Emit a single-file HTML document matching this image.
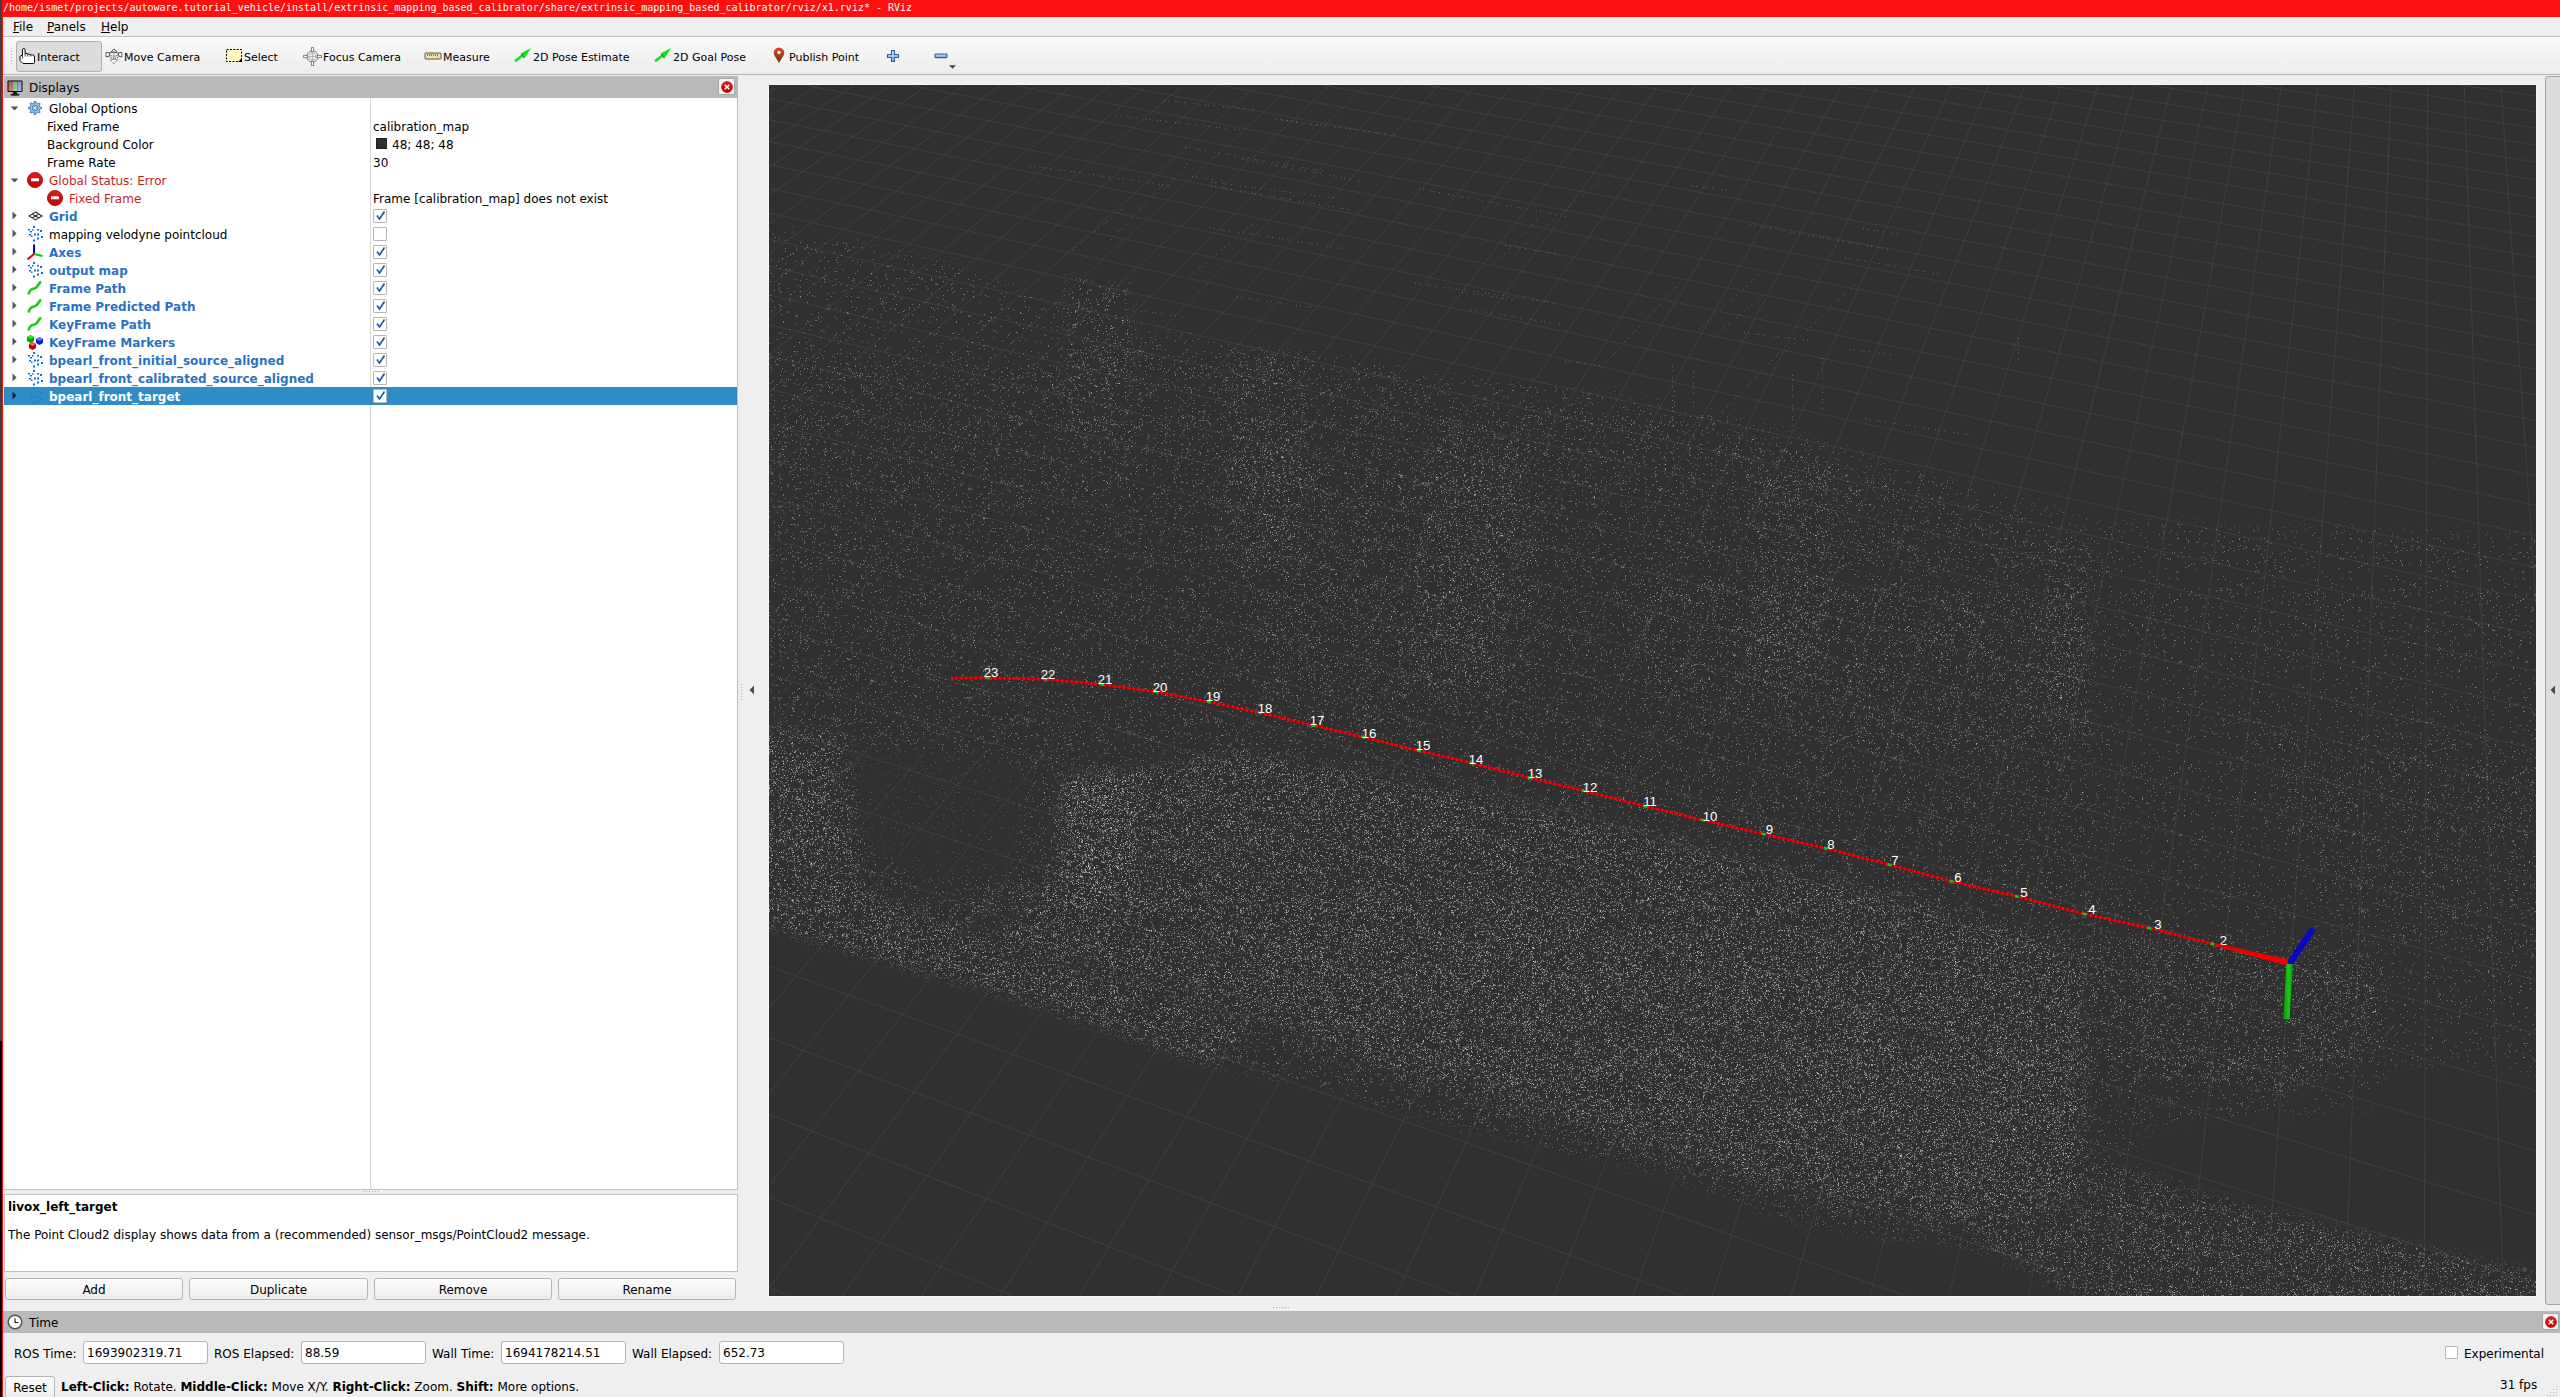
<!DOCTYPE html>
<html><head><meta charset="utf-8"><title>RViz</title>
<style>
*{box-sizing:border-box;margin:0;padding:0}
html,body{width:2560px;height:1397px;overflow:hidden;background:#efefef}
body{position:relative;font:12px "DejaVu Sans","Liberation Sans",sans-serif;color:#000}
body>div,body>svg,body>span{position:absolute}
#edgeL1{left:0;top:0;width:2px;height:1041px;background:#3c4043}
#edgeL2{left:0;top:1041px;width:2px;height:356px;background:#000}
#edgeR{left:2px;top:0;width:1px;height:1397px;background:#ff0d0d}
#title{left:2px;top:0;width:2558px;height:17px;background:#ff1010;color:#fff;font:10px "DejaVu Sans Mono","Liberation Mono",monospace;line-height:15px;padding-left:1px;white-space:pre}
#menubar{left:3px;top:17px;width:2557px;height:19px;background:#efefef}
#menuline{left:3px;top:36px;width:2557px;height:1px;background:#c4c4c4}
#menubar span{position:absolute;top:3px;line-height:15px}
#menubar u{text-decoration:underline;text-underline-offset:1px}
#toolbar{left:3px;top:37px;width:2557px;height:37px;background:linear-gradient(#f9f9f9,#ececec)}
#toolline{left:3px;top:74px;width:2557px;height:1px;background:#b4b4b4}
.tb{position:absolute;top:2px;height:38px;line-height:38px;white-space:nowrap;font-size:11px}
#toolbar svg{position:absolute}
#interact{position:absolute;left:13px;top:4px;width:86px;height:31px;border:1px solid #b0b0b0;border-radius:3px;background:#dcdcdc}
.hdr{background:#b9b9b9;height:22px;line-height:24px}
.hdr svg{position:absolute}
.xbtn{position:absolute;width:17px;height:17px;top:2px;border:1px solid #a8a8a8;border-radius:2px;background:#f4f4f4}
.xbtn svg{left:1.5px;top:1.5px}
#disphdr{left:4px;top:76px;width:734px;height:23px;background:linear-gradient(#b9b9b9 0,#b9b9b9 22px,#d6d6d6 22px,#d6d6d6 23px)}
#tree{left:4px;top:98px;width:734px;height:1092px;background:#fff;border:1px solid #c0c0c0;border-top:none;border-left:none}
#coldiv{left:370px;top:98px;width:1px;height:1091px;background:#d8d8d8}
.row{position:absolute;left:5px;width:732px;height:18px;line-height:18px;white-space:nowrap}
.row span{position:absolute;top:1px}
.row svg{position:absolute}
.selrow{background:#308cc6;box-shadow:-1px 0 0 #308cc6}
.selrow span{color:#fff!important}
.blue{color:#2a72c4;font-weight:bold}
.red{color:#c81e1e}
.cb{position:absolute;left:368px;top:2px;width:14px;height:14px;border:1px solid #b8b8b8;background:#fff;border-radius:1px}
.sw{position:absolute;left:371px;top:3px;width:11px;height:11px;background:#303030;border:1px solid #202020}
#desc{left:4px;top:1194px;width:734px;height:78px;background:#fff;border:1px solid #c0c0c0}
.btn{position:absolute;height:22px;border:1px solid #b4b4b4;border-radius:3px;background:linear-gradient(#fdfdfd,#ececec);text-align:center;line-height:22px}
.fld{position:absolute;top:1341px;height:23px;width:125px;border:1px solid #b4b4b4;border-radius:3px;background:#fff;line-height:23px;padding-left:3px}
.lbl{position:absolute;top:1346px;line-height:16px;white-space:nowrap}
#view{left:769px;top:85px;width:1767px;height:1211px;background:#303030;box-shadow:0 0 0 1px #f6f6f6}
</style></head><body>
<svg width="0" height="0" style="position:absolute"><defs>
<linearGradient id="gRed" x1="0" y1="0" x2="0" y2="1"><stop offset="0" stop-color="#e02020"/><stop offset="1" stop-color="#c00000"/></linearGradient>
<linearGradient id="gPin" x1="0" y1="0" x2="0" y2="1"><stop offset="0" stop-color="#f0402a"/><stop offset="1" stop-color="#5a3a10"/></linearGradient>
<linearGradient id="gBlu" x1="0" y1="0" x2="0" y2="1"><stop offset="0" stop-color="#c8dcf4"/><stop offset="1" stop-color="#7aa6dc"/></linearGradient>
<symbol id="iErr" viewBox="0 0 16 16"><circle cx="8" cy="8" r="7.6" fill="url(#gRed)" stroke="#b00000" stroke-width=".8"/><rect x="4" y="6.3" width="8" height="3" rx=".6" fill="#fff"/></symbol>
<symbol id="iClose" viewBox="0 0 12 12"><circle cx="6" cy="6" r="5.5" fill="url(#gRed)" stroke="#b00000" stroke-width=".6"/><path d="M4.2 4.2L7.8 7.8M7.8 4.2L4.2 7.8" stroke="#fff" stroke-width="1.6" stroke-linecap="round"/></symbol>
<symbol id="iPC" viewBox="0 0 16 16"><g fill="#0a6cf0"><rect x="6" y="0" width="2" height="2"/><rect x="1" y="3" width="2" height="1.5"/><rect x="5" y="3" width="1.5" height="1.5"/><rect x="10" y="3" width="2" height="1.5"/><rect x="13" y="4" width="2" height="2"/><rect x="3" y="5" width="2" height="1.5"/><rect x="2" y="8" width="2" height="1.5"/><rect x="4" y="9.5" width="1.5" height="1.5"/><rect x="7" y="7.5" width="2" height="2"/><rect x="10" y="7.5" width="2" height="2"/><rect x="10" y="11.5" width="2" height="2"/><rect x="14" y="10" width="2" height="2"/><rect x="6" y="13.5" width="2" height="2"/></g></symbol>
<symbol id="iPath" viewBox="0 0 16 16"><path d="M1.5 14.5C3 8 6 9.5 8.5 8S11.5 3.5 14 1.5" fill="none" stroke="#16d016" stroke-width="2.6" stroke-linecap="butt"/></symbol>
<symbol id="iAxes" viewBox="0 0 16 16"><path d="M7 0.5V10" stroke="#0000e6" stroke-width="2"/><path d="M7 10L15.5 12" stroke="#00d000" stroke-width="2"/><path d="M7 10L0.5 15.5" stroke="#e60000" stroke-width="2"/></symbol>
<symbol id="iGrid" viewBox="0 0 16 10"><path d="M8 .8L15 5L8 9.2L1 5ZM4.5 2.9L11.5 7.1M11.5 2.9L4.5 7.1" fill="none" stroke="#222" stroke-width="1.1"/></symbol>
<symbol id="iGear" viewBox="0 0 14 14"><path d="M11.83 6.16L13.55 6.17L13.55 7.83L11.83 7.84L11.01 9.82L12.22 11.05L11.05 12.22L9.82 11.01L7.84 11.83L7.83 13.55L6.17 13.55L6.16 11.83L4.18 11.01L2.95 12.22L1.78 11.05L2.99 9.82L2.17 7.84L0.45 7.83L0.45 6.17L2.17 6.16L2.99 4.18L1.78 2.95L2.95 1.78L4.18 2.99L6.16 2.17L6.17 0.45L7.83 0.45L7.84 2.17L9.82 2.99L11.05 1.78L12.22 2.95L11.01 4.18Z" fill="#a9c6ea" stroke="#3a78c8" stroke-width="1" stroke-linejoin="round"/><circle cx="7" cy="7" r="2.900" fill="none" stroke="#3a78c8" stroke-width=".9"/><circle cx="7" cy="7" r="1.500" fill="#fff" stroke="#6f9bd6" stroke-width=".8"/></symbol>
<symbol id="iMark" viewBox="0 0 16 16"><path d="M0 3L3.5 1L7 3V7L3.5 9L0 7Z" fill="#00a800"/><path d="M0 3L3.5 1L7 3L3.5 5Z" fill="#20f020"/><path d="M9 5L12.5 3L16 5V9L12.5 11L9 9Z" fill="#1020c0"/><path d="M9 5L12.5 3L16 5L12.5 7Z" fill="#6080ff"/><path d="M2 10L5.5 8L9 10V14L5.5 16L2 14Z" fill="#c00000"/><path d="M2 10L5.5 8L9 10L5.5 12Z" fill="#ff6060"/></symbol>
<symbol id="iArrR" viewBox="0 0 5 9"><path d="M.5 .5L4.6 4.5L.5 8.5Z" fill="#555"/></symbol>
<symbol id="iArrRS" viewBox="0 0 5 9"><path d="M.5 .5L4.6 4.5L.5 8.5Z" fill="#0e2a44"/></symbol>
<symbol id="iArrD" viewBox="0 0 9 5"><path d="M.5 .5L8.5 .5L4.5 4.6Z" fill="#555"/></symbol>
<symbol id="iChk" viewBox="0 0 13 13"><path d="M3 6.5L5.5 10L10.5 2.5" fill="none" stroke="#1c5cb0" stroke-width="1.7"/></symbol>
<symbol id="iGreenArr" viewBox="0 0 16 14"><path d="M1 12.5L8.5 6.5" stroke="#10e020" stroke-width="2.4"/><path d="M6.3 5.2L16 0L10 9.6Z" fill="#10e020"/><path d="M6.8 5.6L9.6 9.2" stroke="#0a9a14" stroke-width="1"/></symbol>
</defs></svg>

<div id="edgeL1"></div><div id="edgeL2"></div>
<div id="title">/home/ismet/projects/autoware.tutorial_vehicle/install/extrinsic_mapping_based_calibrator/share/extrinsic_mapping_based_calibrator/rviz/x1.rviz* - RViz</div>
<div id="edgeR"></div>
<div id="menubar"><span style="left:10px"><u>F</u>ile</span><span style="left:44px"><u>P</u>anels</span><span style="left:98px"><u>H</u>elp</span></div>
<div id="menuline"></div>
<div id="toolbar">
<svg style="left:7px;top:10px" width="3" height="18"><g fill="#b4b4b4"><rect x="1" y="1" width="1" height="1"/><rect x="1" y="4" width="1" height="1"/><rect x="1" y="7" width="1" height="1"/><rect x="1" y="10" width="1" height="1"/><rect x="1" y="13" width="1" height="1"/><rect x="1" y="16" width="1" height="1"/></g></svg>
<div id="interact"></div>
<svg style="left:16px;top:11px" width="16" height="16" viewBox="0 0 16 16"><path d="M4 15.5L1 12.5V8.2L3.5 7V1.8Q3.5.5 4.8.5T6.1 1.8V5.5H8.2L8.6 6.2H10.8L11.2 6.9H13.4Q15.5 6.9 15.5 9V14.5Q15.5 15.5 14.5 15.5Z" fill="#fff" stroke="#000" stroke-width=".95" stroke-linejoin="round"/><path d="M3.5 7V10.5M6.1 5.5V8.5M8.6 6.2V8.5M11.2 6.9V8.8" stroke="#000" stroke-width=".7"/></svg>
<span class="tb" style="left:34px">Interact</span>
<svg style="left:102px;top:11px" width="18" height="17" viewBox="0 0 18 17"><rect x="8.1" y="4.200" width="1.600" height="7.500" fill="#c6c6c6"/><g fill="#fff" stroke-width=".9" stroke-linejoin="round"><path d="M8.900 .9L12 4.300H5.800Z" stroke="#484848"/><path d="M8.900 15.900L12.800 11.600H5Z" stroke="#8c8c8c"/><path d="M1 4.300L4.600 4.900V7.900L1 9Z" stroke="#484848"/><path d="M16.800 4.300L13.200 4.900V7.900L16.800 9Z" stroke="#484848"/></g><g fill="none" stroke="#3c3c3c" stroke-width=".9" stroke-dasharray="1.400 .9"><ellipse cx="8.900" cy="6.100" rx="4.600" ry="2"/><path d="M3.400 8.300Q8.900 12.300 14.400 8.300"/></g></svg>
<span class="tb" style="left:121px">Move Camera</span>
<svg style="left:222px;top:11px" width="18" height="15" viewBox="0 0 18 15"><rect x="1.5" y="1.5" width="15" height="12" fill="#fdf8c0" stroke="#000" stroke-width="1" stroke-dasharray="2 1.4"/><path d="M17 10V14H13Z" fill="#000"/></svg>
<span class="tb" style="left:241px">Select</span>
<svg style="left:300px;top:10px" width="19" height="19" viewBox="0 0 19 19"><g fill="none" stroke="#777" stroke-width="1"><circle cx="9.5" cy="9.5" r="5.6"/><circle cx="9.5" cy="9.5" r="3.4" stroke-dasharray="1.4 1"/></g><g fill="#fff" stroke="#777" stroke-width=".9"><rect x="8.4" y=".6" width="2.2" height="4.2"/><rect x="8.4" y="14.2" width="2.2" height="4.2"/><rect x=".6" y="8.4" width="4.2" height="2.2"/><rect x="14.2" y="8.4" width="4.2" height="2.2"/></g><path d="M9.5 5V14M5 9.5H14" stroke="#aaa" stroke-width=".8"/></svg>
<span class="tb" style="left:320px">Focus Camera</span>
<svg style="left:421px;top:15px" width="18" height="8" viewBox="0 0 18 8"><rect x="1" y="1" width="16" height="6" rx=".6" fill="#f0e4a8" stroke="#555" stroke-width="1"/><path d="M3.5 2V4M5.5 2V4M7.5 2V4M9.5 2V4M11.5 2V4M13.5 2V4.5" stroke="#555" stroke-width=".8"/></svg>
<span class="tb" style="left:440px">Measure</span>
<svg style="left:511px;top:11px" width="17" height="15" viewBox="0 0 16 14"><use href="#iGreenArr"/></svg>
<span class="tb" style="left:530px">2D Pose Estimate</span>
<svg style="left:651px;top:11px" width="17" height="15" viewBox="0 0 16 14"><use href="#iGreenArr"/></svg>
<span class="tb" style="left:670px">2D Goal Pose</span>
<svg style="left:770px;top:10px" width="12" height="17" viewBox="0 0 12 17"><path d="M6 16.5C4.5 12 .7 9.5 .7 5.8A5.3 5.3 0 0 1 11.3 5.800C11.3 9.500 7.500 12 6 16.500Z" fill="url(#gPin)"/><circle cx="6" cy="5.400" r="1.700" fill="#fff"/></svg>
<span class="tb" style="left:786px">Publish Point</span>
<svg style="left:883px;top:12px" width="14" height="14" viewBox="0 0 14 14"><path d="M5.500 1.500H8.500V5.500H12.500V8.500H8.500V12.500H5.500V8.500H1.500V5.500H5.500Z" fill="url(#gBlu)" stroke="#2c5ca4" stroke-width="1.100" stroke-linejoin="round"/></svg>
<svg style="left:931px;top:16px" width="14" height="6" viewBox="0 0 14 6"><rect x="1" y="1" width="12" height="3.600" rx=".8" fill="url(#gBlu)" stroke="#2c5ca4" stroke-width="1.100"/></svg>
<svg style="left:946px;top:28px" width="7" height="4" viewBox="0 0 7 4"><path d="M0 .3H7L3.500 3.800Z" fill="#444"/></svg>
</div>
<div id="toolline"></div>
<div id="disphdr" class="hdr"><svg style="left:3px;top:4px" width="16" height="16" viewBox="0 0 16 16"><defs><linearGradient id="gm" x1="0" y1="0" x2="1" y2="1"><stop offset="0" stop-color="#000" stop-opacity=".25"/><stop offset="1" stop-color="#fff" stop-opacity=".25"/></linearGradient></defs><rect x=".5" y=".5" width="15" height="11.500" rx="1" fill="#000"/><rect x="1.500" y="1.500" width="4.400" height="9.500" fill="#e07878"/><rect x="5.900" y="1.500" width="4.400" height="9.500" fill="#78e078"/><rect x="10.300" y="1.500" width="4.200" height="9.500" fill="#9898f0"/><rect x="1.500" y="1.500" width="13" height="9.500" fill="url(#gm)"/><path d="M6.500 12H9.500L10.500 14H5.500Z" fill="#000"/><ellipse cx="8" cy="14.800" rx="4.800" ry="1" fill="#222"/></svg><span style="position:absolute;left:25px">Displays</span><div class="xbtn" style="left:714px"><svg width="12" height="12"><use href="#iClose"/></svg></div></div>
<div id="tree"></div>
<div id="coldiv"></div>
<div class="row" style="top:99px"><svg style="left:5px;top:7px" width="9" height="5"><use href="#iArrD"/></svg><svg style="left:23px;top:2px" width="14" height="14"><use href="#iGear"/></svg><span class="" style="left:44px">Global Options</span></div>
<div class="row" style="top:117px"><span class="" style="left:42px">Fixed Frame</span><span style="left:368px">calibration_map</span></div>
<div class="row" style="top:135px"><span class="" style="left:42px">Background Color</span><i class="sw"></i><span style="left:387px">48; 48; 48</span></div>
<div class="row" style="top:153px"><span class="" style="left:42px">Frame Rate</span><span style="left:368px">30</span></div>
<div class="row" style="top:171px"><svg style="left:5px;top:7px" width="9" height="5"><use href="#iArrD"/></svg><svg style="left:22px;top:1px" width="16" height="16"><use href="#iErr"/></svg><span class="red" style="left:44px">Global Status: Error</span></div>
<div class="row" style="top:189px"><svg style="left:42px;top:1px" width="16" height="16"><use href="#iErr"/></svg><span class="red" style="left:64px">Fixed Frame</span><span style="left:368px">Frame [calibration_map] does not exist</span></div>
<div class="row" style="top:207px"><svg style="left:7px;top:4px" width="5" height="9"><use href="#iArrR"/></svg><svg style="left:23px;top:4px" width="15" height="10"><use href="#iGrid"/></svg><span class="blue" style="left:44px">Grid</span><i class="cb"></i><svg style="left:369px;top:2px" width="13" height="13"><use href="#iChk"/></svg></div>
<div class="row" style="top:225px"><svg style="left:7px;top:4px" width="5" height="9"><use href="#iArrR"/></svg><svg style="left:22px;top:1px" width="16" height="16"><use href="#iPC"/></svg><span class="" style="left:44px">mapping velodyne pointcloud</span><i class="cb"></i></div>
<div class="row" style="top:243px"><svg style="left:7px;top:4px" width="5" height="9"><use href="#iArrR"/></svg><svg style="left:22px;top:1px" width="16" height="16"><use href="#iAxes"/></svg><span class="blue" style="left:44px">Axes</span><i class="cb"></i><svg style="left:369px;top:2px" width="13" height="13"><use href="#iChk"/></svg></div>
<div class="row" style="top:261px"><svg style="left:7px;top:4px" width="5" height="9"><use href="#iArrR"/></svg><svg style="left:22px;top:1px" width="16" height="16"><use href="#iPC"/></svg><span class="blue" style="left:44px">output map</span><i class="cb"></i><svg style="left:369px;top:2px" width="13" height="13"><use href="#iChk"/></svg></div>
<div class="row" style="top:279px"><svg style="left:7px;top:4px" width="5" height="9"><use href="#iArrR"/></svg><svg style="left:22px;top:1px" width="16" height="16"><use href="#iPath"/></svg><span class="blue" style="left:44px">Frame Path</span><i class="cb"></i><svg style="left:369px;top:2px" width="13" height="13"><use href="#iChk"/></svg></div>
<div class="row" style="top:297px"><svg style="left:7px;top:4px" width="5" height="9"><use href="#iArrR"/></svg><svg style="left:22px;top:1px" width="16" height="16"><use href="#iPath"/></svg><span class="blue" style="left:44px">Frame Predicted Path</span><i class="cb"></i><svg style="left:369px;top:2px" width="13" height="13"><use href="#iChk"/></svg></div>
<div class="row" style="top:315px"><svg style="left:7px;top:4px" width="5" height="9"><use href="#iArrR"/></svg><svg style="left:22px;top:1px" width="16" height="16"><use href="#iPath"/></svg><span class="blue" style="left:44px">KeyFrame Path</span><i class="cb"></i><svg style="left:369px;top:2px" width="13" height="13"><use href="#iChk"/></svg></div>
<div class="row" style="top:333px"><svg style="left:7px;top:4px" width="5" height="9"><use href="#iArrR"/></svg><svg style="left:22px;top:1px" width="16" height="16"><use href="#iMark"/></svg><span class="blue" style="left:44px">KeyFrame Markers</span><i class="cb"></i><svg style="left:369px;top:2px" width="13" height="13"><use href="#iChk"/></svg></div>
<div class="row" style="top:351px"><svg style="left:7px;top:4px" width="5" height="9"><use href="#iArrR"/></svg><svg style="left:22px;top:1px" width="16" height="16"><use href="#iPC"/></svg><span class="blue" style="left:44px">bpearl_front_initial_source_aligned</span><i class="cb"></i><svg style="left:369px;top:2px" width="13" height="13"><use href="#iChk"/></svg></div>
<div class="row" style="top:369px"><svg style="left:7px;top:4px" width="5" height="9"><use href="#iArrR"/></svg><svg style="left:22px;top:1px" width="16" height="16"><use href="#iPC"/></svg><span class="blue" style="left:44px">bpearl_front_calibrated_source_aligned</span><i class="cb"></i><svg style="left:369px;top:2px" width="13" height="13"><use href="#iChk"/></svg></div>
<div class="row selrow" style="top:387px"><svg style="left:7px;top:4px" width="5" height="9"><use href="#iArrRS"/></svg><svg style="left:22px;top:1px;opacity:.45" width="16" height="16"><use href="#iPC"/></svg><span class="blue" style="left:44px">bpearl_front_target</span><i class="cb"></i><svg style="left:369px;top:2px" width="13" height="13"><use href="#iChk"/></svg></div>
<div id="desc"><b style="position:absolute;left:3px;top:4px;line-height:16px">livox_left_target</b><span style="position:absolute;left:3px;top:32px;line-height:16px;white-space:nowrap">The Point Cloud2 display shows data from a (recommended) sensor_msgs/PointCloud2 message.</span></div>
<div class="btn" style="left:5px;top:1278px;width:178px">Add</div>
<div class="btn" style="left:189px;top:1278px;width:179px">Duplicate</div>
<div class="btn" style="left:374px;top:1278px;width:178px">Remove</div>
<div class="btn" style="left:558px;top:1278px;width:178px">Rename</div>
<div id="timehdr" class="hdr" style="left:3px;top:1311px;width:2557px"><svg style="left:4px;top:3px" width="16" height="16" viewBox="0 0 16 16"><circle cx="8" cy="8" r="6.800" fill="#fff" stroke="#555" stroke-width="1.500"/><path d="M8 4.500V8.500H11.500" fill="none" stroke="#222" stroke-width="1.200"/></svg><span style="position:absolute;left:26px">Time</span><div class="xbtn" style="left:2539px"><svg width="12" height="12"><use href="#iClose"/></svg></div></div>
<span class="lbl" style="left:14px">ROS Time:</span><div class="fld" style="left:83px">1693902319.71</div>
<span class="lbl" style="left:214px">ROS Elapsed:</span><div class="fld" style="left:301px">88.59</div>
<span class="lbl" style="left:432px">Wall Time:</span><div class="fld" style="left:501px">1694178214.51</div>
<span class="lbl" style="left:632px">Wall Elapsed:</span><div class="fld" style="left:719px">652.73</div>
<div class="cb" style="left:2445px;top:1346px;width:13px;height:13px"></div><span class="lbl" style="left:2464px">Experimental</span>
<div class="btn" style="left:5px;top:1376px;width:50px;height:25px;line-height:23px">Reset</div>
<span class="lbl" style="left:61px;top:1379px"><b>Left-Click:</b> Rotate. <b>Middle-Click:</b> Move X/Y. <b>Right-Click:</b> Zoom. <b>Shift:</b> More options.</span>
<span class="lbl" style="left:2500px;top:1377px">31 fps</span>
<div style="left:2545px;top:76px;width:22px;height:1229px;background:#dcdcdc;border:1px solid #a4a4a4;border-radius:3px"></div>
<svg style="left:2550px;top:685px" width="6" height="10"><path d="M5 .5V9.500L.5 5Z" fill="#4a4a4a"/></svg>
<svg style="left:749px;top:685px" width="6" height="10"><path d="M5 .5V9.500L.5 5Z" fill="#4a4a4a"/></svg>
<svg style="left:740px;top:683px" width="3" height="18"><g fill="#b0b0b0"><rect x="1" y="1" width="1" height="1"/><rect x="1" y="4" width="1" height="1"/><rect x="1" y="7" width="1" height="1"/><rect x="1" y="10" width="1" height="1"/><rect x="1" y="13" width="1" height="1"/><rect x="1" y="16" width="1" height="1"/></g></svg>
<svg style="left:362px;top:1190px" width="18" height="3"><g fill="#b0b0b0"><rect x="1" y="1" width="1" height="1"/><rect x="4" y="1" width="1" height="1"/><rect x="7" y="1" width="1" height="1"/><rect x="10" y="1" width="1" height="1"/><rect x="13" y="1" width="1" height="1"/><rect x="16" y="1" width="1" height="1"/></g></svg>
<svg style="left:1272px;top:1306px" width="18" height="3"><g fill="#b0b0b0"><rect x="1" y="1" width="1" height="1"/><rect x="4" y="1" width="1" height="1"/><rect x="7" y="1" width="1" height="1"/><rect x="10" y="1" width="1" height="1"/><rect x="13" y="1" width="1" height="1"/><rect x="16" y="1" width="1" height="1"/></g></svg>
<svg style="left:2547px;top:1385px" width="12" height="12"><g fill="#b8b8b8"><rect x="9" y="1" width="1" height="1"/><rect x="6" y="4" width="1" height="1"/><rect x="9" y="4" width="1" height="1"/><rect x="3" y="7" width="1" height="1"/><rect x="6" y="7" width="1" height="1"/><rect x="9" y="7" width="1" height="1"/><rect x="0" y="10" width="1" height="1"/><rect x="3" y="10" width="1" height="1"/><rect x="6" y="10" width="1" height="1"/><rect x="9" y="10" width="1" height="1"/></g></svg>
<div id="view"></div>
<svg id="v3d" style="left:769px;top:85px" width="1767" height="1211" viewBox="0 0 1767 1211"><defs><clipPath id="vc"><rect width="1767" height="1211"/></clipPath><filter id="bl" x="-5%" y="-5%" width="110%" height="110%"><feGaussianBlur stdDeviation="6"/></filter><filter id="bl2" x="-5%" y="-5%" width="110%" height="110%"><feGaussianBlur stdDeviation="5"/></filter><pattern id="dp0" width="173" height="173" patternUnits="userSpaceOnUse"><path d="M82 38.5h1M12 18h1M24.5 93.5h1M129 54.5h1M111 107.5h1M23 141.5h1M144 31h1M161.5 160.5h1M15.5 147.5h1M12 56.5h1M34 74.5h1M138.5 30.5h1M143 46.5h1M146 163.5h1M24.5 140.5h1M144.5 15.5h1M127 136.5h1M80.5 119.5h1M116 92.5h1M46 62.5h1M76 134.5h1M87 114.5h1M18.5 30.5h1M42 87.5h1M125 107.5h1M171 19h1M146 80.5h1M89 152.5h1M116 17h1M69.5 121.5h1M16.5 15.5h1M79.5 165.5h1M114.5 72.5h1M171 88.5h1M118 90.5h1M29 126.5h1M73.5 33.5h1M101 100h1M127 20.5h1M102 140.5h1M35 110h1M71 106h1M97 59.5h1M45 38.5h1M59 3.5h1M150 46.5h1M1 37.5h1M94.5 156.5h1M32 131h1M167 13.5h1M143 100.5h1M100 26.5h1M102 15.5h1M53 112.5h1M87 153.5h1M0 145.5h1M25.5 93.5h1M18.5 53.5h1M38 162.5h1M88 154.5h1M31 29h1M119 122.5h1M21 36.5h1M87 67.5h1M41 132.5h1M135 92.5h1M139 6h1M76 164h1M66 132.5h1M42 91h1M136 138h1M84 162.5h1M49 61h1M58.5 51.5h1M91 7h1M71 120.5h1M154 88.5h1M89 93.5h1M26 58.5h1M86 52.5h1M156 0.5h1M167 88h1M21 169.5h1M99 51.5h1M45 111h1M85 22h1M101 118.5h1M21 40.5h1M32 7.5h1M119 167.5h1M152.5 121.5h1M89.5 39.5h1M33 5.5h1M166.5 26.5h1M35 111h1M49 54.5h1M54.5 74.5h1M150 83.5h1M107 33.5h1M90.5 117.5h1M132 107h1M128.5 33.5h1M134 130.5h1M112.5 46.5h1M38 44.5h1M158.5 30.5h1M83.5 132.5h1M123 27h1M14 63.5h1M10.5 25.5h1M143 7h1M16 113.5h1M129.5 155.5h1M70.5 115.5h1M122 129h1M133 66h1M51 114.5h1M31 100.5h1M18 171.5h1M18.5 54.5h1M31 39h1M164 169.5h1M64 35h1M56 24.5h1M124 41h1M57.5 41.5h1M131 103.5h1M50 91.5h1M93 4.5h1M117.5 112.5h1M98.5 84.5h1M75 131h1M28 58h1M26 21.5h1M10 46.5h1M33 108h1M66 103.5h1M131 146.5h1M83 22.5h1M46 108h1M68.5 4.5h1M66.5 21.5h1M56 17.5h1M31 116.5h1M141 106h1M68 159.5h1M134 61h1M41 67.5h1M51.5 79.5h1M135 52.5h1M128 172.5h1M88 4h1M9 3.5h1M129 141h1M131 121.5h1M114.5 27.5h1M166.5 110.5h1M139 100h1M78 55h1M87 50h1M162 35.5h1M88 13h1M3.5 18.5h1M65 110.5h1M21 170h1M129 171h1M153.5 62.5h1M11 117.5h1M68 114.5h1M93 84h1M140 82.5h1M79 55.5h1M0 85.5h1M121.5 71.5h1M51.5 63.5h1M1 23.5h1M22 36.5h1M10 100.5h1M77 161.5h1M149 135h1M39 168h1M152 99h1M126 38.5h1M158 164.5h1M131 160.5h1M129 35h1M129 145h1M4 149h1M164 58.5h1M10.5 34.5h1M26 96h1M142.5 12.5h1M160.5 136.5h1M125 67.5h1M17 128h1M23.5 168.5h1M121 64h1M67.5 60.5h1M52.5 59.5h1M117 126h1M19 122h1M73.5 11.5h1M164 50.5h1M37 84.5h1M77.5 159.5h1M3 123.5h1M68 172.5h1M55 172.5h1M132 73.5h1M119 30h1M140 51.5h1M21 121.5h1M117 19h1M115 68.5h1M53.5 19.5h1M36 134.5h1M92.5 33.5h1M161 130.5h1M28 93.5h1M124 100.5h1M0.5 125.5h1M103.5 77.5h1M106 88.5h1M30 84.5h1M86 101.5h1M50 3h1M74 64.5h1M100 99h1M150 19.5h1M109 70h1M71 26.5h1M169.5 73.5h1M38 63h1M111 130.5h1M95 109h1M161 102h1M141 140.5h1M20 12h1M105.5 115.5h1M35 164h1M124 12h1M140 32.5h1M106 87.5h1M65 167.5h1M167 61.5h1M142 171.5h1M42 164.5h1M53 128h1M127 140.5h1M85 115.5h1M140 49.5h1M44.5 87.5h1M81 61.5h1M145 51h1M105 98.5h1M134 53.5h1M86 15.5h1M147 92.5h1M128.5 135.5h1M55 23.5h1M63 98.5h1M114 110h1M5 32.5h1M121 150.5h1M18 100h1M135 119h1M63 27.5h1M38 133h1M27 165h1M117.5 21.5h1M10 0h1M59 145h1M165 77h1M160.5 64.5h1M111 28.5h1M76 134h1M49 99.5h1M153 0.5h1M77 117.5h1M80 165h1M62.5 121.5h1M140 63.5h1M105 166.5h1M5 49.5h1M172 165.5h1M65.5 58.5h1M94 58.5h1M86 107.5h1M101 50.5h1M74 129.5h1M126 51.5h1M49 59.5h1M67 75.5h1M159.5 126.5h1M57 124.5h1M170 14h1M37 100.5h1M6 152.5h1M13 15.5h1M115.5 80.5h1M20 42.5h1M47 167h1M119 8.5h1M96 95h1M113 43.5h1M20 71.5h1M107.5 31.5h1M53 97.5h1M79 110.5h1M121 50.5h1M114 49.5h1M121.5 7.5h1M63 160h1M10 96.5h1M16 15.5h1M16 155.5h1M69 85h1M157 11.5h1M81 70.5h1M152 162h1M16 6h1M27.5 121.5h1M119 98h1M110 126.5h1M127 46.5h1M77.5 38.5h1M83 81.5h1M152.5 20.5h1M100 40.5h1M16 166.5h1M141 139.5h1M109 26h1M67 159.5h1M24 107.5h1M114 44.5h1M106.5 117.5h1M172.5 60.5h1M170 31h1M75 75.5h1M68 95.5h1M66 50.5h1M47 62.5h1M72 148.5h1M16 101.5h1M62.5 129.5h1M166.5 25.5h1M9 26.5h1M59 114h1M10 75.5h1M12.5 48.5h1M149 49h1M95 131h1M114 154.5h1M170 1.5h1M152 158.5h1M9 94.5h1M11 52h1M9.5 153.5h1M52 2h1M104 95.5h1M79 19.5h1M126 140.5h1M104 25h1M169 140.5h1M136.5 23.5h1M101 69.5h1M72 170.5h1M13.5 79.5h1M91 106.5h1M93 164.5h1M103 52h1M111 40.5h1M23.5 103.5h1M93 117h1M33 3.5h1M36 164h1M101.5 22.5h1M94 129.5h1M89 72.5h1M43 17.5h1M125 50.5h1M11 123.5h1M155 162.5h1M158.5 41.5h1M56 158.5h1M50 121.5h1M55 10.5h1M132 40.5h1M31 38.5h1M49 10h1M172.5 9.5h1M82 30.5h1M116 140h1M78 166.5h1M149 63.5h1M168 94.5h1M112 45.5h1M158 125.5h1M114 158h1M117 45h1M102 27.5h1M91 110.5h1M113.5 129.5h1M10.5 10.5h1M21 80h1M130 20.5h1M129.5 96.5h1M34 6h1M157 28.5h1M125 73h1M42 56.5h1M89 156h1M40 82h1M70 116.5h1M128 122.5h1M67.5 157.5h1M81 95.5h1M46 103.5h1M71 83h1M43 67.5h1M135.5 12.5h1M92.5 115.5h1M148 26.5h1M137 161h1M95 67.5h1M94 147.5h1M84 20.5h1M45.5 157.5h1M12 75h1M64.5 79.5h1M149 169h1M0 8.5h1M74.5 157.5h1M106 131.5h1M12 33.5h1M156 167.5h1M13.5 0.5h1M77.5 27.5h1M136 57.5h1M77 150.5h1M93 159h1M40 34.5h1M62 38.5h1M16 163.5h1M170 69.5h1M67 2.5h1M143.5 89.5h1M148.5 113.5h1M132 126.5h1M0 11.5h1M6 103.5h1M40 14h1M26.5 3.5h1M168 50.5h1M51.5 132.5h1M129.5 165.5h1M156.5 44.5h1M16.5 76.5h1M122 137.5h1M111 119.5h1M167 115.5h1M26 66.5h1M9 31.5h1M67 13.5h1M141.5 111.5h1M133 67.5h1M55 21h1M3 43.5h1M60 51h1M83 49h1M84 153.5h1M161 170h1M137 120.5h1M135 1h1M111.5 59.5h1M78 54.5h1M149.5 19.5h1M43 37.5h1M28.5 27.5h1M41 88h1M7 7.5h1M164 162.5h1M17 11.5h1M151 93.5h1M136 170.5h1M98 27.5h1M52 28.5h1M162 22h1M161 161.5h1M25 33.5h1M165 52.5h1M86 108.5h1M89 65h1M12 94h1M154 128.5h1M73.5 158.5h1M105 7.5h1M25 88.5h1M12.5 137.5h1M23 147h1M43 111.5h1M51 73h1M13 1.5h1M24.5 125.5h1M47.5 126.5h1M131.5 66.5h1M40 72h1M59 127.5h1M162 20.5h1M143.5 26.5h1M91 24.5h1M101 22.5h1M165 6.5h1M77 67.5h1M139 128.5h1M161 59h1M32.5 136.5h1M154 165.5h1M148.5 83.5h1M115.5 169.5h1M82 43.5h1M65 148.5h1M85.5 118.5h1M60 129.5h1M77 158.5h1M39.5 63.5h1M154 133.5h1M60 83h1M66 26.5h1M168 26.5h1M38 37h1M76 111.5h1M27 163h1M71 52h1M118 8.5h1M111.5 56.5h1M161 75.5h1M36.5 65.5h1M103.5 1.5h1M110.5 146.5h1M165 107h1M170 167h1M164 149h1M46 164.5h1M110 80.5h1M25 107.5h1M102 161.5h1M108 123.5h1M159.5 104.5h1M169 46h1M83 2.5h1M125 27.5h1M139 55.5h1M51 132.5h1M147.5 116.5h1M121 131.5h1M94 133.5h1M116 53h1M47.5 100.5h1M31 157.5h1M14 64.5h1M102 15.5h1M107.5 107.5h1M172.5 90.5h1M27 57.5h1M102 134h1M100 118.5h1M33 17h1M162 49.5h1M143 57h1M37.5 90.5h1M105 119h1M140 166.5h1M120 90h1M58.5 68.5h1M64.5 109.5h1M123 0h1M71 91.5h1M77 82.5h1M109.5 159.5h1M168 92.5h1M77 98.5h1M144 83h1M35 135h1M162 149.5h1M2 53h1M167 75.5h1M25 148.5h1M59 47h1M88 39.5h1M103 136.5h1M155.5 23.5h1M140 162h1M50.5 126.5h1M135.5 20.5h1M112 171h1M142 30.5h1M59 35.5h1M142 14.5h1M36 125.5h1M42.5 138.5h1M1 41h1M119 144.5h1M75 119.5h1M107 19.5h1M92.5 162.5h1M5 156.5h1M84.5 24.5h1M124 36.5h1M106 160.5h1M24 168.5h1M121.5 134.5h1M53 72.5h1M108.5 64.5h1M74 74.5h1M126 103.5h1M69 129.5h1M52 167.5h1M30 84.5h1M76.5 32.5h1M162 22h1M10.5 102.5h1M103.5 139.5h1M102 76.5h1M11 48h1M121 155h1M15 128h1M156.5 96.5h1M160.5 172.5h1M152 21.5h1M170 162.5h1M44.5 25.5h1M9 107h1M167 3.5h1M35.5 79.5h1M66 77.5h1M8 81.5h1M144.5 164.5h1M13.5 127.5h1M10 30h1M107.5 147.5h1M103 114.5h1M99.5 152.5h1M168 39.5h1M105 140.5h1M164 120.5h1M38 160.5h1M1.5 2.5h1M31 22.5h1M31 33.5h1M70 145.5h1M47 12.5h1M37 21.5h1M142 127.5h1M65.5 13.5h1M2 15.5h1M166 158.5h1M79.5 79.5h1" stroke="#fff" stroke-opacity="0.36" stroke-width="1" fill="none"/></pattern><mask id="dm0" maskUnits="userSpaceOnUse" x="0" y="0" width="1767" height="1211"><g fill="#fff" filter="url(#bl)"><polygon points="-9,139 174,174 286,217 468,260 573,269 694,291 868,308 980,334 1084,364 1327,434 1778,447 1778,989 1622,980 1605,1024 1388,1041 1353,1076 1475,1119 1778,1193 1778,1232 1353,1232 1195,1162 1126,1155 1022,1137 884,1087 781,1066 694,1044 564,1009 434,979 347,949 217,905 108,875 -9,840" /><polygon points="54,655 261,677 251,787 150,799 71,744" fill="#000" fill-opacity="0.55"/></g></mask><pattern id="dp1" width="191" height="191" patternUnits="userSpaceOnUse"><path d="M42.5 124.5h1M80 94h1M186 112.5h1M42 37h1M29 92h1M41 161h1M122 98h1M115 69h1M145 85.5h1M15 159h1M180 153.5h1M155 185h1M38 153h1M149 109h1M63 96.5h1M96 154h1M59 115.5h1M0 82.5h1M108.5 40.5h1M10 73h1M146 37.5h1M140 175h1M127.5 88.5h1M138 141.5h1M97 51h1M184 59.5h1M14 173.5h1M181 52h1M150 2h1M117 138.5h1M90 16.5h1M148 133h1M133 82.5h1M150 51.5h1M49 23.5h1M179 74.5h1M144 91.5h1M132 38.5h1M126 95h1M95 161.5h1M20 39.5h1M7 88.5h1M155 5.5h1M52 144.5h1M145 54.5h1M71 109.5h1M114 151h1M33 65h1M86 51h1M96 21.5h1M8 142.5h1M180 117.5h1M16.5 153.5h1M30 180h1M65.5 81.5h1M164 22h1M171 129.5h1M114 40.5h1M60 184.5h1M9 65h1M15 141h1M12 66h1M181.5 189.5h1M123 14.5h1M81 1h1M173.5 76.5h1M112 167.5h1M82 95.5h1M31 95.5h1M43 112.5h1M36 173h1M119 183h1M9 40h1M56 19h1M95 35h1M24 98h1M160 19.5h1M86 82h1M122.5 29.5h1M36 84.5h1M14.5 46.5h1M141 37.5h1M38 68.5h1M63 39.5h1M146 75.5h1M42 66.5h1M81 116h1M29 39h1M14 161h1M171.5 54.5h1M73 30.5h1M51 93.5h1M66 61h1M24 99.5h1M41 14h1M75 36h1M4 113h1M87 130.5h1M0 134.5h1M92 111.5h1M104 55.5h1M46 35h1M133.5 58.5h1M50 153.5h1M22.5 155.5h1M70 44.5h1M156.5 171.5h1M49 149.5h1M2.5 16.5h1M133 104h1M14 132h1M85 72h1M126 23.5h1M122 34h1M68 63.5h1M93 9.5h1M95.5 147.5h1M1.5 91.5h1M114 132.5h1M91 182.5h1M82 182h1M147 15.5h1M27 187.5h1M131.5 6.5h1M137 34.5h1M22.5 57.5h1M42 26.5h1M142 7.5h1M178 189.5h1M4.5 153.5h1M118 133.5h1M113 26.5h1M24 183.5h1M69 31.5h1M149 128h1M28 31.5h1M35.5 138.5h1M58.5 37.5h1M118 101.5h1M4 162.5h1M107 152h1M134 9.5h1M13 92.5h1M61.5 85.5h1M144 82h1M143 13.5h1M37 174h1M63.5 108.5h1M2 93.5h1M47 17.5h1M51.5 129.5h1M57 35.5h1M101.5 116.5h1M10 8h1M158 68h1M159.5 69.5h1M9 159.5h1M31 133.5h1M60 10.5h1M78.5 88.5h1M30.5 15.5h1M131 68.5h1M151 136h1M112.5 31.5h1M75.5 104.5h1M70.5 62.5h1M189 139.5h1M116.5 156.5h1M56 166.5h1M140 181.5h1M140.5 77.5h1M120 79.5h1M85 56.5h1M139 98h1M101 3h1M41 61.5h1M83 125.5h1M55 75.5h1M5.5 40.5h1M155 89.5h1M15 132.5h1M112.5 90.5h1M27 133.5h1M173 189h1M106.5 86.5h1M35 172.5h1M156 70h1M132.5 24.5h1M190 121.5h1M161.5 181.5h1M180 32.5h1M26 1.5h1M140 149.5h1M101 146.5h1M71.5 159.5h1M97.5 115.5h1M73 185.5h1M90.5 100.5h1M152.5 98.5h1M1 190h1M127 97.5h1M47 137.5h1M37.5 111.5h1M148 59.5h1M84 82h1M155 62h1M52 109h1M2 6.5h1M144 127.5h1M137.5 79.5h1M111 132h1M186 175.5h1M118 91.5h1M173 89.5h1M2 173.5h1M58 25.5h1M128.5 102.5h1M146 39h1M107 124.5h1M159 150.5h1M135 23.5h1M81 93h1M79 131.5h1M167.5 75.5h1M130.5 107.5h1M134 74h1M53 129h1M105 46.5h1M144 154.5h1M145.5 161.5h1M10 177.5h1M0.5 78.5h1M141 1h1M101.5 25.5h1M171 7.5h1M127.5 141.5h1M165.5 136.5h1M36 147.5h1M154 31.5h1M132 130.5h1M25 19.5h1M133 125h1M156 110h1M15 166.5h1M148 82.5h1M60 90.5h1M8.5 68.5h1M149 16.5h1M115 159.5h1M13 56h1M149 11.5h1M158 61.5h1M11 40h1M44 80.5h1M116 77.5h1M64 126h1M17.5 62.5h1M172.5 183.5h1M105 79.5h1M182 124.5h1M62 22.5h1M91 97.5h1M74.5 101.5h1M29.5 85.5h1M98 85.5h1M16 31.5h1M89 141.5h1M48 119.5h1M60 111.5h1M170 6.5h1M39.5 61.5h1M23 50.5h1M32 142.5h1M61 40.5h1M55 184.5h1M161 148.5h1M121 129.5h1M115 172.5h1M180.5 66.5h1M112 150h1M136 63.5h1M130 54.5h1M31.5 173.5h1M138.5 69.5h1M98.5 7.5h1M145 37.5h1M99 181.5h1M45 59.5h1M169 27.5h1M92 128h1M49.5 16.5h1M22 57.5h1M183 102.5h1M103 118h1M160 33h1M45 7.5h1M169 176.5h1M105.5 6.5h1M179 118.5h1M102 90h1M25 46.5h1M69.5 155.5h1M182 173.5h1M10 155.5h1M50 77.5h1M189.5 10.5h1M161 163h1M144.5 58.5h1M183 133.5h1M111.5 171.5h1M89 0.5h1M167 73h1M149.5 155.5h1M62 174.5h1M81 53h1M88 22.5h1M190 100h1M157 56.5h1M23 89h1M108 113h1M177.5 128.5h1M160 160.5h1M13.5 173.5h1M109.5 172.5h1M32 125h1M11 179h1M143 66.5h1M41 163.5h1M66 63h1M43 91.5h1M23.5 51.5h1M35.5 34.5h1M124 171.5h1M180 61.5h1M177 113.5h1M164.5 89.5h1M34 181.5h1M144 61.5h1M30 140.5h1M43.5 173.5h1M153 118h1M103 52.5h1M74 3.5h1M52 11.5h1M71 77.5h1M179 79.5h1M28 41.5h1M119 145.5h1M43 142.5h1M2 119h1M124.5 21.5h1M84.5 189.5h1M27 165.5h1M111 125.5h1M139 82.5h1M23 164.5h1M157.5 187.5h1M64 167.5h1M35 7.5h1M101 37.5h1M47.5 163.5h1M174 43.5h1M184.5 79.5h1M83 97.5h1M91 81.5h1M34 141h1M64 61.5h1M27 145h1M180 103h1M55 126.5h1M187 40h1M154.5 148.5h1M36 176.5h1M35.5 113.5h1M102 22h1M112 122.5h1M185 95.5h1M156 130.5h1M72.5 18.5h1M131 181.5h1M86 16.5h1M170 45h1M42 96.5h1M113.5 144.5h1M145 50.5h1M138.5 82.5h1M109 136h1M39 102h1M158 20h1M15.5 185.5h1M155 168.5h1M146 107h1M123.5 168.5h1M76.5 87.5h1M162 7h1M56.5 173.5h1M176 21.5h1M148.5 95.5h1M106.5 92.5h1M144 112.5h1M29 58.5h1M51.5 140.5h1M56.5 64.5h1M48.5 135.5h1M181 125.5h1M117.5 57.5h1M178.5 28.5h1M150 145.5h1M104 173.5h1M112 34h1M140.5 129.5h1M29 160h1M184 131.5h1M175.5 100.5h1M49 144.5h1M23 35.5h1M158 14.5h1M12 95.5h1M179 152h1M117 76.5h1M34 109h1M22 159h1M51 144.5h1M186 90.5h1M190 87h1M188 174.5h1M65 31.5h1M131.5 188.5h1M91 184.5h1M154 90.5h1M140 83h1M28 8h1M172 62.5h1M49 177.5h1M148 112.5h1M5 124.5h1M66 47.5h1M74.5 175.5h1M36 150h1M137 176h1M68 113.5h1M87 38.5h1M123 8h1M9 19.5h1M165.5 173.5h1M121.5 40.5h1M114 100.5h1M156 132.5h1M84 135.5h1M33.5 150.5h1M54 43h1M186 119.5h1M119 99h1M80 1.5h1M123 85.5h1M63 117h1M155.5 11.5h1M186 171.5h1M98 69.5h1M67.5 91.5h1M135 149h1M178 8h1M24 51h1M162.5 146.5h1M92 72h1M60.5 36.5h1M77.5 87.5h1M130 162.5h1M140 183.5h1M15 180.5h1M82.5 123.5h1M62 60h1M38 34.5h1M171 116.5h1M101 145h1M43 150.5h1M77 184.5h1M186.5 146.5h1M87 18h1M149.5 20.5h1M77 148.5h1M119 91h1M176.5 109.5h1M17 124.5h1M44 70h1M139 5h1M160 68.5h1M5 55.5h1M114 51h1M72.5 128.5h1M50.5 61.5h1M33 153.5h1M18 147.5h1M34 1.5h1M137 164h1M163 82h1M54 82.5h1M6 166.5h1M156 173h1M44 14h1M11.5 22.5h1M85 126h1M102 65h1M3 6h1M144 167h1M14.5 106.5h1M185 84.5h1M4 39.5h1M135 23.5h1M92 108.5h1M174 150h1M39 168h1M147 84.5h1M158 66h1M122 8h1M79 166h1M180.5 116.5h1M92.5 133.5h1M70 33.5h1M142 121.5h1M92 38h1M58 102h1M23.5 7.5h1M31.5 15.5h1M52 142h1M66 155.5h1M38 45h1M41 135.5h1M181 62.5h1M127.5 54.5h1M88 99.5h1M82 6.5h1M187 3.5h1M165.5 102.5h1M89 15.5h1M96 104h1M96.5 168.5h1M57 7.5h1M67 181.5h1M59 90.5h1M108 164.5h1M127 55h1M40 122h1M68 34h1M72 22.5h1M124 63.5h1M174.5 156.5h1M115.5 54.5h1M53 188.5h1M112 46.5h1M35.5 76.5h1M28 38h1M2 34h1M38.5 128.5h1M24 43.5h1M101 23.5h1M164.5 170.5h1M85.5 8.5h1M51.5 160.5h1M9.5 34.5h1M59 147.5h1M26 186.5h1M81 16h1M30 124h1M134 109.5h1M57.5 175.5h1M162.5 188.5h1M28 135.5h1M127 19.5h1M55.5 57.5h1M69 180.5h1M67 68.5h1M11.5 50.5h1M104 142h1M68 2.5h1M10 167.5h1M72 140.5h1M105.5 190.5h1M102 108.5h1M107 98h1M99 98h1M36 162.5h1M155 128h1M65.5 177.5h1M96 61h1M169 29.5h1M158 8h1M12.5 103.5h1M83.5 175.5h1M140 171.5h1M147 0.5h1M165.5 120.5h1M151 139h1M60 161h1M96.5 90.5h1M100 134.5h1M168 173h1M18 160h1M170 57h1M67 67h1M121 184.5h1M150.5 122.5h1M36 16h1M135.5 93.5h1M135 43h1M61 172.5h1M169 117.5h1M166 11.5h1M92 109.5h1M39 179.5h1M26 93.5h1M133 133.5h1M169 22.5h1M74.5 114.5h1M115 162.5h1M44 132.5h1M174 33.5h1M133 169.5h1M94 133.5h1M97 64.5h1M51.5 0.5h1M14 151.5h1M183 139.5h1M82 65.5h1M112.5 23.5h1M126 22.5h1M108.5 74.5h1M95.5 11.5h1M96 93.5h1M75 104.5h1M155 65.5h1M98 148.5h1M158 49h1M182 148.5h1M170 52.5h1M18 20h1M97.5 100.5h1M127 164h1M6.5 27.5h1M118.5 118.5h1M111 106h1M45 16.5h1M125.5 34.5h1M2 171.5h1M51.5 102.5h1M174.5 75.5h1M99 117.5h1M56.5 19.5h1M3 26.5h1M55 144.5h1M174.5 51.5h1M123.5 14.5h1M106 149.5h1M104 12h1M37 82.5h1M132 1.5h1M137.5 70.5h1M22 80.5h1M169.5 76.5h1M130.5 107.5h1M78 77.5h1M97 111h1M65 78.5h1M13.5 53.5h1M95.5 118.5h1M181 149.5h1M87 51.5h1M180.5 142.5h1M186 80.5h1M17 104h1M82 9.5h1M112 74.5h1M53.5 151.5h1M103 186.5h1M52 14.5h1M163 31.5h1M18 152.5h1M3.5 184.5h1M42 127.5h1M184.5 172.5h1M54 136h1M37 183.5h1M25 119.5h1M23 12.5h1M168.5 65.5h1M113 175.5h1M14 178.5h1M40 114.5h1M59 149h1M180.5 143.5h1M79 66.5h1M54 38h1M170 59.5h1M8 83.5h1M164 74.5h1M139 177.5h1M118.5 38.5h1M110.5 85.5h1M29 9h1M31 168h1M167.5 134.5h1M74 125.5h1M127 23.5h1M71.5 77.5h1M138 22.5h1M120 69h1M58 148h1M8.5 148.5h1M0 88.5h1M38 168.5h1M44 85.5h1M123 63.5h1M93 45.5h1M76.5 17.5h1M116.5 24.5h1M28.5 41.5h1M118 9.5h1M131 148.5h1M165 178.5h1M147 90.5h1M186.5 169.5h1M92.5 43.5h1M23 84.5h1M165 122.5h1M66 24.5h1M61 29.5h1M69.5 137.5h1M83 119.5h1M145 137.5h1M65 93h1M72.5 103.5h1M32.5 61.5h1M136 128.5h1M24 3.5h1M13 125h1M179 146.5h1M190 58.5h1M43 39h1M7 108.5h1M132 28.5h1M30.5 21.5h1M55 59.5h1M131 181h1M62.5 18.5h1M25 10.5h1M177 44h1M87 21h1M118 151h1M2 81h1M105 104.5h1M62.5 37.5h1M173 42.5h1M88 35.5h1M56 175.5h1M17 0h1M122 9.5h1M84 17h1M162 16.5h1M160 12h1M105.5 23.5h1M89 149.5h1M126 172h1M127 34.5h1M177 77h1M190 119h1M174 151.5h1M98 163h1M131.5 76.5h1M151.5 136.5h1M161 29.5h1M64 59.5h1M150.5 117.5h1M126 147h1M175 181.5h1M169 101h1M174 87h1M103 22.5h1M172.5 86.5h1M109 78.5h1M125 154.5h1M28 121.5h1M154 76.5h1M85 139.5h1M90 100h1M158 8.5h1M22 69.5h1M113.5 104.5h1M61 30.5h1M160 10.5h1M47 99.5h1M38 92.5h1M89 156h1M100 78.5h1M129 155.5h1M41.5 100.5h1M0 44.5h1M62.5 116.5h1M168.5 64.5h1M173 25h1M188.5 131.5h1M34.5 64.5h1M19.5 131.5h1" stroke="#fff" stroke-opacity="0.36" stroke-width="1" fill="none"/></pattern><mask id="dm1" maskUnits="userSpaceOnUse" x="0" y="0" width="1767" height="1211"><g fill="#fff" filter="url(#bl)"><polygon points="-9,260 260,286 364,252 468,282 573,286 694,304 868,325 980,347 1084,382 1323,460 1323,781 1475,868 1614,876 1622,963 1518,1015 1336,1024 1327,1076 1475,1123 1778,1195 1778,1232 1353,1232 1195,1162 1126,1155 1022,1137 884,1087 781,1066 694,1044 564,1009 434,979 347,949 217,905 108,875 -9,840" /><polygon points="1475,642 1778,659 1778,868 1562,850" /><polygon points="54,655 261,677 251,787 150,799 71,744" fill="#000" fill-opacity="1"/></g></mask><pattern id="dp2" width="167" height="167" patternUnits="userSpaceOnUse"><path d="M113 68h1M92.5 78.5h1M161 96h1M15 127.5h1M4 14h1M30 142.5h1M79 131h1M155 117.5h1M83 123.5h1M69 36.5h1M147 130.5h1M100.5 44.5h1M164.5 71.5h1M61 74h1M6.5 107.5h1M104 166.5h1M163 97.5h1M92 71.5h1M147 126h1M136 88h1M51 132h1M15 41.5h1M133.5 43.5h1M13 150.5h1M98 92h1M47 69.5h1M121.5 50.5h1M112 103.5h1M66 92.5h1M98 120.5h1M52 159.5h1M104 163.5h1M80 11.5h1M137.5 120.5h1M105 19.5h1M92.5 101.5h1M73 161.5h1M115 3.5h1M145 78.5h1M92 67h1M17 140.5h1M154 105h1M28 78.5h1M45.5 162.5h1M30 103.5h1M87 102.5h1M86 89h1M36.5 136.5h1M105 73.5h1M86 16h1M17 128.5h1M146.5 60.5h1M103.5 54.5h1M70 33.5h1M61 128.5h1M72.5 8.5h1M166 97h1M33.5 165.5h1M98 156h1M17.5 154.5h1M130.5 69.5h1M57 79.5h1M145 20.5h1M132 18.5h1M83 55.5h1M161 35.5h1M128 15h1M151.5 142.5h1M8.5 10.5h1M119 28.5h1M75 161h1M84.5 135.5h1M55 142h1M53 72h1M147.5 137.5h1M57 44.5h1M129 68.5h1M16 161.5h1M22 149.5h1M99 131h1M104.5 57.5h1M14 95h1M84 64.5h1M122 147.5h1M116 158.5h1M87 157.5h1M103 42.5h1M49.5 19.5h1M132 4.5h1M50 50h1M51 143h1M75 5h1M156 4.5h1M52 106.5h1M164.5 161.5h1M142.5 90.5h1M144 161.5h1M90 78.5h1M44 90.5h1M7 116h1M87 27h1M93 120.5h1M21 86h1M121 32h1M135 144.5h1M99 53.5h1M5.5 49.5h1M132 111h1M98 41h1M111 34.5h1M28.5 54.5h1M136 97.5h1M22 118h1M52.5 146.5h1M18 82.5h1M143 118.5h1M163 52.5h1M52 90.5h1M26.5 25.5h1M32 51.5h1M146 149h1M112.5 17.5h1M13 120.5h1M166.5 61.5h1M120.5 120.5h1M30.5 127.5h1M16 61h1M58 1.5h1M57.5 162.5h1M165 9.5h1M51 0.5h1M12 102.5h1M56 11h1M163 147h1M67 10.5h1M4 122h1M26 24.5h1M135.5 41.5h1M82.5 27.5h1M97 0.5h1M7.5 142.5h1M21.5 128.5h1M156 152h1M137.5 19.5h1M139 157.5h1M101.5 1.5h1M53 6.5h1M129 117.5h1M166.5 53.5h1M28 156h1M139 133.5h1M24.5 22.5h1M25 22.5h1M77 79h1M37.5 126.5h1M85 49.5h1M19 11.5h1M153.5 54.5h1M116 104h1M147 166.5h1M20 5h1M7 34h1M110 14.5h1M75 113.5h1M34 64h1M89 7.5h1M24 41.5h1M121 159h1M83 70h1M3.5 105.5h1M87.5 59.5h1M91 84.5h1M61 87h1M136 41.5h1M80.5 108.5h1M93.5 16.5h1M117 41.5h1M13.5 166.5h1M62 104h1M132 161.5h1M54 55.5h1M3 66.5h1M30.5 45.5h1M157.5 42.5h1M72 100.5h1M65 7.5h1M53 164.5h1M164 151.5h1M17 153.5h1M100 77.5h1M17 137.5h1M92 19.5h1M28.5 126.5h1M130 70h1M115 45h1M65 77.5h1M44 113h1M24 117.5h1M52 7.5h1M57 27h1M89 85.5h1M2 48.5h1M22 40h1M150.5 79.5h1M46 11.5h1M24 14.5h1M166.5 22.5h1M57 15.5h1M3 68h1M33 90.5h1M45 35.5h1M64 94.5h1M133 28h1M42 73h1M7.5 57.5h1M56 98h1M61 164h1M67 1.5h1M96 94.5h1M7 120.5h1M29 28.5h1M125 23.5h1M124 122h1M59 109.5h1M30 48.5h1M92 113.5h1M86 142.5h1M130 56.5h1M55.5 144.5h1M96 28.5h1M110 134.5h1M133.5 43.5h1M80 54.5h1M122 67.5h1M117 33.5h1M115 161.5h1M52.5 71.5h1M92 17.5h1M121 123.5h1M130.5 2.5h1M131.5 6.5h1M8.5 137.5h1M127 154.5h1M93 37.5h1M82 10h1M94 166.5h1M58.5 4.5h1M20 115.5h1M9 73.5h1M35 49.5h1M80 149.5h1M16 102.5h1M42 3.5h1M123 59.5h1M95 130h1M125.5 54.5h1M55 49h1M51 79h1M116 69.5h1M82 8.5h1M87.5 105.5h1M5 145.5h1M41 61h1M0.5 39.5h1M66 155.5h1M143.5 140.5h1M35 66.5h1M30 70h1M38 35h1M34 148.5h1M14 42.5h1M42.5 20.5h1M115 104.5h1M145 57h1M68 104.5h1M111 26h1M74 18.5h1M44 35.5h1M135 96h1M131 149.5h1M62.5 127.5h1M150 94h1M142 49.5h1M151.5 64.5h1M46.5 65.5h1M105 93h1M65.5 18.5h1M14.5 159.5h1M54 83h1M2 113.5h1M165 46.5h1M83 59h1M22.5 53.5h1M102 34h1M59.5 94.5h1M92.5 97.5h1M93 32h1M163 55h1M28.5 9.5h1M103 157.5h1M19.5 120.5h1M85.5 147.5h1M88 111.5h1M123.5 4.5h1M41 100.5h1M161 74h1M164.5 52.5h1M151 50.5h1M77 166.5h1M16 153.5h1M150 11.5h1M3.5 152.5h1M143 69.5h1M1 44.5h1M63 1.5h1M44 67h1M60 4.5h1M21 22h1M38 120.5h1M133 89.5h1M106 122h1M85 14h1M67 41.5h1M16 159.5h1M67 33h1M84.5 87.5h1M36.5 48.5h1M143 13h1M108 98.5h1M4 58.5h1M18 120.5h1M150 38.5h1M115 119h1M59 159.5h1M120 144.5h1M3 49h1M55 27h1M117 61h1M128.5 108.5h1M84 14.5h1M6.5 56.5h1M54.5 163.5h1M116 157.5h1M47 52h1M66 33.5h1M57 118h1M79 101.5h1M78 14h1M80 22.5h1M83 131.5h1M44 161h1M118 7.5h1M30.5 129.5h1M92.5 121.5h1M19.5 27.5h1M159 99.5h1M17 64h1M131 56.5h1M122 107h1M95 136.5h1M80 158.5h1M116.5 22.5h1M71 34.5h1M142 33.5h1M158 8.5h1M17 87.5h1M21 37.5h1M24 13.5h1M34 135.5h1M18 80.5h1M136 154h1M43 61.5h1M109 86.5h1M62 117h1M29 23.5h1M98 121.5h1M47 154h1M119.5 100.5h1M33 49h1M125 27h1M131 86h1M7.5 65.5h1M38 157.5h1M44.5 87.5h1M107 14h1M59 147.5h1M65 155.5h1M9 83.5h1M81 68h1M77.5 95.5h1M100 96.5h1M58 3h1M105 162h1M145 62h1M164 13h1M43 38h1M64.5 129.5h1M97 111h1M34.5 61.5h1M86 14.5h1M44 81h1M35.5 138.5h1M12 140h1M86 120h1M54 87.5h1M16 25.5h1M6 6.5h1M18 157.5h1M13 50h1M163 102.5h1M122 96.5h1M161 147.5h1M88.5 79.5h1M90 146h1M153 150h1M132 17.5h1M106 3h1M58 53.5h1M138 92h1M31 145.5h1M151 145.5h1M33 109h1M47 134.5h1M131 91.5h1M154 14.5h1M110 40.5h1M19 106.5h1M77.5 84.5h1M47.5 125.5h1M128.5 2.5h1M36 154h1M143 42.5h1M166 141h1M28 145.5h1M14.5 53.5h1M128.5 55.5h1M39 143.5h1M39 161.5h1M7 108.5h1M66 154.5h1M107.5 55.5h1M119 13.5h1M1 87h1M42.5 60.5h1M59 132h1M59 154.5h1M51.5 149.5h1M28.5 118.5h1M55 69h1M108 130.5h1M0 113h1M17.5 143.5h1M36 81.5h1M163 55h1M86 104h1M62 50.5h1M104.5 91.5h1M77 79.5h1M55 114.5h1M49 150.5h1M129 75.5h1M122 112h1M151 124.5h1M70.5 120.5h1M120.5 151.5h1M128 43.5h1M90 98h1M103 25.5h1M108 85.5h1M100 165.5h1M146 140.5h1M122.5 90.5h1M102.5 110.5h1M40.5 141.5h1M1.5 37.5h1M102.5 83.5h1M56 87h1M40.5 140.5h1M166 46.5h1M34.5 6.5h1M122 112.5h1M93 133h1M89.5 140.5h1M83 163h1M29 85.5h1M156.5 155.5h1M66 4.5h1M99 17.5h1M160 137.5h1M85 73h1M41 96.5h1M49 53.5h1M35 37.5h1M56 14.5h1M31 27h1M141 141h1M22 38.5h1M49.5 10.5h1M98 108.5h1M45 152.5h1M77 9.5h1M41 31.5h1M83 161.5h1M118 41.5h1M50 155.5h1M50 92.5h1M111 83.5h1M64 114.5h1M6 44.5h1M38.5 89.5h1M15.5 114.5h1M8.5 112.5h1M147 3.5h1M5.5 153.5h1M101 130h1M12.5 143.5h1M127.5 44.5h1M40 165.5h1M131 1h1M92.5 106.5h1M48 145.5h1M104 85h1M148 157.5h1M96 48.5h1M54 157h1M148 83.5h1M143 67h1M86.5 40.5h1M139 125h1M21 125h1M11 38.5h1M21 146.5h1M75.5 150.5h1M1.5 22.5h1M34 26.5h1M29 155h1M113 65.5h1M114 166.5h1M9 126h1M76 54.5h1M66 71h1M52 130h1M134 109h1M165 71.5h1M81.5 102.5h1M121 30.5h1M37 75.5h1M138 33.5h1M96 63.5h1M129 8.5h1M6 22.5h1M8 55.5h1M120.5 20.5h1M87 155.5h1M34 165h1M30 165.5h1M128 66.5h1M41 57.5h1M57 64.5h1M15 56.5h1M156 77h1M16 161.5h1M159 113.5h1M106 120h1M15 98.5h1M118 123h1M50 66.5h1M30 141.5h1M42 35h1M120 126h1M144 94.5h1M127 150.5h1M87 24.5h1M28 35.5h1M72 84.5h1M140 45.5h1M7 81.5h1M31 72.5h1M94 144h1M92 123h1M162.5 50.5h1M44 92.5h1M48 76.5h1M62 150.5h1M2.5 53.5h1M52.5 131.5h1M30.5 60.5h1M73 25h1M148 0.5h1M109 22h1M80.5 145.5h1M131 106.5h1M150 136h1M3 146.5h1M45 57.5h1M31.5 68.5h1M131.5 82.5h1M98 103h1M6.5 17.5h1M108 28h1M69 131.5h1M93 5h1M13.5 109.5h1M98 41.5h1M93 141.5h1M94.5 65.5h1M41 40.5h1M28 150h1M31 40.5h1M145 147.5h1M127 105.5h1M3 14.5h1M35 60h1" stroke="#fff" stroke-opacity="0.42" stroke-width="1" fill="none"/></pattern><mask id="dm2" maskUnits="userSpaceOnUse" x="0" y="0" width="1767" height="1211"><g fill="#fff" filter="url(#bl)"><polygon points="468,364 694,390 781,408 763,629 607,646 486,612" /><polygon points="868,486 1323,521 1323,659 1128,677 868,607" /><polygon points="1119,1071 1258,1058 1475,1119 1778,1190 1778,1232 1353,1232 1215,1158" /><polygon points="486,815 781,815 954,868 1301,937 1308,1106 1197,1123 1041,1089 868,1037 694,985 538,933 468,868" /></g></mask><pattern id="dp3" width="157" height="157" patternUnits="userSpaceOnUse"><path d="M1 61h1M91 61h1M122 150.5h1M85 121h1M56 12.5h1M128 61h1M154 46.5h1M66 21h1M22.5 86.5h1M108 78.5h1M114.5 62.5h1M44 78.5h1M27 131.5h1M42 150.5h1M31 40h1M14.5 72.5h1M85 12.5h1M48 130.5h1M58 53.5h1M116 23.5h1M119.5 0.5h1M101 25.5h1M22.5 137.5h1M93 85.5h1M84 56.5h1M106 110.5h1M21 18.5h1M49 67h1M25.5 97.5h1M125 64.5h1M126 144h1M74 16h1M121 32.5h1M123 111.5h1M6.5 47.5h1M11 19.5h1M82 61.5h1M149 68.5h1M93.5 104.5h1M70 41h1M112 45.5h1M23.5 139.5h1M60.5 39.5h1M66 29.5h1M97.5 23.5h1M0 39.5h1M90 21h1M151 81h1M143 150.5h1M144 136.5h1M132 52.5h1M86 32.5h1M130.5 143.5h1M56.5 71.5h1M32 128.5h1M110 153.5h1M136 75.5h1M114.5 95.5h1M63.5 130.5h1M139 74.5h1M8 65.5h1M54 115h1M78 116.5h1M92 53h1M110.5 65.5h1M4.5 69.5h1M87 92.5h1M111.5 155.5h1M78 58.5h1M120.5 27.5h1M47 124.5h1M50 69h1M11 33h1M107 112.5h1M39 80.5h1M46 40.5h1M15 62.5h1M44 13.5h1M49 38h1M95 130.5h1M69.5 112.5h1M152 65h1M100 99.5h1M2 95.5h1M82 85.5h1M8 48.5h1M148.5 146.5h1M75 25.5h1M61 59.5h1M147 82.5h1M146.5 83.5h1M154.5 23.5h1M31 60.5h1M79 106h1M3 58.5h1M102.5 61.5h1M108 62.5h1M61.5 96.5h1M133 140h1M68 120h1M122 119h1M13 97.5h1M153 44h1M120 140h1M40 26h1M112 23.5h1M54 0.5h1M23 47.5h1M110.5 105.5h1M74.5 89.5h1M43.5 25.5h1M126 29.5h1M138 53.5h1M99 91h1M154.5 143.5h1M72.5 21.5h1M94 29.5h1M136 83.5h1M29 86.5h1M5 92.5h1M0 41h1M50 136.5h1M103 66.5h1M117 42h1M95 14.5h1M56.5 82.5h1M10.5 127.5h1M50 138.5h1M44 47.5h1M128.5 34.5h1M43 130h1M74.5 140.5h1M123 28.5h1M79.5 77.5h1M139 146h1M113.5 81.5h1M93 126.5h1M42.5 15.5h1M27.5 20.5h1M8 151h1M131 37.5h1M17 45h1M133 5.5h1M58 112.5h1M116 136.5h1M46 51.5h1M86 154.5h1M86 95.5h1M18.5 5.5h1M30 12.5h1M74 71.5h1M22 52h1M112 154h1M71 141h1M15 73.5h1M23 141.5h1M153 36.5h1M138 118.5h1M116 50h1M56 71.5h1M130 63.5h1M78 101.5h1M24 55.5h1M94.5 118.5h1M128 124.5h1M91 102.5h1M88.5 127.5h1M103.5 40.5h1M39 108h1M120 129.5h1M50 63.5h1M24 67.5h1M31 123.5h1M151 148h1M80 111h1M77 65h1M35.5 141.5h1M144.5 32.5h1M43.5 74.5h1M24 111h1M111 111.5h1M25 39.5h1M130 38.5h1M111 99.5h1M25.5 46.5h1M48 41.5h1M137 49.5h1M128 124h1M4 51.5h1M145.5 26.5h1M55.5 78.5h1M152 58h1M44 88.5h1M122 16h1M40 78.5h1M140 25.5h1M146 12.5h1M52 21.5h1M22 67.5h1M64 0.5h1M118 57.5h1M105 29h1M2 29.5h1M27.5 115.5h1M5 57.5h1M9 80h1M105 136.5h1M79 106.5h1M131.5 112.5h1M149 135h1M121 70.5h1M104 104.5h1M12 143.5h1M147 62h1M130 30.5h1M94 110h1M3.5 66.5h1M40 49.5h1M33 76.5h1M52.5 36.5h1M0 75.5h1M113.5 83.5h1M59 86.5h1M12 20.5h1M75 78h1M41 29.5h1M17 76.5h1M94.5 45.5h1M128 106h1M30 133.5h1M124 113.5h1M111 58.5h1M51 82.5h1M96.5 100.5h1M142 71h1M150.5 10.5h1M67 51.5h1M99 156.5h1M39.5 154.5h1M108 38h1M60.5 31.5h1M106 20.5h1M113 77h1M112 16.5h1M27 103.5h1M4 96.5h1M121 22.5h1M38 128.5h1M20.5 23.5h1M154 132.5h1M74 106.5h1M150 61.5h1M12.5 144.5h1M24 139h1M104.5 78.5h1M28 25.5h1M146.5 55.5h1M71 127.5h1M147 111.5h1M116 149.5h1M140.5 70.5h1M130 21.5h1M132 126.5h1M94 29.5h1M128.5 74.5h1M95 63.5h1M131.5 70.5h1M153 61h1M119 65h1M156 52.5h1M140 32h1M142 3.5h1M44 92.5h1M49 102.5h1M24.5 76.5h1M26 47.5h1M135 107.5h1M48 100.5h1M108 50.5h1M143 73.5h1M145.5 102.5h1M48 99h1M131 86h1M119 9h1M61.5 19.5h1M44 92h1M68 117.5h1M79 153.5h1M47.5 139.5h1M43 22.5h1M145 135.5h1M86.5 26.5h1M36 141.5h1M84 73.5h1M68 52.5h1M3 111.5h1M119 3.5h1M96 0.5h1M58 103.5h1M6 151.5h1M107.5 148.5h1M23 63.5h1M54 14.5h1M8 31h1M151.5 5.5h1M150.5 124.5h1M102 39h1M118 68.5h1M41 48.5h1M146.5 85.5h1M49.5 74.5h1M83 12h1M95 129.5h1M85.5 65.5h1M66 70h1M134 114.5h1M119 145.5h1M28 44h1M63 32.5h1M53.5 126.5h1M48 85h1M114 123h1M44 14.5h1M19 17.5h1M4.5 123.5h1M129 22.5h1M35.5 12.5h1M60 86.5h1M125 106.5h1M129 2.5h1M155 110.5h1M85 3.5h1M14 108h1M125 126h1M25 149.5h1M80 3h1M66.5 104.5h1M16.5 127.5h1M96 26.5h1M103 26.5h1M110.5 129.5h1M29 153.5h1M77.5 11.5h1M107 152.5h1M0 121h1M63.5 89.5h1M96 26.5h1M154 13.5h1M139 60h1M145 102h1M144 7.5h1M141 148h1M122.5 77.5h1M136.5 11.5h1M3 37.5h1M15 62.5h1M42 67.5h1M97.5 57.5h1M135 155h1M150 36h1M25 63.5h1M98 88.5h1M114 44h1M73 94.5h1M69 126.5h1M31 41h1M0 101h1M16 83.5h1M39 97.5h1M77.5 138.5h1M148 31h1M117 129h1M124 30.5h1M39 78.5h1M0 13h1M66 24h1M46.5 112.5h1M83 33h1M80.5 100.5h1M145 114.5h1M64.5 154.5h1M34 95h1M62.5 5.5h1M31 51h1M1 78.5h1M72 119h1M138 40.5h1M23 89.5h1M46 41.5h1M1 23h1M102 21.5h1M116 13h1M104 115.5h1M101 87.5h1M150.5 111.5h1M116 136.5h1M32 98.5h1M107 72.5h1M30 54.5h1M113 72.5h1M123 77.5h1M22 30.5h1M145 113h1M65 126.5h1M26.5 59.5h1M40 130.5h1M1 123h1M87.5 96.5h1M142 21h1M39 78.5h1M32 73.5h1M119 73h1M150.5 122.5h1M35 44h1M128 4.5h1M6 70h1M127 95h1M54 109h1M119.5 105.5h1M23.5 22.5h1M56 79.5h1M106.5 95.5h1M116 110.5h1M27 57.5h1M132.5 29.5h1M114.5 105.5h1M146.5 107.5h1M61.5 151.5h1M109 84.5h1M80.5 126.5h1M9.5 127.5h1M52 13h1M14 88.5h1M20 55.5h1M76 113h1M104 136.5h1M16.5 44.5h1M23 97.5h1M135 77.5h1M36 141.5h1M109 57.5h1M20 124.5h1M103 71.5h1M59 68.5h1M46 40h1M116 88h1M34.5 152.5h1M100 143.5h1M77.5 92.5h1M136.5 60.5h1M25 142.5h1M59 81.5h1M113 110h1M95 77.5h1M146 56.5h1M89 143h1M146 91h1M96 21h1M2 147h1M7.5 150.5h1M99 80.5h1M111.5 140.5h1M53 125h1M120 55.5h1M0 66.5h1M35 113h1M52.5 72.5h1M153.5 47.5h1M50 79.5h1M5 24.5h1M49 147.5h1M105 73.5h1M150 37h1M77 64h1M105.5 69.5h1M116 72h1M143 87.5h1M3 56.5h1M82 50h1M67 87.5h1M79 72.5h1M69 35.5h1M29 94.5h1M130 46.5h1M22 148h1M127 78.5h1M132 10.5h1M67 143.5h1M127 84h1M62.5 66.5h1M25 60h1M63 8.5h1M134 60.5h1M126 89h1M95 14.5h1M59.5 108.5h1M121 48.5h1M87 10.5h1M89 30.5h1M131 135h1M24.5 132.5h1M96 32.5h1M149 85.5h1M122 86h1M53 88.5h1M125 125.5h1M139 128h1M30 117h1M57 153h1M86 38.5h1M143 81.5h1M20 105.5h1M138 11.5h1M98 118.5h1M87 77h1M6 48.5h1M20 52h1M148 108.5h1M16.5 21.5h1M11 155.5h1M134 124.5h1M152 64.5h1M7 105h1M69 135.5h1M34 118h1M53 62.5h1M149 69.5h1M105 92h1M0 111.5h1M14 129h1M26 127h1M10.5 103.5h1M126 125.5h1M131 103h1M33 128h1M107 71.5h1M61 29.5h1M93 145.5h1M130.5 136.5h1M132 55.5h1M23 84.5h1M58 31.5h1M46 8.5h1M122 123h1M54 104.5h1M52.5 36.5h1M152 118h1M42 10.5h1M53 85h1M30 53.5h1M30.5 85.5h1M132.5 148.5h1M12.5 68.5h1M126 147h1M146 13.5h1M109 107.5h1M61.5 143.5h1M132 100.5h1M66 95.5h1M155 23.5h1M82 29.5h1M114.5 44.5h1M93 9.5h1M3 38h1M73.5 119.5h1M14 60h1M61 114.5h1M120 113.5h1M59 47h1M93 29.5h1M117 37h1M108 55.5h1M113 148.5h1M33.5 25.5h1M2 107.5h1M128.5 31.5h1M112 87.5h1M83 23.5h1M46 132.5h1M16 83h1M4 28.5h1M44 128.5h1M8 114.5h1M143 52.5h1M78.5 137.5h1M131 68.5h1M149 70.5h1M39 75.5h1M112 54h1M42 150.5h1M33.5 54.5h1M44 101h1M78 103h1M101 39h1M12 108h1M64 45h1M134.5 85.5h1M97 69h1M32 92h1M117.5 131.5h1M52 35.5h1M86 139.5h1M110 47.5h1M66 23.5h1M75 140.5h1M153 63h1M71.5 88.5h1M13.5 144.5h1M29 146.5h1M42 144.5h1M135 20h1M149 110.5h1M125 139h1M87 116.5h1M78 65h1M30.5 101.5h1M91 141.5h1M25 50h1M154 82.5h1M69 156.5h1M11.5 21.5h1M89 147.5h1M111 86h1M63 42h1M132 130.5h1M147.5 28.5h1M7 61.5h1M131 121.5h1M107 148.5h1M10 95h1M4 81h1M6 154.5h1M47 32.5h1M27.5 129.5h1M104.5 39.5h1M75 81.5h1M114 42.5h1M46 32.5h1M34 141.5h1M61 103.5h1M22 135.5h1M116 24h1M137 141h1M146.5 30.5h1M156 24.5h1M84 82h1M4 137.5h1M46 107h1M66 81.5h1M70 31.5h1M87 39h1M116.5 117.5h1M11 86.5h1M131.5 25.5h1M14.5 90.5h1M135.5 103.5h1M91.5 141.5h1M92 115.5h1M18.5 78.5h1M49 110.5h1M135.5 72.5h1M138 46.5h1M142 137.5h1M63.5 26.5h1M113 0h1M13 57.5h1M60 39.5h1M38 40h1M147 101h1M71 1h1M59 80.5h1M124 8.5h1M32 115.5h1M153 135.5h1M1.5 125.5h1M140 38.5h1M122 101.5h1M7 126.5h1M31 120.5h1M145 102.5h1M66.5 114.5h1M113 137h1M143.5 113.5h1M135.5 154.5h1M124 55h1M19 105.5h1M88.5 32.5h1M53 61.5h1M56 87.5h1M70 73.5h1M135 107.5h1M143.5 99.5h1M76.5 146.5h1M43 120.5h1M73 102.5h1M119 82.5h1M129 7h1M125 44.5h1M94 156h1M28 84.5h1M90 89.5h1M28 86.5h1M84 78.5h1M5 150h1M16.5 118.5h1M80 56h1M26 0.5h1M104 136.5h1M84.5 64.5h1M19 136.5h1M143 92.5h1M142 97h1M65 4.5h1M6 75.5h1M94.5 12.5h1M60.5 141.5h1M117.5 24.5h1M86.5 18.5h1M65 89.5h1M19 117.5h1M60 45h1M136 70h1M87.5 121.5h1M64.5 104.5h1M146 50.5h1M6.5 138.5h1M147 14.5h1M112 87.5h1M105 151.5h1M49.5 0.5h1M139 33.5h1M113 151h1M44 1h1M6 153h1M81 4.5h1M67 60.5h1M27 115.5h1M19 58.5h1M57 25.5h1M28 83.5h1M121 41h1M120 40.5h1M114.5 47.5h1M24.5 115.5h1M126 26.5h1M61 94h1M21.5 156.5h1M105 120h1M96.5 35.5h1M108 127.5h1M118.5 73.5h1M153 142.5h1M95.5 57.5h1M60 63.5h1M100 128h1M111.5 137.5h1M36 52.5h1M84 16.5h1M30 121.5h1M118 119.5h1M18 148.5h1M110 48.5h1M134 32.5h1M88 105.5h1M53.5 91.5h1M49 138h1M51 1h1M82 128.5h1M76.5 3.5h1M27 6h1M99 134h1M112 91h1M4 115.5h1M9 40h1M118.5 80.5h1M136 119.5h1M87 89.5h1M18 113h1M1 134.5h1M28 122h1M23 30.5h1M99 23h1M136 132h1M101 56.5h1M83 155.5h1M132.5 106.5h1M145 148.5h1M135 2.5h1M59 57.5h1M87 100h1M15 88.5h1M32 128h1M127.5 50.5h1M133 1h1M86 105.5h1M115 59.5h1M86.5 99.5h1M104 145.5h1M23 24.5h1M138 31.5h1M22 8.5h1M32 135.5h1M144 107.5h1M68 88.5h1M86 117h1M44 114.5h1M130 119.5h1M77.5 55.5h1M123 77h1M147.5 148.5h1M141.5 93.5h1M138 32.5h1M56 33h1M41 126.5h1M138 66.5h1M52 123.5h1M66 62h1M34 106.5h1M83 82.5h1M129.5 79.5h1M126.5 0.5h1M20 120.5h1M52 123h1M31 128.5h1M30 1.5h1M138.5 48.5h1M96 135.5h1M4 50h1M76 19h1M29 43.5h1M29.5 51.5h1M97 71h1M66.5 103.5h1M106 59.5h1M105 25.5h1M135 47.5h1M71.5 38.5h1M36 134h1M53.5 126.5h1M43 52.5h1M37 100.5h1M89.5 81.5h1M22 56.5h1M135 4.5h1M24.5 147.5h1M153 20.5h1M94 61h1M107 135h1M95.5 101.5h1M143 138h1M41 137h1M11 76h1M55.5 42.5h1M112 59.5h1M120.5 56.5h1M18 125h1M105.5 68.5h1M111.5 67.5h1M126 11.5h1M91 128.5h1M120.5 41.5h1M78 76.5h1M123 19.5h1M43 112.5h1M89.5 122.5h1M135 86.5h1M34 117.5h1M143 22h1M72 38.5h1M81.5 82.5h1M126 154h1M1 38.5h1M52 94.5h1M84 98.5h1M144.5 112.5h1M132.5 10.5h1M152 60.5h1M9.5 36.5h1M149 144.5h1M78 95.5h1M125 72.5h1M129 94.5h1M132 59.5h1M69 45.5h1M140 29h1M120 19h1M129 65h1M30 25.5h1M57 120.5h1M122 94.5h1M38 127.5h1M41.5 51.5h1M154 38.5h1M68 119.5h1M101.5 67.5h1M60 130h1M72 27h1M152 12.5h1M42.5 61.5h1M131 149h1M34 120.5h1M53 137.5h1M73 13h1M118 17.5h1M65 115.5h1M29 35.5h1M55 115.5h1M80 116.5h1M96 46.5h1M71 103.5h1M156 123.5h1M21 108h1M41.5 57.5h1M26 58.5h1M82.5 22.5h1M99 133.5h1M8 132.5h1M130 25.5h1M114 83.5h1M83 22.5h1M27 86.5h1M67.5 152.5h1M12 85h1M31 121h1M62 153.5h1M54.5 55.5h1M1 156.5h1M2 2.5h1M44.5 67.5h1M53 28.5h1M86.5 61.5h1M155 1.5h1M50 107h1M132 9.5h1M56.5 45.5h1M20 27.5h1M96 139.5h1M121.5 8.5h1M61.5 17.5h1M14.5 94.5h1M118 147.5h1M154 108.5h1M149.5 82.5h1M3 38.5h1M129 66.5h1M153 127h1M119 23.5h1M65.5 33.5h1M136 57.5h1M127 61.5h1M64 34h1M95 63.5h1M150 6.5h1M76.5 86.5h1M67 76.5h1M93 58h1M117 149h1M29.5 55.5h1M8.5 77.5h1M146 125h1M141 107.5h1M132 90.5h1M118 13h1M124 100.5h1M90 50.5h1M4.5 130.5h1M91 63h1M22 100.5h1M97 152.5h1M128 11.5h1M115 133h1M154 37.5h1M31.5 22.5h1M42.5 49.5h1M22 68.5h1M105.5 87.5h1M46.5 148.5h1M1 30.5h1M142 112h1M26.5 155.5h1M46 84h1M118 11h1M55 36h1M19.5 148.5h1M92 125h1" stroke="#fff" stroke-opacity="0.40" stroke-width="1" fill="none"/></pattern><mask id="dm3" maskUnits="userSpaceOnUse" x="0" y="0" width="1767" height="1211"><g fill="#fff" filter="url(#bl)"><polygon points="659,347 763,347 729,607 633,607" /><polygon points="989,382 1071,382 1045,607 976,607" /><polygon points="1282,468 1320,468 1312,633 1274,633" /><polygon points="295,191 364,200 364,364 295,347" /><polygon points="460,260 542,269 529,486 451,473" /><polygon points="-9,633 87,659 104,824 -9,846" /><polygon points="1301,855 1605,868 1622,954 1518,1006 1319,985" /><polygon points="1119,1071 1258,1058 1475,1119 1778,1190 1778,1232 1353,1232 1215,1158" /><polygon points="130,833 286,781 286,694 486,659 607,685 781,720 954,763 1128,807 1319,859 1319,1119 1197,1149 1041,1123 868,1071 694,1022 521,961 347,902 217,868" /><polygon points="-9,761 193,847 400,911 491,945 434,979 347,949 217,905 108,875 -9,840" /></g></mask><pattern id="dp4" width="211" height="211" patternUnits="userSpaceOnUse"><path d="M82 180h1M201.5 138.5h1M36.5 126.5h1M65 169.5h1M56.5 117.5h1M107.5 78.5h1M58 41.5h1M123.5 93.5h1M17 195.5h1M15 68h1M162 78.5h1M24 124.5h1M198 82.5h1M180 158.5h1M205 170.5h1M149 46.5h1M120.5 32.5h1M74.5 29.5h1M130 181.5h1M32 98h1M167.5 5.5h1M97 10.5h1M130.5 18.5h1M40 125h1M72 112h1M166.5 40.5h1M189 167.5h1M208 138h1M57 65.5h1M94.5 92.5h1M195.5 146.5h1M125.5 111.5h1M115 17.5h1M18 175.5h1M15.5 127.5h1M57.5 205.5h1M87 5h1M178 86.5h1M131 51.5h1M91 74.5h1M128 31h1M195 62.5h1M70.5 13.5h1M153 62.5h1M177 165.5h1M108.5 79.5h1M134 201h1M139 83.5h1M201.5 199.5h1M186.5 167.5h1M126 19.5h1M184.5 93.5h1M3.5 49.5h1M53 15.5h1M131.5 189.5h1M33 194h1M94 202.5h1M90 183.5h1M119 206h1M202.5 171.5h1M86 17.5h1M190 200.5h1M123 137.5h1M15 118.5h1M19 148h1M91 99.5h1M17 136.5h1M112 140.5h1M141.5 70.5h1M176 122h1M52.5 37.5h1M21 204.5h1M11 15.5h1M35 180.5h1M166 140.5h1M66 128.5h1M193 118.5h1M107 83.5h1M133 71.5h1M131.5 48.5h1M199 140h1M49 184.5h1M88 173h1M46 76h1M54.5 81.5h1M30 71h1M125.5 105.5h1M84 74.5h1M149 142.5h1M157 167h1M107 21.5h1M123 37.5h1M156 46h1M192 87.5h1M59 204.5h1M46 118.5h1M174.5 191.5h1M64 21h1M172 126.5h1M155.5 195.5h1M112 189.5h1M93 121h1M95.5 29.5h1M22 102h1M95 79.5h1M131 64.5h1M32.5 16.5h1M130 60h1M116 42h1M6 33.5h1M95.5 73.5h1M158 80.5h1M108 148.5h1M140 126.5h1M31 71h1M147 149h1M75.5 147.5h1M10 19.5h1M165.5 39.5h1M83 14.5h1M124 133h1M166 52.5h1M131 78.5h1M12 59.5h1M35.5 8.5h1M181 138.5h1M28 131.5h1M100.5 180.5h1M107.5 177.5h1M11 98h1M148 88.5h1M47 197h1M195 96h1M13.5 141.5h1M138 8.5h1M41.5 144.5h1M99 5h1M56 167h1M28.5 143.5h1M133 45.5h1M202 125h1M10 54h1M121 21.5h1M103 203.5h1M148 118.5h1M179 116.5h1M176.5 123.5h1M182 109h1M75.5 119.5h1M101 94h1M150.5 195.5h1M61 66.5h1M15 30h1M86 135h1M173 124h1M205 149.5h1M101 74h1M167.5 138.5h1M55 8h1M61.5 118.5h1M135 32.5h1M151 57.5h1M95 192h1M105.5 202.5h1M141 92h1M129.5 28.5h1M118 47.5h1M176 182.5h1M177 113h1M194.5 23.5h1M90 95.5h1M23.5 134.5h1M177 153.5h1M191 119h1M122 37h1M47 52.5h1M131 186.5h1M106 77h1M127 100.5h1M102 57h1M111 180.5h1M169 191.5h1M3 54h1M73.5 201.5h1M42 52h1M23 52.5h1M23 132.5h1M170 69h1M82.5 44.5h1M48.5 113.5h1M152 28.5h1M133.5 2.5h1M22.5 205.5h1M79.5 140.5h1M157 46h1M155 135.5h1M47.5 21.5h1M207 38.5h1M106 9.5h1M119 195h1M143 190.5h1M135 71.5h1M206 96.5h1M19.5 135.5h1M38 43.5h1M204 41.5h1M186 184h1M93 143.5h1M33 51.5h1M178 195.5h1M49 192.5h1M178 31.5h1M80.5 21.5h1M33 88.5h1M28 126h1M130 18.5h1M16.5 60.5h1M134 40.5h1M82 31.5h1M50.5 85.5h1M83 17h1M146 92.5h1M73 129.5h1M61 178h1M151 184h1M67 35.5h1M208 192h1M38 161h1M68 182.5h1M1.5 122.5h1M142 191h1M130 39.5h1M150 179.5h1M52 41.5h1M158.5 93.5h1M0 188h1M68 141h1M186 161h1M180 132h1M120 171h1M130.5 142.5h1M18 43h1M33 77.5h1M28 102h1M18 205h1M63 8h1M175 49.5h1M205.5 82.5h1M188.5 134.5h1M102 158.5h1M130 137.5h1M66 126h1M86 178.5h1M19.5 130.5h1M46.5 170.5h1M113 75h1M52 89.5h1M19 73.5h1M210 38.5h1M204 152h1M32.5 65.5h1M111.5 95.5h1M170 139.5h1M2 28.5h1M185 67.5h1M19 210h1M143.5 164.5h1M49.5 192.5h1M81 134h1M185 10h1M148.5 62.5h1M87 58.5h1M83.5 206.5h1M144 45.5h1M61 121.5h1M142 11.5h1M170 34.5h1M191 32.5h1M189 203h1M192.5 138.5h1M13.5 157.5h1M130 154.5h1M79 168.5h1M80 166h1M194 176.5h1M175.5 185.5h1M27.5 73.5h1M201 185h1M172 197.5h1M122.5 68.5h1M101 83.5h1M137.5 207.5h1M113 72.5h1M47 162.5h1M7 61.5h1M92 4h1M137 81h1M77 127.5h1M63.5 55.5h1M3 153.5h1M121.5 144.5h1M39 210.5h1M84 23.5h1M178 26h1M152.5 10.5h1M126.5 60.5h1M76 28h1M20 120.5h1M93 56.5h1M207.5 193.5h1M149 24.5h1M203 37h1M75 172.5h1M102 122h1M98.5 161.5h1M209 159.5h1M86 158h1M131.5 53.5h1M126 190h1M136 67.5h1M132 206.5h1M1.5 100.5h1M209 184.5h1M135.5 130.5h1M181 148.5h1M130 176.5h1M1 132.5h1M11 174.5h1M190 66.5h1M73 90.5h1M75 118h1M187 79.5h1M179 128h1M40.5 197.5h1M96 133h1M205.5 81.5h1M121.5 206.5h1M112 89.5h1M194 186.5h1M100 128h1M45 94.5h1M14 51.5h1M45 170.5h1M33.5 182.5h1M105 57.5h1M175 1.5h1M6 53h1M193 75h1M63 178.5h1M0 167.5h1M58 13.5h1M108 162h1M37.5 158.5h1M19 197h1M191 201h1M191 40.5h1M61 18.5h1M141 185.5h1M48 44.5h1M202 22.5h1M17.5 40.5h1M22.5 97.5h1M77 25h1M0 139.5h1M86 191.5h1M25.5 140.5h1M129 188h1M50 96.5h1M54 205h1M180 29.5h1M185 198.5h1M119 186.5h1M195.5 137.5h1M175 6.5h1M10.5 121.5h1M177 115.5h1M204 144.5h1M132.5 33.5h1M166.5 190.5h1M196 125h1M48 140.5h1M53 85h1M7 56h1M204 191.5h1M173 116.5h1M131 32.5h1M55 190.5h1M99 115.5h1M180 155.5h1M23 88h1M7 146.5h1M77 169.5h1M141.5 145.5h1M152 34h1M37.5 148.5h1M33 48h1M67 180h1M197.5 170.5h1M124 196.5h1M102 22.5h1M14 3h1M81 136h1M72.5 107.5h1M21 209.5h1M130 151h1M29 162h1M139.5 87.5h1M206 37.5h1M107.5 36.5h1M142 46h1M109.5 188.5h1M0 20.5h1M5 29.5h1M207 47.5h1M76.5 147.5h1M134 61.5h1M28.5 49.5h1M103 10.5h1M122 182.5h1M203.5 12.5h1M20.5 19.5h1M141 6h1M28.5 61.5h1M91.5 64.5h1M154 119.5h1M111.5 76.5h1M96.5 14.5h1M23 107.5h1M27 102h1M147 192.5h1M101 188.5h1M14.5 182.5h1M62 157.5h1M145 49h1M79 90h1M30 5h1M23 25h1M157 17h1M114 7.5h1M199.5 166.5h1M198 81.5h1M21.5 3.5h1M155.5 134.5h1M45 145.5h1M55 64.5h1M85.5 192.5h1M112 107h1M159 31.5h1M145 71h1M122.5 92.5h1M123.5 144.5h1M182 114.5h1M1 144h1M52 10.5h1M86 67.5h1M138 37h1M134 91.5h1M135.5 37.5h1M144 91.5h1M202 200.5h1M195 193h1M159.5 86.5h1M140 54.5h1M117 170.5h1M46.5 97.5h1M111 92.5h1M155 65.5h1M55.5 60.5h1M203.5 3.5h1M204 149.5h1M194 107.5h1M178 90.5h1M125 85.5h1M87 177h1M207 58h1M125 92.5h1M30 107.5h1M3 174.5h1M116 162h1M191.5 103.5h1M18.5 26.5h1M91.5 132.5h1M157 10.5h1M69 122.5h1M45 35h1M199 202.5h1M153 84.5h1M60 22.5h1M83 26.5h1M146 196h1M206 205.5h1M123 107.5h1M31 113.5h1M188.5 147.5h1M24 73.5h1M184 193h1M6 38h1M52 178.5h1M48.5 77.5h1M152 132h1M50 135.5h1M171 1.5h1M124 27.5h1M191 45.5h1M15 171.5h1M49 148h1M126 205h1M88 26.5h1M87.5 16.5h1M181.5 15.5h1M131 155.5h1M15 152.5h1M38.5 20.5h1M74 115.5h1M2 143.5h1M115 67.5h1M91.5 158.5h1M193.5 209.5h1M65.5 115.5h1M58 91.5h1M15 99.5h1M182 171.5h1M2.5 44.5h1M198 39.5h1M16.5 184.5h1M166.5 194.5h1M35 125h1M111.5 70.5h1M168 135.5h1M133 75.5h1M194.5 161.5h1M177 23.5h1M114 4.5h1M4.5 63.5h1M133 43.5h1M134 121.5h1M9 124h1M201 17.5h1M141 130.5h1M59.5 204.5h1M36 174h1M110 29.5h1M30 81.5h1M106 202h1M178.5 193.5h1M14 134.5h1M162 14.5h1M186 145.5h1M87.5 146.5h1M188 81.5h1M174 176h1M94.5 41.5h1M123 97h1M69 192.5h1M100.5 157.5h1M39 87h1M128.5 24.5h1M105 6.5h1M162 146h1M74.5 52.5h1M117 81.5h1M63 176.5h1M166 37.5h1M124 34.5h1M144.5 82.5h1M132 36h1M159 171.5h1M168 180.5h1M194 79h1M90 164h1M58.5 125.5h1M1 126h1M114 150.5h1M127 95.5h1M118 177.5h1M84 13.5h1M100 158.5h1M75.5 18.5h1M95 150h1M101 33.5h1M96.5 43.5h1M72.5 149.5h1M18 173.5h1M28 111.5h1M34 36.5h1M93.5 118.5h1M174 18.5h1M164 33.5h1M38 5h1M35 42.5h1M178 10h1M17.5 189.5h1M5.5 27.5h1M203 82.5h1M74 187.5h1M179 158.5h1M150 84.5h1M207 100.5h1M56 50h1M109 151.5h1M79.5 206.5h1M120 56h1M102 67.5h1M205 92h1M180 36h1M186 136h1M46 1.5h1M79 90h1M39 9.5h1M74.5 4.5h1M202 200.5h1M203 172.5h1M205 23.5h1M145.5 194.5h1M193 143.5h1M108 126.5h1M145.5 124.5h1M188 122.5h1M198 53.5h1M172 96.5h1M177 190h1M97 89h1M154 146.5h1M139 72h1M16.5 203.5h1M92 185.5h1M11 192.5h1M158 30.5h1M139.5 39.5h1M55 155.5h1M131 93h1M206 117.5h1M124 160.5h1M184 45.5h1M10.5 97.5h1M195.5 144.5h1M83.5 76.5h1M49 94h1M126.5 149.5h1M26 71.5h1M79.5 5.5h1M165 57h1M169 98.5h1M99 99.5h1M62 92h1M73 93h1M39 105.5h1M170 15.5h1M20 202h1M130.5 164.5h1M195 34h1M97 127h1M195 64.5h1M135.5 164.5h1M187.5 163.5h1M0 193.5h1M147 71.5h1M138 13.5h1M67.5 154.5h1M92 190.5h1M164 96.5h1M149.5 19.5h1M148.5 106.5h1M140 172h1M2 134h1M157 146.5h1M60.5 104.5h1M2 159.5h1M146 201h1M33 122h1M79 49.5h1M9 203.5h1M68.5 81.5h1M175 44.5h1M16 95.5h1M81 90h1M136 38.5h1M108 148.5h1M26 34h1M81 171.5h1M70.5 39.5h1M41 103.5h1M14 22h1M8 192h1M116 149.5h1M129 167h1M101 202.5h1M103.5 144.5h1M88 88.5h1M102 53.5h1M202 185.5h1M122 56.5h1M148 152h1M29 159.5h1M48.5 61.5h1M173 56.5h1M143 77h1M202 71.5h1M117 184.5h1M117 160h1M23 199.5h1M50 195h1M77 134.5h1M13.5 48.5h1M131 101h1M184.5 127.5h1M67 126.5h1M153 188.5h1M184 63.5h1M92 19h1M197 18.5h1M25 175h1M192 202.5h1M26 156.5h1M137 150.5h1M209 180.5h1M168 64.5h1M13.5 139.5h1M4 58h1M114 208.5h1M31.5 142.5h1M29 189.5h1M183 151.5h1M85.5 41.5h1M97 56h1M25 34h1M138 80.5h1M118 129.5h1M135 193.5h1M23 210.5h1M38 102h1M118 206.5h1M188 131h1M82 159.5h1M21.5 35.5h1M193 173.5h1M37.5 153.5h1M29 84h1M111.5 8.5h1M33 97.5h1M25 8.5h1M131 35h1M43 79.5h1M168.5 58.5h1M111 132.5h1M93 72.5h1M36 107h1M128.5 69.5h1M161 75.5h1M201.5 34.5h1M72 93h1M109 30h1M142 72h1M96.5 142.5h1M186.5 114.5h1M5 176.5h1M44 49h1M101 17.5h1M27 80h1M106 54h1M187 109.5h1M109.5 155.5h1M88 154.5h1M5 170.5h1M9.5 165.5h1M207.5 39.5h1M210 71.5h1M179 170h1M80 43h1M23 78h1M158 71.5h1M152 128.5h1M13 77h1M185.5 122.5h1M76.5 51.5h1M139 11h1M8 166.5h1M38 164h1M40 99.5h1M102 191.5h1M129 137.5h1M174 155h1M144 194.5h1M29.5 183.5h1M50 193h1M175 28.5h1M170.5 168.5h1M205 73.5h1M137.5 108.5h1M21 129.5h1M180 33.5h1M42 168.5h1M36 140.5h1M25.5 85.5h1M54 111h1M27.5 37.5h1M164 50.5h1M160.5 132.5h1M157 194.5h1M122 101h1M158 174.5h1M85 99h1M13 150.5h1M131 110h1M27 158h1M116 182.5h1M115 126.5h1M20 101h1M50 202.5h1M19 66.5h1M133.5 192.5h1M49 82h1M145 203.5h1M34.5 179.5h1M33 100h1M13 156.5h1M70 104.5h1M129 152.5h1M3 85.5h1M106 188.5h1M85 177.5h1M118 203h1M44 37.5h1M157 180.5h1M176 150.5h1M135 24h1M109 81.5h1M148 182.5h1M38 195h1M179.5 174.5h1M190 154h1M62.5 187.5h1M206.5 68.5h1M196.5 80.5h1M149 22h1M164.5 200.5h1M66 117.5h1M67 206h1M33 46.5h1M133 37h1M45 74.5h1M205 145h1M124.5 101.5h1M171.5 139.5h1M21 121.5h1M5 198.5h1M91 34.5h1M37 96.5h1M124 20h1M51 102.5h1M124 195.5h1M197 84h1M137 79.5h1M152 171.5h1M2.5 104.5h1M157 103h1M113 113.5h1M147 22h1M86 77.5h1M208 16.5h1M57 209.5h1M109.5 55.5h1M13 38.5h1M73 54h1M192 198.5h1M103 44.5h1M181 46.5h1M90.5 112.5h1M60 194.5h1M191.5 181.5h1M14 45.5h1M145 12.5h1M99.5 120.5h1M93 30.5h1M39 16.5h1M59 24h1M139 49.5h1M160 51h1M81 205.5h1M51 18h1M153 168h1M99 118.5h1M176.5 186.5h1M77 41.5h1M171.5 176.5h1M167.5 119.5h1M116 28h1M188 84.5h1M18 76.5h1M107.5 68.5h1M102 182.5h1M109.5 105.5h1M87 207.5h1M171 183.5h1M113 113h1M58.5 6.5h1M117 79h1M206.5 136.5h1M143 0.5h1M145 136.5h1M10 39.5h1M148.5 69.5h1M191 119h1M112 43.5h1M160 195.5h1M108 27h1M2 72.5h1M190 125h1M88 25.5h1M23 159h1M138 90.5h1M96 188h1M122 68.5h1M91 56h1M111 192.5h1M163 26.5h1M165.5 32.5h1M28 53.5h1M83 67.5h1M88.5 88.5h1M104 100.5h1M60.5 158.5h1M113 85.5h1M128.5 93.5h1M186.5 94.5h1M168 45.5h1M114 69h1M197.5 93.5h1M42 145.5h1M51 141.5h1M210 177.5h1M57 145.5h1M34 35.5h1M165.5 163.5h1M11 77.5h1M59.5 134.5h1M94 129h1M173 31h1M178 12.5h1M3.5 104.5h1M111.5 153.5h1M11 94h1M88.5 152.5h1M108 205.5h1M121 102h1M110.5 155.5h1M75.5 155.5h1M103 105.5h1M32 3.5h1M122.5 119.5h1M74 7h1M183 0.5h1M193 12.5h1M179 121.5h1M132.5 56.5h1M76 163.5h1M110 23h1M190 26.5h1M59 54h1M172 206.5h1M190 120h1M203 193.5h1M150 13h1M161.5 154.5h1M27 210.5h1M19 90.5h1M197.5 120.5h1M172 21h1M167 7.5h1M103 105h1M33 129.5h1M209 136.5h1M38 4h1M46 42h1M10 134.5h1M161.5 28.5h1M9 191.5h1M47.5 184.5h1M42 179.5h1M58 104h1M203 112.5h1M27 183h1M187 92.5h1M56 37.5h1M200 151.5h1M48 112.5h1M179.5 185.5h1M194 175.5h1M56 12.5h1M161 20.5h1M68 140.5h1M15 209.5h1M129 62.5h1M15.5 116.5h1M170.5 192.5h1M131 28.5h1M96 11.5h1M194 183h1M139.5 111.5h1M165 126.5h1M203 99h1M73 64.5h1M54 53.5h1M160 59.5h1M70 130.5h1M120 63.5h1M176 95h1M40 112.5h1M112.5 134.5h1M140 207h1M62 174h1M138 102.5h1M100 105h1M80 47h1M119 165h1M154 110.5h1M39.5 207.5h1M132 113h1M33 76h1M27.5 78.5h1M8.5 165.5h1M34 161.5h1M85.5 184.5h1M186.5 189.5h1M178 99.5h1M80 93.5h1M181 3.5h1M118 134h1M50 180.5h1M141.5 32.5h1M136.5 10.5h1M114 130.5h1M81 48.5h1M87 135.5h1M196 55.5h1M184 132h1M191.5 92.5h1M189 137.5h1M148 59.5h1M145.5 168.5h1M26.5 185.5h1M62 195h1M65.5 168.5h1M72.5 71.5h1M198 193.5h1M62.5 134.5h1M79 78h1M46.5 189.5h1M105 17.5h1M162 89.5h1M195.5 75.5h1M94.5 176.5h1M37.5 109.5h1M165 76.5h1M170 61.5h1M141 140.5h1M128 171.5h1M59 187.5h1M96.5 26.5h1M194.5 142.5h1M55 183h1M82 111.5h1M58 133.5h1M48 136.5h1M125 113.5h1M60.5 7.5h1M4.5 110.5h1M104 181.5h1M102 122.5h1M36 4.5h1M82 93h1M109 94.5h1M56 35.5h1M205 177h1M209 106h1M59 49.5h1M33.5 102.5h1M139 135.5h1M182 6.5h1M155 115.5h1M35 163h1M47 168h1M194 139.5h1M116 14.5h1M35.5 81.5h1M94.5 7.5h1M94 68.5h1M30 195.5h1M165 39.5h1M39 88.5h1M40 143.5h1M32 7.5h1M183.5 179.5h1M111.5 107.5h1M85 24.5h1M163 55.5h1M15 162h1M35 108.5h1M194 79.5h1M128.5 5.5h1M186 140.5h1M106 66h1M64 44.5h1M120 85.5h1M33.5 125.5h1M75 177.5h1M181.5 170.5h1M69 118.5h1M185 106h1M90.5 156.5h1M56 119h1M10.5 78.5h1M24.5 138.5h1M30 97.5h1M37.5 183.5h1M151 160.5h1M82 155h1M104 29.5h1M148.5 154.5h1M67 140.5h1M199.5 41.5h1M28 182h1M107.5 149.5h1M89.5 95.5h1M144.5 109.5h1M106 197h1M129 6.5h1M157.5 48.5h1M46 144.5h1M81.5 133.5h1M57 105.5h1M38.5 63.5h1M173.5 97.5h1M201.5 51.5h1M88 137h1M165.5 101.5h1M91.5 73.5h1M150 145.5h1M125 65.5h1M7 49.5h1M177 3.5h1M30.5 23.5h1M86.5 187.5h1M167 189.5h1M11 86h1M129.5 22.5h1M162 109.5h1M17 79h1M119 23h1M1 14h1M173.5 114.5h1M95 89.5h1M151 29.5h1M197 157h1M54 100.5h1M202 146.5h1M110 87.5h1M42 95.5h1M70 66.5h1M205.5 18.5h1M77 81.5h1M30 153h1M73 5.5h1M112 133.5h1M74 209h1M76.5 73.5h1M86 46.5h1M180 49h1M102 80h1M94 138.5h1M2.5 157.5h1M7.5 46.5h1M6 49.5h1M158.5 3.5h1M55 125h1M41 208.5h1M120 94.5h1M56 105h1M21.5 43.5h1M81 115h1M48 85.5h1M99 203h1M24.5 197.5h1M153 68.5h1M155 96h1M144 106.5h1M166.5 81.5h1M174.5 109.5h1M98.5 18.5h1M90 94.5h1M25.5 18.5h1M43 84.5h1M76 16.5h1M106 198h1M134.5 140.5h1M2 140.5h1M168.5 133.5h1M155 89.5h1M178 54.5h1M17 72.5h1M139 106.5h1M29 61h1M115.5 74.5h1M110 203.5h1M159 30h1M198 67.5h1M99 94h1M93.5 8.5h1M114 30h1M170 98.5h1M105 77.5h1M174 178h1M123 81h1M57 55.5h1M135.5 68.5h1M37 40.5h1M68 88h1M150 105.5h1M18 42.5h1M55.5 208.5h1M14.5 206.5h1M209 155.5h1M73 6.5h1M156.5 87.5h1M173 124.5h1M86.5 23.5h1M117 162h1M135.5 18.5h1M170 93.5h1M126 169h1M60 78.5h1M166 210h1M141 77.5h1M165 106h1M44 110.5h1M202.5 123.5h1M22 26h1M201 181h1M195 63.5h1M43 120.5h1M128 105.5h1M18 154h1M35 13h1M144.5 90.5h1M114 178.5h1M33.5 134.5h1M195 152.5h1M21 84.5h1M181 107h1M102 61h1M99 42.5h1M52 99h1M180 58.5h1M73 208.5h1M123 87.5h1M42 135.5h1M47 8.5h1M166 183h1M137.5 130.5h1M14 45.5h1M148 180.5h1M55 90.5h1M85.5 170.5h1M64.5 120.5h1M36.5 2.5h1M59 184h1M204 28h1M98 129.5h1M99 89h1M111 130h1M125.5 129.5h1M202 110.5h1M71 204h1M130 92h1M42 55.5h1M49 17.5h1M75 131h1M129.5 43.5h1M175 112.5h1M131 32.5h1M88 33.5h1M168 79.5h1M60 109h1M200 18h1M199 132.5h1M124 28h1M58.5 123.5h1M2 130.5h1M189.5 161.5h1M114.5 70.5h1M135 88.5h1M9 189.5h1M77.5 111.5h1M32.5 121.5h1M206 58h1M10 51h1M115.5 199.5h1M179 25h1M22.5 191.5h1M86 61.5h1M69 189h1M164 91.5h1M189 207.5h1M205.5 136.5h1M196.5 76.5h1M116.5 177.5h1M113 151h1M73 35.5h1M204 132h1M73.5 175.5h1M102 101h1M198 166.5h1M0 191.5h1M161 71h1M199 84.5h1M100 39.5h1M126 4.5h1M190 80h1M169.5 96.5h1M63.5 33.5h1M149 139h1M131 119.5h1M28 159.5h1M31 166.5h1M26 48h1M118 167h1M54 162.5h1M60 195h1M152.5 100.5h1M149 54.5h1M73 176.5h1M59.5 26.5h1M175 115.5h1M102.5 98.5h1M168.5 111.5h1M117 101.5h1M172 39.5h1M56.5 163.5h1M121 28.5h1M154 128.5h1M170 22h1M103 84.5h1M20 114.5h1M159 87h1M35 151h1M112 93.5h1M169.5 172.5h1M171 93h1M118.5 124.5h1M103 144.5h1M3 120.5h1M145 42.5h1M171.5 179.5h1M127.5 122.5h1M107 199h1M54 57.5h1M145.5 178.5h1M92 102.5h1M62 62.5h1M87 10.5h1M144 111.5h1M33.5 137.5h1M136 72h1M96 67.5h1M83 207.5h1M205.5 175.5h1M100 180.5h1M129 22.5h1M77 131.5h1M190 201h1M57.5 35.5h1M98 22.5h1M80 195.5h1M77 89.5h1M48 77h1M97.5 161.5h1M207.5 173.5h1M133 158h1M84 156h1M164 186.5h1M96.5 163.5h1M139 172h1M202 15h1M89 87.5h1M151 0h1M37 22.5h1M112 169.5h1M162 112h1M57 12.5h1M197 135.5h1M184 78.5h1M70 35.5h1M115 155h1M207 115.5h1M170 137.5h1M16.5 95.5h1M106 35h1M128 169.5h1M14 43.5h1M20.5 73.5h1M69 168.5h1M209 131.5h1M53 148.5h1M159 0h1M53.5 98.5h1M48 132.5h1M67 164.5h1M31 146h1M116.5 210.5h1M89 131.5h1M130 105h1M14.5 132.5h1M82.5 32.5h1M67.5 182.5h1M127 79.5h1M167 1h1M22 60.5h1M101 171.5h1M152 184.5h1M206.5 111.5h1M109 154.5h1M129 191.5h1M180.5 188.5h1M182 32.5h1M59 130h1M14 196.5h1M144 24.5h1M41 172h1M158.5 187.5h1M183 144.5h1M119 16h1M26 56.5h1M142.5 100.5h1M163.5 59.5h1M41.5 146.5h1M109 193.5h1M187 184.5h1M184 57.5h1M206 87.5h1M35 92.5h1M40 87h1M209 78.5h1M205.5 111.5h1M63.5 58.5h1M106 60.5h1M159.5 183.5h1M55 109.5h1M95 95.5h1M135.5 134.5h1M59.5 24.5h1M75 123.5h1M185 196.5h1M164 10.5h1M52 149.5h1M127 147h1M2 94.5h1M176 164.5h1M20 70h1M33.5 131.5h1M46 74.5h1M194 142h1M124 136.5h1M121 34.5h1M119 153h1M30.5 86.5h1M117.5 208.5h1M95 138h1M166 60.5h1M3 16h1M106 125.5h1M98 56.5h1M63 204.5h1M172.5 41.5h1M64 193.5h1M87 158.5h1M43 112.5h1M158 122.5h1M55 110.5h1M129.5 25.5h1M42 89.5h1M78 27.5h1M147 129.5h1M0 128.5h1M96.5 151.5h1M154 161.5h1M21 36h1M79 135.5h1M90.5 71.5h1M49 37.5h1M41 206h1M62 149.5h1M27 209.5h1M191 19.5h1M169 36h1M82.5 46.5h1M133.5 167.5h1M207 83.5h1M15 115h1M71 141h1M100 196.5h1M48.5 28.5h1M206 187.5h1M67.5 171.5h1M148 129h1M198 180.5h1M43.5 0.5h1M28 138.5h1M70 194.5h1M167 162.5h1M42.5 15.5h1M7 180.5h1M79 156h1M8 191h1M28 10h1M23.5 183.5h1M98 10.5h1M112 59h1M193 67.5h1M51 164.5h1M190 115.5h1M30 105.5h1M150 106.5h1M105 151.5h1M106 29.5h1M9.5 56.5h1M186 70.5h1M206 56h1M185.5 38.5h1M130 183.5h1M153.5 46.5h1M52 193h1M49 194.5h1M100.5 128.5h1M62 41h1M168 139h1M76.5 46.5h1M83.5 26.5h1M162 141h1M194 132.5h1M66 90.5h1M77 15.5h1M46 122h1M50 178.5h1M86.5 32.5h1M70 59h1M17.5 59.5h1M65.5 84.5h1M197 7.5h1M144 162.5h1M190 168.5h1M190 113.5h1M51 7h1M169 1.5h1M18 166.5h1M61 72.5h1M44.5 34.5h1M68 41h1M71 90h1M188.5 41.5h1M154 93.5h1M136.5 145.5h1M47 64.5h1M65 189h1M81 143.5h1M134.5 8.5h1M183 199.5h1M118 7.5h1M100.5 207.5h1M110 53.5h1M25 164h1M12.5 178.5h1M85 152h1M10.5 7.5h1M104 202.5h1M49 167.5h1M149.5 35.5h1M202 115.5h1M141 40.5h1M93 123h1M85 18.5h1M160 45.5h1M185 35.5h1M108.5 154.5h1M35 180.5h1M54 147h1M172.5 149.5h1M206 23.5h1M127 190.5h1M90.5 144.5h1M66 172h1M54 112.5h1M175 1.5h1M169 148.5h1M12 200.5h1M166 30h1M174 193h1M170 199.5h1M151 152h1M41 83.5h1M21 142.5h1M100 145.5h1M144 110h1M68 209h1M71 49h1M2 50.5h1M70 56h1M166 1.5h1M148 206.5h1M193 161.5h1M6 9h1M95 194.5h1M179.5 54.5h1M84 9.5h1M29 182.5h1M9 45.5h1M134 84.5h1M125.5 83.5h1M67 168.5h1M107 46h1M35.5 140.5h1M207.5 146.5h1M11 72h1M65 76h1M131.5 115.5h1M80.5 158.5h1M131 57h1M90 117.5h1M45.5 62.5h1M179.5 100.5h1M204 97.5h1M133 44.5h1M31.5 107.5h1M37 190h1M199 7.5h1M108 147h1M108 210.5h1M122 15.5h1M65 51h1M89.5 57.5h1M77 31.5h1M199 43h1M180.5 0.5h1M44.5 62.5h1M84 200h1M181 161h1M115 14.5h1M4 67.5h1M102.5 179.5h1M64 63h1M69 83.5h1M31 103.5h1M26 3h1M147 34.5h1M14 92h1M62 53h1M52 183.5h1M35.5 83.5h1M72.5 155.5h1M183 57.5h1M46 131h1M114 94h1M140 31h1M7 162h1M167.5 163.5h1M27 50.5h1M136 117.5h1M42 96h1M142 103.5h1M0.5 31.5h1M0 69.5h1M119 77.5h1M194 164.5h1M23 39.5h1M161 111h1M135.5 101.5h1M34.5 187.5h1M184 133.5h1M102.5 62.5h1M9 89h1M121 82h1M21 111.5h1M194 51.5h1M63 44.5h1M105.5 106.5h1M208 117h1M210 87.5h1M30 13.5h1M173.5 112.5h1M122.5 126.5h1M15.5 174.5h1M201 84.5h1M115.5 194.5h1M64 119h1M155 141.5h1M166 181.5h1M131 19.5h1M199 82h1M203 88h1M69 112.5h1M197 121.5h1M36.5 4.5h1M144 97.5h1M0 210.5h1M139 82h1M138 6h1M176 175.5h1M12 29.5h1M202.5 135.5h1M76 52.5h1M163 92h1M63 63h1M136 54.5h1M46.5 177.5h1M52.5 60.5h1M162 53.5h1M106 9.5h1M169 39.5h1M68 110.5h1M43 89.5h1M23 121.5h1M172 65.5h1M122 51h1M157 189.5h1M102 139.5h1M82 134.5h1M40 46.5h1M53 105.5h1M26 157.5h1M23 130.5h1M192.5 127.5h1M149 199.5h1M82 54.5h1M40 177.5h1M181 74.5h1M50.5 46.5h1M64 120.5h1M10 112.5h1M57 43h1M60.5 8.5h1M119 69.5h1M107.5 167.5h1M57 176.5h1M5 53h1M138 156h1M203.5 60.5h1M103 70h1M153 69.5h1M189 90h1M112 210.5h1M123 139.5h1M59.5 190.5h1M45 156.5h1M187.5 50.5h1M55.5 57.5h1M203 95h1M113.5 183.5h1M177 124.5h1M133 159h1M96 64.5h1M173.5 210.5h1M176 61.5h1M96 65.5h1M70.5 181.5h1M66 27h1M209 151.5h1M88 56.5h1M149.5 103.5h1M110 113.5h1M88 77.5h1M208 174.5h1M182.5 143.5h1M58 75.5h1M171 2h1M144 39h1M74 25.5h1M3 98h1M125.5 151.5h1M96 36h1M9 147h1M44 170.5h1M161 153.5h1M76 26h1M3.5 65.5h1M162 56.5h1M8 187h1M47.5 108.5h1M203 172.5h1M174 102h1M119 190.5h1M175 138h1M175 193h1M200 159h1M64.5 62.5h1M53.5 30.5h1M55 78.5h1M79 190h1M25.5 193.5h1M50 210h1M133 2.5h1M195 85.5h1M114 149.5h1M95 42.5h1M12 23.5h1M153 142.5h1M113 49h1M39 44.5h1M52.5 21.5h1M63.5 182.5h1M12.5 77.5h1M203 51.5h1M20 37h1M17 141.5h1M168 121.5h1M111 131.5h1M23 42.5h1M138 75h1M0 76.5h1M18.5 117.5h1M42 174.5h1M166 171h1M141 51h1M84.5 22.5h1M24.5 88.5h1M9 167.5h1M152.5 42.5h1M27 128h1M81 129.5h1M165.5 6.5h1M51 51.5h1M25 150h1M120.5 87.5h1M179 85.5h1M128.5 154.5h1M37 129h1M30 206.5h1M31 61.5h1M106.5 122.5h1M206 109.5h1M64 105h1M207 67.5h1M99.5 65.5h1M74.5 204.5h1M21 112.5h1M190.5 48.5h1M142.5 150.5h1M97 136.5h1M104 75h1M10.5 110.5h1M103 73h1M95.5 56.5h1M34 127.5h1M3 137.5h1M117 3.5h1M41 127h1M167 77.5h1M82 23.5h1M26.5 32.5h1M56.5 49.5h1M181 20.5h1M127.5 94.5h1M102 176h1M61 169h1M158 208.5h1M65 124h1M206 12h1M54.5 91.5h1M204 143.5h1M126 12.5h1M9 23h1M56 115.5h1M30 129h1M72 69.5h1M31 63h1M181 181.5h1M149 172.5h1M191.5 4.5h1M55 170.5h1M11 63.5h1M149 116h1M62 165.5h1M149 127h1M80 202h1M80.5 89.5h1M40.5 201.5h1M76.5 204.5h1M99 130h1M29.5 63.5h1M166 186.5h1M117 91.5h1M25.5 108.5h1M139 32h1M66 146.5h1M0.5 67.5h1M103 83.5h1M22 51.5h1M176 99h1M85 36.5h1M133.5 172.5h1M80 64.5h1M32 85.5h1M97 101h1M61.5 87.5h1M72 53.5h1M193 101h1M80 72.5h1M152.5 53.5h1M119.5 199.5h1M102 58h1M47.5 153.5h1M44 84h1M203 104h1M180 75h1M66 131h1M1 116h1M43 147h1M41.5 54.5h1M107 130.5h1M193 43.5h1M18.5 114.5h1M149 47.5h1M29 138h1M34.5 82.5h1M51 49.5h1M88 8h1M177 88.5h1M60 121h1M89.5 146.5h1M161 202.5h1M12 134.5h1M84 142.5h1M134 88.5h1M165 101.5h1M105.5 58.5h1M126 122.5h1M193 14h1M53.5 147.5h1M119 133.5h1M180 18.5h1M82 98.5h1M155.5 38.5h1M196 100.5h1M52.5 129.5h1M33 110h1M161 66.5h1M103 196.5h1M115 166.5h1M56 191h1M171.5 163.5h1M58.5 154.5h1M79 186.5h1M142 108.5h1M56 112h1M85 76.5h1M147 94.5h1M153 158h1M14 79.5h1M134 126.5h1M72 80.5h1M113 17h1M173 188.5h1M7 136.5h1M7 123h1M137 63h1M153 23.5h1M110 5.5h1M158.5 203.5h1M201 196.5h1M186 71.5h1M154 19.5h1M134 63.5h1M135 41.5h1M77.5 80.5h1M38.5 161.5h1M34 20h1M54 32h1M51 72h1M90 17h1M163 177.5h1M3 35.5h1M162 89h1M120 201.5h1M2 207.5h1M177 139h1M132 19.5h1M209 168h1M164 163h1M107 32.5h1M190.5 58.5h1M163 159.5h1M91 163.5h1M55 68.5h1M23 182.5h1M193.5 18.5h1M130 53.5h1M182.5 97.5h1M137 60h1M134.5 57.5h1M3 186h1M106.5 167.5h1M23 120h1M151 108h1M145 197h1M122 114h1M49 82.5h1M149.5 2.5h1M70 29.5h1M152 64h1M29.5 56.5h1M124 188.5h1M76.5 193.5h1M108 145.5h1M156.5 109.5h1M48.5 115.5h1M108.5 19.5h1M133.5 107.5h1M116.5 30.5h1M95.5 45.5h1M187.5 180.5h1M154 98h1M33 167.5h1M152 112h1M71 74h1M55 49.5h1M94 136.5h1M182.5 169.5h1M174.5 2.5h1M161 133.5h1M51 168.5h1M207 89.5h1M132.5 33.5h1M65 125.5h1M126 177.5h1M130 30h1M105 152.5h1M59 58h1M124 135.5h1M125 93h1M93.5 64.5h1M111.5 43.5h1M92 50.5h1M3 72.5h1M182 141.5h1M68 112h1M118 2h1M187.5 61.5h1M57 60h1M85 34h1M182 189h1M147 39.5h1M67 171.5h1M26 6.5h1M81.5 210.5h1M61 128h1M204 40.5h1M170 53.5h1M14 43h1M51.5 79.5h1M41 38h1M144.5 33.5h1M140.5 95.5h1M135 192.5h1M120 22.5h1M187 83.5h1M131 47h1M114 161.5h1M182 108.5h1M52 150.5h1M86.5 64.5h1M3 23.5h1M68 188.5h1M149 157h1M172 49h1M82 46h1M3 116h1M51 19.5h1M169 24.5h1M173 208.5h1M37.5 84.5h1M191.5 9.5h1M83 31h1M23.5 42.5h1M59 136h1M39 92h1M185.5 86.5h1M165.5 85.5h1M18 140h1M113 65h1M188 188h1M78 106.5h1M57 196.5h1M195.5 22.5h1M201 199.5h1M130 14.5h1M29 84h1M109.5 137.5h1M198.5 186.5h1M81 113.5h1M134 204h1M8 12.5h1M196 140h1M54.5 32.5h1M186 210.5h1M39 57.5h1M141 81.5h1M85 41.5h1M68 14h1M67.5 127.5h1M15 195.5h1M148 86h1M16.5 4.5h1M11 168h1M51.5 177.5h1M39 52.5h1M13.5 108.5h1M147 101.5h1M140 181.5h1M82 138h1M131 44.5h1M189.5 176.5h1M96 50.5h1M179 89.5h1M105 16h1M110.5 49.5h1M129 182h1M207 111.5h1M183 13.5h1M42 103.5h1M4.5 45.5h1M138 20h1M121 107.5h1M170.5 27.5h1M141 75.5h1M122 42.5h1M198 40.5h1M118 37.5h1M126 13.5h1M208 136h1M189 58.5h1M208 145.5h1M118 64.5h1M103.5 184.5h1M182 55.5h1M125 143.5h1M80.5 44.5h1M184 42.5h1M54 182h1M138 17.5h1M91 56.5h1M182 196.5h1M96 94.5h1M38 123.5h1M112 198.5h1M188 37h1M190 141.5h1M148 90.5h1M140.5 208.5h1M39 83h1M199 23h1M191 100h1M158 131h1M109 184.5h1M121 38.5h1M97 210h1M82.5 37.5h1M151 94.5h1M130 64h1M165 137h1M163 29h1M9 142.5h1M50 119h1M75.5 125.5h1M167 101.5h1M157 58.5h1M64.5 111.5h1M161 54h1M28 19.5h1M53 141h1M165.5 189.5h1M45 135.5h1M80 120h1M111 68.5h1M137 149.5h1M207 63h1M158 20.5h1M74 32h1M65.5 209.5h1M69 119.5h1M102 154h1M125 68.5h1M173 124.5h1M101 148.5h1M70 182.5h1M166.5 78.5h1M110 5h1M128 77.5h1M68.5 31.5h1M170 162.5h1M78 91.5h1M96 149h1M151.5 32.5h1M53 123h1M209 19h1M151 114.5h1M75 200.5h1M123.5 150.5h1M4 191.5h1M51 59h1M201 192.5h1M41 113h1M42 63h1M150 125h1M188 186.5h1M196.5 133.5h1M10 181h1M74 118h1M82 142.5h1M14 16.5h1M133 140.5h1M128 101.5h1M110.5 88.5h1M192 93.5h1M73 8h1M160 56.5h1M156 48.5h1M18.5 62.5h1M28 13.5h1M173 174h1M17.5 186.5h1M36 165.5h1M4 152.5h1M187 169h1M3 127.5h1M12 104.5h1M49 44h1M26.5 10.5h1M36.5 181.5h1M33 195.5h1M138 68h1M36 169.5h1M195.5 140.5h1M200.5 171.5h1M110 149h1M102 209h1M76 139h1M85 188h1M61 5.5h1M152 126.5h1M16 178h1M116 121.5h1M39 180.5h1M15 35.5h1M17 72h1M151 186.5h1M172 15h1M52 131.5h1M105.5 128.5h1M146 151h1M185 61.5h1M27 108.5h1M147.5 103.5h1M118 141h1M53.5 6.5h1M103.5 127.5h1M129 119.5h1M210 15.5h1M13 51.5h1M48 163.5h1M40 47.5h1M77 18h1M162 200.5h1M27.5 120.5h1M164 109h1M11.5 115.5h1M149 57.5h1M164 14.5h1M55.5 160.5h1M177 119.5h1M107.5 15.5h1M9 187.5h1M97 147.5h1M119 159h1M63 119.5h1M183 210.5h1M44 57h1M42.5 76.5h1M205.5 92.5h1M102 124.5h1M198 33.5h1M60 8.5h1M114 124.5h1M173 98.5h1M17 35h1M147 205.5h1M93 186.5h1M5 171h1M109 166h1M12 121.5h1M68.5 164.5h1M152 57h1M131 109.5h1M170.5 60.5h1M9 68.5h1M78.5 202.5h1M33 54.5h1M158 49h1M69 126.5h1M143.5 74.5h1M141.5 40.5h1M98 78.5h1M170.5 10.5h1M168 64.5h1M184.5 184.5h1M0.5 156.5h1M209 51h1M6 65.5h1M139 152h1M1 116.5h1M48 180h1M51 157.5h1M13 39.5h1M11 122.5h1M130 36.5h1M42 148.5h1M115 153.5h1M206 107.5h1M138 0.5h1M165 58.5h1M126 131h1M4 199.5h1M18 82h1M171 61.5h1M44 125h1M48 153.5h1M203.5 12.5h1M80 102h1M76 179.5h1M162 183.5h1M21 188h1M198 199.5h1M182.5 97.5h1M142 3.5h1M35 113h1M153 201h1M193 180.5h1M193 157h1M204.5 57.5h1M123 180.5h1M160 194.5h1M37 3.5h1M148 48h1M107.5 74.5h1M85 165.5h1M43 103.5h1M148 138.5h1M201 2.5h1M88 145h1M73 14.5h1M176 85.5h1M209.5 108.5h1M112 169.5h1M123 84h1M136 167h1M117.5 12.5h1M56.5 110.5h1M134 184.5h1M75 19h1M188 141.5h1M152 55h1M155 42h1M59 171.5h1M83 146.5h1M40 99.5h1M128 207.5h1M209 10.5h1M82 163h1M168.5 1.5h1M34 65.5h1M95 203.5h1M108 19h1M120 14.5h1M35 13.5h1M34 43.5h1M12 197.5h1M97.5 61.5h1M4 168.5h1M186.5 181.5h1M7 124h1M203 29.5h1M165 147.5h1M54 74.5h1M180.5 182.5h1M204 8.5h1M182 78.5h1M59.5 102.5h1M30.5 158.5h1M184.5 136.5h1M42.5 121.5h1M41 14.5h1M15 76h1M189.5 130.5h1M176 7.5h1M64.5 60.5h1M6 107.5h1M207.5 131.5h1M96 179.5h1M192 23h1M20 8.5h1M140.5 136.5h1M51 4h1M155 203h1M120 174h1M44 76.5h1M82.5 95.5h1M23.5 152.5h1M194 132h1M167.5 154.5h1M88 48h1M122.5 201.5h1M103.5 173.5h1M45 164.5h1M105.5 135.5h1M40 181.5h1M164 121.5h1M32 4.5h1M152 136h1M90.5 184.5h1M101 1h1M116 58.5h1M189.5 49.5h1M142.5 125.5h1M165 20.5h1M87 117.5h1M203 68.5h1M74 170.5h1M126 153.5h1M83 81.5h1M48 135.5h1M3.5 27.5h1M188 15.5h1M175 75.5h1M180 75h1M124 176.5h1M60 97.5h1M15 162.5h1M82 54.5h1M153 61.5h1M123.5 95.5h1M185 6.5h1" stroke="#fff" stroke-opacity="0.50" stroke-width="1" fill="none"/></pattern><mask id="dm4" maskUnits="userSpaceOnUse" x="0" y="0" width="1767" height="1211"><g fill="#fff" filter="url(#bl)"><polygon points="286,785 291,698 486,668 607,694 781,729 954,772 1128,815 1314,868 1314,1110 1197,1136 1041,1110 868,1058 694,1006 521,946 347,885 226,855" /><polygon points="-9,640 76,650 91,815 -9,845" /><polygon points="-9,761 193,847 400,911 491,945 434,979 347,949 217,905 108,875 -9,840" /></g></mask><pattern id="dp5" width="199" height="199" patternUnits="userSpaceOnUse"><path d="M137.5 61.5h1M157 81.5h1M77.5 57.5h1M49.5 115.5h1M151.5 79.5h1M125.5 104.5h1M121.5 35.5h1M76 39.5h1M40.5 151.5h1M175 47.5h1M169.5 130.5h1M87 107.5h1M46 190.5h1M95 97.5h1M148.5 175.5h1M183 68h1M86 192h1M152 82h1M178 108h1M178 113.5h1M39 81h1M8.5 160.5h1M30 46.5h1M71 140.5h1M194 58.5h1M25.5 47.5h1M152 183.5h1M91 92h1M115 6.5h1M124 69.5h1M109 68.5h1M32.5 10.5h1M92.5 162.5h1M196 8.5h1M121 22.5h1M119 23.5h1M179 142.5h1M181 68.5h1M22 170h1M52 157.5h1M127 98h1M178 149.5h1M112.5 100.5h1M33 76.5h1M38.5 123.5h1M53 8h1M124 57.5h1M8 94h1M55 74h1M183 192h1M144 13.5h1M9.5 1.5h1M3 132.5h1M178 35.5h1M119 138h1M174 51.5h1M101 44h1M128.5 56.5h1M197 2.5h1M146 46.5h1M7 64.5h1M172 4.5h1M117 73.5h1M168 161.5h1M33 120.5h1M81.5 35.5h1M95 106h1M34 95.5h1M137 110.5h1M149 63.5h1M32.5 89.5h1M40 171.5h1M11 11.5h1M70 170h1M45.5 172.5h1M19.5 165.5h1M56 82.5h1M185 59h1M176 165h1M50 91.5h1M88.5 36.5h1M137 21.5h1M170 170.5h1M53 86h1M74.5 126.5h1M125 135.5h1M140.5 194.5h1M95 76.5h1M47 72h1M45 75.5h1M21 81.5h1M179 162.5h1M118 90.5h1M17 11.5h1M119 92.5h1M103.5 49.5h1M78 60h1M164 56h1M110 37.5h1M100 157h1M186 173h1M115 179.5h1M170 28h1M15 2.5h1M126 127.5h1M158.5 62.5h1M66 7h1M115 198.5h1M160.5 102.5h1M150 47h1M58 11.5h1M13 177.5h1M94 51.5h1M83 163.5h1M99.5 142.5h1M169 14.5h1M110.5 141.5h1M58 98.5h1M24.5 18.5h1M79 59h1M111 151.5h1M190 84.5h1M5 136.5h1M145.5 139.5h1M85.5 30.5h1M64 66.5h1M15.5 103.5h1M100 183h1M106.5 94.5h1M109 84.5h1M76 25.5h1M0.5 187.5h1M159 62.5h1M105 20.5h1M93 8.5h1M139.5 165.5h1M6 156h1M66 153.5h1M55.5 102.5h1M103.5 107.5h1M104.5 53.5h1M22 51h1M108 192.5h1M16 75h1M83 108.5h1M95.5 147.5h1M66 51.5h1M8 120.5h1M110 171.5h1M33.5 119.5h1M48 19h1M152.5 56.5h1M134 122.5h1M12 115.5h1M2 118.5h1M102.5 133.5h1M103 41h1M154 3.5h1M20 182.5h1M88 56.5h1M188 40.5h1M1.5 35.5h1M178 27.5h1M98 139.5h1M31.5 89.5h1M90.5 85.5h1M79.5 20.5h1M131 195.5h1M197 131.5h1M35 139.5h1M9 57.5h1M134 126.5h1M2.5 77.5h1M191 65.5h1M13.5 83.5h1M48 116h1M38.5 36.5h1M147 31.5h1M46.5 75.5h1M113 123.5h1M180 36.5h1M146 16h1M179 43.5h1M84 97.5h1M35 105.5h1M185 21h1M57.5 136.5h1M114 182h1M31 170h1M39 168h1M22 21.5h1M37 156h1M72 23.5h1M34.5 119.5h1M94 103h1M101.5 162.5h1M197 181.5h1M143 43h1M122 10.5h1M109 48.5h1M185 159.5h1M131 147.5h1M88 18.5h1M69 78.5h1M31 51h1M158.5 131.5h1M51 102h1M25 149h1M0 15.5h1M10 195h1M107 8.5h1M115 96.5h1M79 166h1M98.5 188.5h1M90 0.5h1M70.5 177.5h1M134 113h1M149 97.5h1M5 18h1M56 7h1M58 80h1M18 196.5h1M139 139.5h1M58 192.5h1M98 120.5h1M50 114h1M192 102.5h1M57 88.5h1M101.5 30.5h1M198 32h1M20 91.5h1M97 152h1M117.5 99.5h1M73.5 117.5h1M20 198.5h1M146 69h1M32.5 124.5h1M173 164.5h1M93 45.5h1M71 105.5h1M47 151h1M22 89.5h1M166.5 183.5h1M84 177.5h1M133 172.5h1M77 46.5h1M53 64.5h1M175 175.5h1M107 133h1M57 32h1M14 16h1M82 91h1M8.5 176.5h1M172.5 133.5h1M39 149.5h1M143 170.5h1M88.5 156.5h1M98.5 54.5h1M49 28.5h1M83.5 103.5h1M2.5 59.5h1M198 15.5h1M70 191.5h1M57.5 0.5h1M176 138h1M151.5 22.5h1M43 176h1M57 145h1M129 189h1M143.5 81.5h1M9 178h1M153.5 182.5h1M25 128h1M26 88.5h1M51 22h1M118 90.5h1M198 129.5h1M88 54.5h1M34 115.5h1M194.5 189.5h1M159 102.5h1M147 23h1M53 196.5h1M165 112.5h1M40 54.5h1M137 166h1M39 82.5h1M105.5 15.5h1M84 8.5h1M11 29.5h1M82 116h1M127 124.5h1M74 37h1M186.5 79.5h1M60 124.5h1M111 182.5h1M72 116.5h1M6 108h1M162 47.5h1M175 157.5h1M28 135.5h1M85 46h1M135 46.5h1M123 138h1M30.5 114.5h1M136.5 114.5h1M77 185.5h1M185.5 177.5h1M143 48h1M48 70.5h1M38 107.5h1M159 153.5h1M25 158h1M88 154.5h1M102 54h1M61 86h1M125 4.5h1M150 70.5h1M127 74h1M65 23h1M97 122.5h1M79 27.5h1M124 7.5h1M181 43.5h1M45 63.5h1M194.5 127.5h1M137.5 50.5h1M195 118.5h1M93 153h1M19 91h1M118.5 51.5h1M64 77.5h1M33.5 15.5h1M12 123.5h1M37 91.5h1M7 115.5h1M184.5 128.5h1M77 92.5h1M68.5 181.5h1M119 156.5h1M126 185h1M172.5 159.5h1M176 124.5h1M178 23.5h1M151 128.5h1M1 127.5h1M164 63.5h1M114 138.5h1M138 94.5h1M88 4h1M76 191h1M84 93.5h1M171 85.5h1M78 122.5h1M23.5 151.5h1M67 21h1M197 56.5h1M198 106.5h1M139 152.5h1M62 174.5h1M194 120h1M65.5 36.5h1M3 97h1M107 104.5h1M93 143h1M32 161.5h1M71 198.5h1M119 23.5h1M6 66.5h1M120.5 107.5h1M88 187h1M76 186h1M189 190h1M165.5 13.5h1M34 171.5h1M116 130.5h1M27 105.5h1M117 25.5h1M114 106.5h1M76 64h1M153.5 28.5h1M110.5 34.5h1M146 97h1M186 98h1M6 103.5h1M29 137h1M41 156h1M87 4.5h1M178 47.5h1M194 112h1M166.5 132.5h1M10 158.5h1M31.5 127.5h1M8 139.5h1M54.5 178.5h1M125 116h1M109 120.5h1M135 71.5h1M141.5 171.5h1M66 109.5h1M136 64h1M184 135.5h1M130 146h1M35.5 136.5h1M83 102h1M126 175h1M23 89.5h1M193.5 41.5h1M179.5 134.5h1M7 132h1M10 164.5h1M77 46.5h1M24 139.5h1M35 182.5h1M88 29.5h1M7.5 51.5h1M120 103.5h1M85.5 78.5h1M70 134h1M141 90.5h1M124 129.5h1M141 13.5h1M153 191h1M129 103.5h1M150 40.5h1M161 51.5h1M63 65.5h1M164 138.5h1M69 61.5h1M34 166.5h1M133.5 67.5h1M61 197.5h1M195 50.5h1M186 70.5h1M69 111.5h1M59 163.5h1M52.5 174.5h1M103 50.5h1M1 133.5h1M49.5 54.5h1M9 181h1M62 100.5h1M138 114.5h1M126 167.5h1M184.5 72.5h1M178 118.5h1M74 117.5h1M50 113.5h1M68 26.5h1M113.5 17.5h1M172 33.5h1M166 95.5h1M162.5 110.5h1M9.5 92.5h1M155 79.5h1M15 107.5h1M98 47.5h1M99 30.5h1M33 107.5h1M1 98.5h1M172 165h1M37 149h1M37.5 120.5h1M46 177.5h1M31 8.5h1M98 18.5h1M76 110.5h1M159 119.5h1M98.5 171.5h1M113 194.5h1M146 131h1M86 86.5h1M66 198.5h1M176 153.5h1M39 41h1M164 93.5h1M154 194.5h1M55.5 82.5h1M35 2h1M187 118.5h1M57 54.5h1M18 140.5h1M93 188h1M130 11h1M71 46h1M41 82h1M75 78.5h1M88.5 113.5h1M144.5 142.5h1M71 91.5h1M146 165.5h1M53 86.5h1M185.5 153.5h1M157.5 11.5h1M86 179.5h1M111.5 194.5h1M184 4.5h1M29 120.5h1M153.5 97.5h1M21.5 15.5h1M30 1.5h1M33 126.5h1M13 138.5h1M82.5 62.5h1M15 75.5h1M78 162h1M89 190.5h1M47 122h1M66 82.5h1M75 22h1M163 115.5h1M57 98h1M32.5 187.5h1M147.5 42.5h1M8.5 37.5h1M129.5 133.5h1M130 140.5h1M66 48h1M195 54h1M126 185.5h1M6.5 193.5h1M9 159h1M198 112.5h1M176 116.5h1M36.5 121.5h1M87 5.5h1M93.5 75.5h1M168 71.5h1M186 152.5h1M63 192h1M190 52h1M13.5 114.5h1M70 45.5h1M51 40h1M120 183.5h1M154.5 99.5h1M87.5 68.5h1M147.5 160.5h1M83 51h1M147.5 81.5h1M31 151h1M123.5 55.5h1M60.5 181.5h1M101 94.5h1M50.5 161.5h1M90.5 162.5h1M165 19h1M116 119.5h1M1.5 27.5h1M120 173h1M197.5 65.5h1M36 146h1M25 46.5h1M76 195.5h1M50.5 81.5h1M194.5 95.5h1M193 121h1M186 146.5h1M147 35.5h1M91 157.5h1M153 29h1M47 35.5h1M99.5 84.5h1M188.5 100.5h1M123.5 117.5h1M10 48.5h1M80 69.5h1M55 7h1M5 110.5h1M66 45.5h1M155.5 95.5h1M183 134.5h1M103.5 160.5h1M175 94.5h1M163 16.5h1M182 146h1M110.5 68.5h1M87 146.5h1M110 1.5h1M94 187h1M18 81.5h1M197.5 6.5h1M8 183.5h1M95 19.5h1M146 139.5h1M56 129.5h1M102 30.5h1M37 4h1M184 58.5h1M57 148.5h1M39.5 139.5h1M186 61.5h1M55.5 185.5h1M89 91.5h1M0.5 170.5h1M84 188.5h1M112 192h1M59 37.5h1M195 75.5h1M15 192.5h1M37 137h1M107.5 16.5h1M143 191.5h1M19 100.5h1M163.5 150.5h1M84 72.5h1M176 15h1M4 58.5h1M10 157.5h1M181 14.5h1M24 99h1M168.5 158.5h1M66.5 87.5h1M165.5 62.5h1M188 130.5h1M168 32.5h1M98 58.5h1M166.5 177.5h1M45.5 28.5h1M99 121.5h1M55.5 33.5h1M11 10.5h1M34 7.5h1M179 165.5h1M131 11.5h1M14.5 13.5h1M182 122.5h1M116 17.5h1M165.5 150.5h1M162 142.5h1M69 145.5h1M76 133.5h1M67 149h1M106 127.5h1M139.5 45.5h1M46 128h1M104 104.5h1M132 120h1M43 30.5h1M124 41.5h1M111.5 32.5h1M98 93.5h1M66.5 156.5h1M163 130.5h1M91 112.5h1M73 79h1M4.5 153.5h1M97 10.5h1M111.5 183.5h1M194 56h1M149.5 139.5h1M25 116.5h1M48 6h1M171 152.5h1M148 154h1M97.5 96.5h1M135 5.5h1M185 1h1M7 27.5h1M92 159.5h1M153 67.5h1M53 66h1M46 172.5h1M100 39h1M116 113.5h1M35 73h1M193 26.5h1M171 18h1M91 42.5h1M190 159.5h1M127 1h1M185 180h1M49.5 123.5h1M41 89h1M173 175h1M171 10.5h1M130 115.5h1M84.5 61.5h1M190 47.5h1M113 46.5h1M85 177.5h1M59 155.5h1M84 151h1M190.5 187.5h1M92 130h1M64.5 82.5h1M23 175.5h1M161.5 140.5h1M122.5 84.5h1M38 121h1M109.5 77.5h1M9 56h1M72 78.5h1M124 177.5h1M124 183.5h1M36 34.5h1M102.5 100.5h1M186 69h1M108 100.5h1M133 162h1M44.5 168.5h1M121 195h1M181 143h1M105 136.5h1M63 93.5h1M80 131.5h1M160.5 59.5h1M188 20h1M195 135h1M176.5 135.5h1M143 87h1M168 85h1M113.5 188.5h1M171 166h1M149 140h1M81.5 130.5h1M148 17.5h1M117.5 60.5h1M128 19h1M122 123.5h1M78 11h1M85.5 122.5h1M106.5 82.5h1M142.5 149.5h1M27 6h1M0.5 28.5h1M71.5 49.5h1M83 133.5h1M40 66.5h1M165.5 92.5h1M117.5 23.5h1M11.5 178.5h1M90.5 39.5h1M44 142.5h1M62.5 108.5h1M94.5 38.5h1M162 163h1M91 92.5h1M167 167.5h1M127 161h1M136 82.5h1M54 164.5h1M185 15h1M47.5 60.5h1M94 177.5h1M34 44h1M89 139h1M66 127.5h1M100 113.5h1M110 195h1M97 137.5h1M69 150.5h1M75 184h1M54 116.5h1M153 149.5h1M71 54.5h1M176.5 30.5h1M78 155.5h1M176 157.5h1M187 4.5h1M49.5 76.5h1M47.5 113.5h1M66 22.5h1M89 24h1M114.5 179.5h1M97 106.5h1M179 19h1M2 156h1M105 100h1M53.5 134.5h1M192.5 184.5h1M32 22h1M24.5 14.5h1M178.5 144.5h1M6 56h1M168 194.5h1M106.5 106.5h1M56 59.5h1M126 54.5h1M78.5 36.5h1M187 132.5h1M27 51h1M162 132h1M106 153h1M108.5 114.5h1M102 156h1M17 181.5h1M164 69.5h1M128 123h1M22.5 127.5h1M86 133h1M63 184h1M12.5 150.5h1M195.5 182.5h1M128.5 1.5h1M4 66.5h1M173 151h1M83 11.5h1M70 194.5h1M142 97.5h1M87 3.5h1M141 159.5h1M119 21.5h1M48 71h1M15.5 61.5h1M107 172h1M143 11.5h1M39.5 27.5h1M39 109.5h1M14 40.5h1M75 7h1M118 43.5h1M88 87h1M35.5 77.5h1M166 139.5h1M34.5 93.5h1M166 0.5h1M26.5 159.5h1M172 79h1M51 57.5h1M37 86h1M150 130h1M168.5 86.5h1M154 69.5h1M23.5 160.5h1M100 62.5h1M61 139h1M24.5 141.5h1M23 161.5h1M195 98.5h1M62.5 159.5h1M34 124h1M175 175.5h1M14.5 46.5h1M57.5 151.5h1M167 59h1M15 123.5h1M87 46.5h1M116.5 21.5h1M30.5 142.5h1M57.5 31.5h1M91 68.5h1M50 20.5h1M134 99h1M8 41h1M114.5 112.5h1M113 159.5h1M63 66h1M164 169.5h1M117 106h1M189 25.5h1M79 104.5h1M21 107.5h1M175 170.5h1M46 83.5h1M162 64h1M106 116.5h1M108 81h1M120.5 153.5h1M140 174.5h1M193.5 7.5h1M54 109.5h1M45 198.5h1M136 148.5h1M166.5 46.5h1M38 19.5h1M134 0h1M83.5 163.5h1M171 38h1M76.5 145.5h1M189 61.5h1M90 11h1M142 29.5h1M8 189.5h1M168.5 90.5h1M145 56.5h1M144.5 136.5h1M81 87.5h1M41.5 161.5h1M136.5 58.5h1M117.5 99.5h1M6.5 16.5h1M61 190h1M72.5 11.5h1M50.5 98.5h1M121 57h1M152 163.5h1M85 15h1M159.5 129.5h1M9 33.5h1M109 11.5h1M170 112.5h1M143 148.5h1M134 78.5h1M68 179.5h1M71 111.5h1M32.5 10.5h1M42.5 133.5h1M198 46h1M132.5 89.5h1M99.5 131.5h1M188 190h1M132 94.5h1M3 41.5h1M12.5 20.5h1M86 52.5h1M74 175.5h1M70 57.5h1M188 127.5h1M43.5 182.5h1M13 5.5h1M52.5 91.5h1M126 119h1M11 29h1M2.5 160.5h1M149 185h1M37 160h1M110.5 164.5h1M66 5.5h1M27 120h1M62 180.5h1M78.5 80.5h1M110 10.5h1M125.5 165.5h1M103.5 67.5h1M105 104.5h1M124 168h1M129 149.5h1M58.5 77.5h1M30 80h1M136 195h1M154 164.5h1M189.5 33.5h1M17 146h1M44 0h1M144 57h1M159.5 40.5h1M106 137.5h1M196 38.5h1M46.5 197.5h1M195 121.5h1M175 101h1M48 28.5h1M169 192h1M30.5 185.5h1M6 78.5h1M13 130.5h1M14 168.5h1M82 30.5h1M28.5 128.5h1M112 6h1M62 35.5h1M150 169.5h1M99 197h1M142 136.5h1M92 98.5h1M116 190.5h1M77 127.5h1M99.5 21.5h1M127 33h1M76.5 111.5h1M186 162.5h1M33.5 2.5h1M45 57.5h1M97 93.5h1M5 37.5h1M76.5 151.5h1M150 132.5h1M80.5 123.5h1M39.5 126.5h1M194 72.5h1M1 145.5h1M22 175.5h1M185 191.5h1M42 124.5h1M58.5 124.5h1M101 130.5h1M134 123.5h1M20 20.5h1M17 26.5h1M162 30.5h1M140 114h1M41.5 13.5h1M68 99.5h1M42 60.5h1M153 84h1M120 64.5h1M14 17.5h1M120.5 162.5h1M34 189.5h1M81 60.5h1M87 42.5h1M83.5 179.5h1M19.5 78.5h1M176 195h1M182 95h1M98 25h1M153 177.5h1M157 176.5h1M109 121.5h1M155 95.5h1M142 24.5h1M43.5 150.5h1M1 71h1M12 176.5h1M190 175.5h1M76 158.5h1M82.5 165.5h1M1 90.5h1M24.5 179.5h1M192 101h1M6.5 53.5h1M160 9h1M135 141.5h1M142 92.5h1M114 190.5h1M155.5 38.5h1M94 129h1M67.5 195.5h1M26 64.5h1M3 136.5h1M49 104.5h1M151.5 173.5h1M196 169.5h1M85 130.5h1M64 28h1M17.5 169.5h1M187.5 75.5h1M126.5 194.5h1M1 151.5h1M53 194.5h1M61 39.5h1M167.5 130.5h1M81 139.5h1M67 165h1M185 169h1M172.5 61.5h1M38 32.5h1M124 50h1M31 157h1M118 108h1M178 53.5h1M150 151.5h1M99 180.5h1M53 144.5h1M197 70.5h1M180 58h1M42 38.5h1M187.5 140.5h1M190 120h1M146.5 31.5h1M89.5 124.5h1M60 105.5h1M74.5 127.5h1M39.5 149.5h1M137 115.5h1M190 187.5h1M77 143h1M42 114h1M137 30.5h1M48.5 46.5h1M109 119.5h1M162.5 64.5h1M182.5 15.5h1M121 74.5h1M3 171h1M0 101.5h1M73 22.5h1M72 99.5h1M57 9.5h1M55 13h1M169 8h1M192 22.5h1M161 170.5h1M42 35.5h1M165 114.5h1M26 162h1M196 7h1M198.5 0.5h1M171 86.5h1M147.5 112.5h1M150.5 56.5h1M27 118h1M146 27.5h1M124 75h1M97 49h1M161.5 14.5h1M10 83.5h1M97 111.5h1M94 24.5h1M3.5 132.5h1M1 55.5h1M35 82.5h1M14 182.5h1M166 161h1M10 44.5h1M161 165.5h1M30 135h1M18 104.5h1M124.5 101.5h1M140.5 106.5h1M39 121.5h1M82 2h1M71.5 124.5h1M60 188.5h1M134 24h1M132 11.5h1M60.5 104.5h1M23 140h1M102 158h1M94 166h1M46.5 58.5h1M103 75h1M10 187.5h1M154 154h1M155 110h1M142 6.5h1M188 170h1M55 27.5h1M49 76.5h1M194 85.5h1M52 6.5h1M143 31.5h1M131.5 11.5h1M182 166.5h1M38.5 147.5h1M8 49.5h1M21 183.5h1M189.5 192.5h1M165 161.5h1M48 62h1M87 153h1M64 197.5h1M166 12h1M17 65h1M13 9.5h1M50 148.5h1M90 31.5h1M85 112.5h1M18.5 44.5h1M125.5 27.5h1M83 111h1M198 142h1M15 63.5h1M106.5 71.5h1M14 172.5h1M21 162h1M143 31.5h1M194 170.5h1M40 103.5h1M195 57h1M124.5 13.5h1M60 187.5h1M61 191.5h1M90 151.5h1M99 180.5h1M143 31h1M161 172.5h1M93 43.5h1M175 57.5h1M111 163.5h1M59 71.5h1M55 95h1M12 48h1M110 95.5h1M155 31.5h1M139.5 90.5h1M196 44.5h1M51 118h1M177 87.5h1M68 60.5h1M171.5 164.5h1M144.5 122.5h1M66 137.5h1M183 149h1M42 35.5h1M151 175.5h1M193 84h1M156 92h1M19.5 129.5h1M13 121.5h1M127 138.5h1M15 117h1M50 42.5h1M34.5 104.5h1M84 125.5h1M126 47.5h1M73 151h1M81.5 156.5h1M158 192.5h1M158.5 43.5h1M147 75h1M76 58.5h1M176 105.5h1M1 116.5h1M42.5 72.5h1M72.5 141.5h1M195 163.5h1M44 51.5h1M16 6.5h1M120 55.5h1M184 143.5h1M57.5 20.5h1M191 71.5h1M4 158h1M129 144h1M156 87h1M197 137h1M147.5 4.5h1M55 108h1M162 120.5h1M110 52.5h1M105 121h1M77 59.5h1M174 54.5h1M159 1.5h1M130 66h1M146.5 2.5h1M124 192.5h1M21 170.5h1M123 197.5h1M33 79.5h1M58 37.5h1M5 8.5h1M38 6.5h1M74 177.5h1M98 73h1M149.5 180.5h1M122.5 176.5h1M178 29h1M168 56.5h1M170.5 126.5h1M170 197.5h1M6 44.5h1M117.5 133.5h1M133 169h1M7 95.5h1M18.5 126.5h1M67 78h1M123 196h1M55.5 176.5h1M70 59.5h1M177 68.5h1M189 29.5h1M34 191.5h1M186.5 67.5h1M169 157.5h1M100 11h1M99 105.5h1M195.5 136.5h1M85.5 98.5h1M17.5 35.5h1M107 16h1M150 81.5h1M81.5 46.5h1M34 136.5h1M163 49h1M135 82h1M7 70.5h1M106 34.5h1M174 83h1M179.5 163.5h1M142 43.5h1M101 101.5h1M175 18h1M184 112h1M66 142.5h1M61 90.5h1M173.5 111.5h1M163 94h1M162.5 120.5h1M24.5 48.5h1M171 6.5h1M30 35h1M70 121.5h1M136 80.5h1M126 58.5h1M188 129.5h1M173 38h1M153 186.5h1M58 76.5h1M108 36.5h1M175 116.5h1M21.5 72.5h1M59.5 160.5h1M82 136.5h1M86.5 132.5h1M63.5 115.5h1M134 99.5h1M24 11h1M96 77.5h1M53 96.5h1M89.5 173.5h1M174 136h1M65 27h1M54 116.5h1M78 97h1M136 142.5h1M134 89.5h1M82.5 92.5h1M49 169h1M16 132.5h1M135 198.5h1M59 74h1M8 99h1M78 198h1M37 169.5h1M90.5 76.5h1M80 158.5h1M165.5 92.5h1M102 151.5h1M189.5 126.5h1M55 39.5h1M101 46.5h1M85 166.5h1M124 117.5h1M140 37.5h1M196.5 9.5h1M8 163.5h1M91 148.5h1M132 6.5h1M119.5 154.5h1M29 16.5h1M192 174.5h1M47 165h1M66 85.5h1M148 147.5h1M60 196.5h1M151.5 98.5h1M167.5 133.5h1M66.5 40.5h1M16 148.5h1M130 125.5h1M67 149.5h1M79 14.5h1M32 16.5h1M86 165h1M191.5 82.5h1M87 24h1M33 59.5h1M175.5 93.5h1M69 60.5h1M186.5 57.5h1M172 158.5h1M64 125.5h1M109.5 150.5h1M166.5 62.5h1M172 41.5h1M169 86.5h1M117 169.5h1M139 31.5h1M26 164h1M103 65h1M157 72.5h1M133 96.5h1M79.5 18.5h1M5 130.5h1M198 117.5h1M11.5 125.5h1M94 40.5h1M50 131.5h1M130 38.5h1M30 156h1M139 86.5h1M102 63.5h1M141 77h1M50.5 198.5h1M30 54.5h1M45 124h1M42.5 127.5h1M129.5 25.5h1M134 115.5h1M46 123.5h1M85 139h1M20.5 24.5h1M73.5 127.5h1M93 92.5h1M74 66h1M45 136h1M104 169.5h1M2 19.5h1M195 197.5h1M113.5 135.5h1M13.5 12.5h1M102.5 32.5h1M139.5 127.5h1M96 183.5h1M10 167.5h1M81 67h1M175.5 157.5h1M164.5 22.5h1M96 58.5h1M129 2.5h1M60 1.5h1M69.5 172.5h1M4 62h1M0 87h1M48 163.5h1M106 24.5h1M58 44.5h1M115 120h1M186 13.5h1M77 22h1M193 79.5h1M158 67.5h1M109 122.5h1M113.5 173.5h1M138 82.5h1M169 121.5h1M107 149.5h1M118 175.5h1M132 65.5h1M66 90.5h1M61 142.5h1M23 12.5h1M32 84.5h1M53 42.5h1M116.5 20.5h1M178 120.5h1M86 7.5h1M5 184.5h1M193 163h1M174 123h1M171 122.5h1M195.5 100.5h1M195 27h1M113.5 6.5h1M31.5 139.5h1M82 46.5h1M51.5 140.5h1M106.5 52.5h1M110 117.5h1M18 75h1M149 185.5h1M25 33.5h1M57 43.5h1M55 100.5h1M188 151.5h1M60 127.5h1M190 170.5h1M172 60h1M46 141h1M43 22.5h1M56 23.5h1M163.5 129.5h1M158 181.5h1M99 187.5h1M50.5 56.5h1M74.5 51.5h1M189 8.5h1M172.5 117.5h1M196.5 152.5h1M61.5 134.5h1M117 107.5h1M132 46h1M174 2.5h1M103 19.5h1M150.5 30.5h1M65 101h1M90.5 95.5h1M21 67.5h1M22.5 94.5h1M88 53.5h1M80.5 56.5h1M35 61h1M79 61.5h1M142.5 146.5h1M29 185h1M133 127.5h1M19 43h1M107 159h1M162 80h1M106 171.5h1M147.5 13.5h1M137 68h1M177 90.5h1M117 80h1M71.5 158.5h1M71 192h1M117 172.5h1M167 76h1M54 197.5h1M12 55h1M71 1.5h1M196 31.5h1M184 123.5h1M104 104.5h1M193 73.5h1M198 193h1M173.5 76.5h1M154 175.5h1M196 33.5h1M89 36.5h1M167 177.5h1M135 156.5h1M55 11.5h1M98.5 110.5h1M82 59h1M64.5 31.5h1M5 25h1M181.5 174.5h1M48 196h1M99 184h1M124 29.5h1M109 155.5h1M138.5 88.5h1M168 44.5h1M94.5 136.5h1M136 7.5h1M103.5 21.5h1M165.5 165.5h1M7 185.5h1M185 63.5h1M49.5 49.5h1M165 134.5h1M174 87.5h1M80 118.5h1M109 155.5h1M182 43.5h1M104 187h1M42 47.5h1M149.5 3.5h1M70.5 30.5h1M54 125.5h1M73.5 185.5h1M185 151.5h1M45 113h1M186 71h1M163.5 116.5h1M90 34.5h1M62.5 168.5h1M112 24h1M5 162.5h1M141 99.5h1M11 125.5h1M1.5 177.5h1M54 108.5h1M16 68.5h1M170 169h1M175.5 19.5h1M154.5 99.5h1M2 126.5h1M181 139h1M191 80.5h1M31 118h1M67 138h1M63 147h1M3 100h1M172.5 117.5h1M88 102.5h1M45 187.5h1M189 119.5h1M59 105h1M19.5 67.5h1M178 154h1M42 54.5h1M163.5 68.5h1M109 60.5h1M186.5 169.5h1M171 93.5h1M94 124.5h1M115 24.5h1M195 89.5h1M117.5 115.5h1M42 123h1M38.5 10.5h1M64 78.5h1M91 55.5h1M93.5 71.5h1M59 96h1M19 148.5h1M185.5 102.5h1M78 128.5h1M182 26.5h1M58.5 38.5h1M47.5 59.5h1M196 162.5h1M19 86.5h1M4 138.5h1M134 11.5h1M53.5 195.5h1M28 132.5h1M23.5 169.5h1M40 88.5h1M46.5 133.5h1M55.5 83.5h1M163 198.5h1M32.5 35.5h1M57 179h1M82 177.5h1M182 56.5h1M72 183.5h1M175.5 56.5h1M184.5 108.5h1M143 102.5h1M13 32.5h1M169 46.5h1M97 140.5h1M154 86.5h1M157.5 191.5h1M37 50h1M39 191h1M62 30.5h1M160 43.5h1M68 73.5h1M121 128.5h1M66 49.5h1M96 150.5h1M50 123.5h1M197 157h1M113 41h1M76 194.5h1M85 30.5h1M198.5 29.5h1M146 104.5h1M2.5 46.5h1M157.5 99.5h1M42 18.5h1M139 48.5h1M52 60.5h1M96.5 42.5h1M34.5 18.5h1M108 194.5h1M59 43.5h1M6.5 117.5h1M89 72.5h1M141.5 7.5h1M181.5 133.5h1M142.5 5.5h1M2 51.5h1M179 124.5h1M37.5 135.5h1M19 53.5h1M42 21h1M49.5 73.5h1M19.5 154.5h1M79.5 65.5h1M64 115.5h1M78.5 93.5h1M8 71.5h1M14.5 73.5h1M120 79.5h1M92 102.5h1M92.5 76.5h1M55 56.5h1M54 138.5h1M71 186.5h1M157 174.5h1M135.5 47.5h1M72 132.5h1M164.5 188.5h1M32 34h1M56 164.5h1M149.5 11.5h1M9.5 182.5h1M26 92.5h1M176.5 68.5h1M64.5 28.5h1M107 175h1M175 95h1M62 162.5h1M85.5 194.5h1M9.5 153.5h1M194 174.5h1M61 150h1M19 98.5h1M117 161.5h1M173.5 156.5h1M22 64.5h1M90 72.5h1M53.5 187.5h1M87 171.5h1M135.5 122.5h1M71 76.5h1M40 113.5h1M160 28h1M95 24.5h1M26 67h1M125 3.5h1M132.5 53.5h1M83 111h1M9.5 157.5h1M135 150h1M63 158.5h1M135 177h1M91 70.5h1M59 147.5h1M11 92h1M5 135h1M196 80h1M114 107.5h1M179 187h1M77 137.5h1M78 36h1M43.5 178.5h1M5.5 116.5h1M40 135.5h1M157 99.5h1M115 30.5h1M162.5 112.5h1M12 86h1M76 127h1M78 77h1M70 180.5h1M103 88.5h1M58 132h1M181 81h1M85 21.5h1M92.5 175.5h1M4 166h1M172.5 124.5h1M99 180h1M66 156.5h1M127.5 82.5h1M128 19h1M14.5 44.5h1M142 5.5h1M5.5 189.5h1M45 125h1M35 48h1M54 182h1M77 43.5h1M176 174.5h1M127 93.5h1M37 50.5h1M9 58h1M87 84h1M189 149h1M140 124.5h1M139 123.5h1M127 110.5h1M115 190h1M98 152.5h1M184 46h1M195 116h1M178.5 186.5h1M155.5 94.5h1M138 97.5h1M61 168.5h1M115 27h1M29 154.5h1M162.5 181.5h1M171 7h1M137 97.5h1M109 26.5h1M176 126.5h1M147 149.5h1M160 120h1M95 105.5h1M137 119.5h1M62.5 158.5h1M115 104.5h1M0 126h1M162.5 183.5h1M122 2h1M131.5 109.5h1M168 102.5h1M126.5 44.5h1M83 151.5h1M13 118.5h1M148 140h1M132 7.5h1M137 86h1M193 15.5h1M157 38h1M166 134.5h1M31 167h1M150 23.5h1M163 149.5h1M83 152h1M179 198.5h1M155 166.5h1M30.5 26.5h1M71 102h1M181 64.5h1M136 1h1M10.5 186.5h1M99 148.5h1M183.5 19.5h1M55.5 179.5h1M20 111h1M187 30.5h1M123 96h1M5 163.5h1M160 126.5h1M138 137h1M47 56.5h1M164 63.5h1M102.5 43.5h1M65 11.5h1M8 132.5h1M142.5 56.5h1M137 3.5h1M30 56.5h1M116 119.5h1M138 106h1M104 163.5h1M19.5 93.5h1M34 177h1M21 130.5h1M141 138.5h1M137 47.5h1M167 175.5h1M73.5 120.5h1M197 169.5h1M101.5 28.5h1M8.5 92.5h1M130.5 155.5h1M34.5 72.5h1M85 45.5h1M154 137h1M38 107.5h1M151 18h1M87 69h1M96 170.5h1M140 197.5h1M97 112.5h1M154 182h1M41 90.5h1M23 138.5h1M128.5 175.5h1M14.5 171.5h1M81 142.5h1M11 131h1M128 21.5h1M16 142.5h1M40 11h1M64.5 130.5h1M179.5 27.5h1M113.5 159.5h1M130 25.5h1M135 37.5h1M62 80.5h1M152 110.5h1M78 37.5h1M158 11.5h1M85 1.5h1M180 194h1M97.5 145.5h1M172 85h1M61.5 0.5h1M160.5 181.5h1M78 168.5h1M164 178h1M164.5 98.5h1M107 36h1M34 127h1M136 41.5h1M180 126.5h1M53.5 26.5h1M112.5 37.5h1M127 18.5h1M0 111h1M28 182h1M114 84.5h1M103 142h1M183 157h1M124.5 108.5h1M150 174h1M90.5 95.5h1M187.5 88.5h1M44 51.5h1M154 195h1M5 176.5h1M49 42h1M40 137.5h1M177 109.5h1M162 136.5h1M153.5 92.5h1M183.5 181.5h1M53 197.5h1M146 6.5h1M127 189.5h1M73.5 176.5h1M185 135h1M159 162h1M99 131.5h1M78.5 66.5h1M144.5 28.5h1M96 175h1M167 113h1M54.5 165.5h1M172.5 79.5h1M163 83.5h1M166 173.5h1M100 117.5h1M117 189.5h1M37 163h1M180.5 0.5h1M135 17.5h1M107.5 22.5h1M65 197h1M142 62.5h1M104 141.5h1M5.5 13.5h1M42 172.5h1M196 23.5h1M40 191.5h1M24.5 117.5h1M110 130h1M120 157h1M29 37.5h1M128 56h1M142 63.5h1M132 173.5h1M13 182h1M102 30h1M30.5 142.5h1M117 79.5h1M147 66h1M11 42.5h1M149.5 1.5h1M176 125h1M10 78h1M117 178.5h1M84 39.5h1M7 5.5h1M49 52h1M31 170h1M148 18.5h1M156 138h1M94.5 92.5h1M33 64.5h1M113 136.5h1M21.5 13.5h1M167 72h1M79 96h1M144 91.5h1M119 146h1M16 189.5h1M181 30.5h1M20 163.5h1M186 187h1M156 68.5h1M93 109.5h1M56 117.5h1M131 10.5h1M68 89h1M59.5 10.5h1M176.5 171.5h1M187 78.5h1M100 179.5h1M116 154h1M7.5 77.5h1M27 28h1M90 7h1M60 14h1M120.5 83.5h1M198.5 152.5h1M118 121.5h1M116.5 110.5h1M156 55.5h1M147 12h1M138 47.5h1M78 152h1M107 126.5h1M72.5 131.5h1M42 116.5h1M123.5 162.5h1M71 187.5h1M119 41.5h1M143 119.5h1M54 47h1M97 71.5h1M34.5 193.5h1M132.5 192.5h1M174.5 19.5h1M192 114.5h1M43 42h1M21.5 122.5h1M79 77h1M34 54.5h1M32 30.5h1M183 179h1M39 158.5h1M75 75.5h1M65 152h1M41 188h1M4 165h1M179.5 73.5h1M3 154h1M196 93h1M109 46.5h1M152 121h1M128 1.5h1M80 172.5h1M114 96.5h1M108 61h1M47.5 172.5h1M53 21.5h1M156 198.5h1M110.5 83.5h1M171 109.5h1M186 158.5h1M101 77.5h1M167 73h1M191 104.5h1M150 46h1M114 129h1M58 195.5h1M56 132.5h1M95 40.5h1M71 197.5h1M188 70h1M153 88.5h1M147.5 16.5h1M12.5 98.5h1M153 64.5h1M105 96h1M81 65.5h1M122 97.5h1M35 65.5h1M111 72.5h1M173 37h1M75 171h1M48 69.5h1M117 174h1M185 96h1M45 17.5h1M163 16h1M176 78.5h1M109 16.5h1M44 29.5h1M62 52h1M146 94h1M179.5 31.5h1M110 74.5h1M49 96.5h1M23 91.5h1M141 184.5h1M144 109.5h1M78 75.5h1M103 40h1M189.5 54.5h1M77 125.5h1M197 21.5h1M92 110.5h1M12 77h1M84.5 128.5h1M163 148h1M57 198.5h1M90 71.5h1M71.5 150.5h1M99 74h1M122 186h1M122 139.5h1M152 30h1M84.5 144.5h1M196 37h1M74.5 188.5h1M115 35.5h1M98 191h1M86 34.5h1M175 167.5h1M156 49.5h1M134 144.5h1M146 100.5h1M141 95.5h1M13 103.5h1M30 79.5h1M191 53h1M1 187.5h1M54 171.5h1M10 20.5h1M135.5 51.5h1M66 180h1M11.5 46.5h1M85 7.5h1M4.5 41.5h1M159 179.5h1M104 12.5h1M27 28.5h1M194.5 195.5h1M131 15h1M184 47h1M39.5 52.5h1M161.5 96.5h1M31 194.5h1M142 182.5h1M117 69.5h1M102 56h1M184 142.5h1M116 63.5h1M94 10.5h1M120.5 118.5h1M39 115.5h1M161 146.5h1M176 133h1M150 123.5h1M136 123.5h1M154 45.5h1M108.5 12.5h1M74 116h1M87.5 197.5h1M73 82.5h1M195 118h1M185 91h1M128.5 175.5h1M34.5 86.5h1M67 141.5h1M161.5 131.5h1M54.5 105.5h1M196 160.5h1M129.5 110.5h1M79 164.5h1M5 38.5h1M73 174h1M37 182h1M54 55.5h1M169 34.5h1M107 142.5h1M99.5 57.5h1M115 84.5h1M198.5 28.5h1M91 195.5h1M193 24.5h1M185.5 173.5h1M44 82h1M36 185.5h1M179.5 49.5h1M15 135.5h1M39 9h1M169.5 194.5h1M3 195.5h1M180.5 116.5h1M176.5 162.5h1M35.5 154.5h1M192 161h1M190 62.5h1M157 162.5h1M168 192.5h1M164 74.5h1M39.5 168.5h1M136.5 54.5h1M7 166.5h1M12.5 27.5h1M40.5 127.5h1M162 86.5h1M121 165h1M23.5 195.5h1M55 62.5h1M172 6h1M102 184h1M67 158.5h1M42.5 19.5h1M30 88.5h1M106 89h1M84.5 162.5h1M159 156.5h1M21 159.5h1M110.5 163.5h1M177 57.5h1M181 72.5h1M16 47.5h1M181.5 168.5h1M147.5 183.5h1M26 109.5h1M8.5 101.5h1M18.5 121.5h1M45 95.5h1M16 109h1M68 37h1M29.5 78.5h1M133 56h1M191 35.5h1M179.5 117.5h1M136 141h1M172 13h1M115.5 169.5h1M91 13.5h1M191 175.5h1M137 83h1M171 38.5h1M141 13.5h1M63 18h1M109 94h1M152 47.5h1M22 3.5h1M190.5 110.5h1M177.5 57.5h1M13.5 190.5h1M188.5 27.5h1M118 28h1M174.5 32.5h1M69 142.5h1M39 82.5h1M159 28.5h1M165.5 113.5h1M132.5 189.5h1M172 179.5h1M115 60.5h1M188 37h1M8 163.5h1M18 186h1M155 163.5h1M179 160h1M99 5h1M67.5 186.5h1M84 116h1M71 196h1M165 138.5h1M55 134h1M34 186.5h1M81 103.5h1M40.5 156.5h1M128 14.5h1M32.5 72.5h1M75 83h1M95 155.5h1M127 7.5h1M51 158.5h1M175.5 177.5h1M44.5 126.5h1M60 24.5h1M98 129.5h1M168.5 162.5h1M4 17.5h1M18 154.5h1M112 21.5h1M161 133h1M20 43.5h1M80 44h1M24.5 7.5h1M109 85.5h1M161 146h1M138 64.5h1M164 7.5h1M66.5 37.5h1M122 32.5h1M9 150.5h1M82 156.5h1M80 121h1M193 128.5h1M166 152.5h1M126 145h1M6.5 80.5h1M158.5 25.5h1M115 73h1M137 148.5h1M8 172.5h1M128 168.5h1M105.5 59.5h1M79 170h1M24 69h1M20 23.5h1M160 7.5h1M112 84h1M68 31.5h1M27 153.5h1M50 137h1M181.5 187.5h1M198 59.5h1M196.5 136.5h1M161 63.5h1M33 194.5h1M75 142h1M85.5 82.5h1M139 72.5h1M80 156.5h1M155 79h1M156 84h1M147.5 72.5h1M190 16h1M81 137.5h1M74 125.5h1M83 29.5h1M45 147.5h1M70 113.5h1M76 182.5h1M175 122h1M154.5 36.5h1M98 4h1M112 36h1M33 159.5h1M178 3h1M12.5 87.5h1M184.5 141.5h1M87.5 81.5h1M96 53h1M17 193.5h1M60 115h1M13 154.5h1M104.5 191.5h1M10.5 128.5h1M9 92.5h1M113.5 195.5h1M187 167.5h1M32.5 40.5h1M121.5 19.5h1M147 147h1M119.5 155.5h1M7 19h1M80.5 75.5h1M87.5 104.5h1M150 195h1M161 13.5h1M86.5 114.5h1M152.5 58.5h1M99 161h1M198 6h1M25 102.5h1M29 100.5h1M43 9h1M7 70.5h1M117 43.5h1M196 188h1M140 83h1M48 158.5h1M48.5 72.5h1M121 123.5h1M113 120.5h1M90 146.5h1M166 117.5h1M109 50.5h1M166 71h1M0 38h1M104 64.5h1M174 0h1M5 116.5h1M29.5 93.5h1M122.5 7.5h1M186 196.5h1M87 161.5h1M154 100.5h1M31 187h1M145.5 13.5h1M5 52h1M124 50h1M184 197h1M55 98.5h1M21.5 16.5h1M14.5 122.5h1M132 115.5h1M91 192.5h1M162.5 18.5h1M22 177.5h1M177.5 138.5h1M163 189h1M63 179.5h1M166 56h1M136 113.5h1M33 37.5h1M9 133.5h1M99.5 74.5h1M151 176.5h1M124 70h1M74 49.5h1M151 60.5h1M99 6h1M106 72h1M121 186.5h1M197 149.5h1M141 5h1M151.5 145.5h1M25.5 57.5h1M75 59.5h1M66 186.5h1M192 137h1M69.5 44.5h1M175 107.5h1M5 156.5h1M149 91.5h1M51.5 141.5h1M23 152.5h1M81 120.5h1M122 141h1M19 90.5h1M132 26h1M138.5 170.5h1M171.5 95.5h1M117 53.5h1M158.5 126.5h1M29 83h1M104 195.5h1M100 76.5h1M176 171h1M85.5 31.5h1M194.5 155.5h1M47.5 190.5h1M47 190h1M80 43.5h1M121 36.5h1M150 45.5h1M9 74.5h1M28 87.5h1M47 149.5h1M87 152h1M148 34.5h1M67 21.5h1M79 83.5h1M80 115h1M175 14.5h1M15 172.5h1M23.5 21.5h1M21 70h1M169.5 28.5h1M146.5 6.5h1M82 135.5h1M35 47.5h1M69 61h1M75 89.5h1M82 143h1M156.5 36.5h1M112 66.5h1M100 194.5h1M149 166.5h1M81 29h1M170 118.5h1M19.5 47.5h1M177 28h1M98.5 73.5h1M139.5 69.5h1M82 69.5h1M183 155h1M75 100.5h1M90.5 150.5h1M77 7h1M120 173.5h1M139 93.5h1M181 146h1M59 11.5h1M148 184.5h1M28.5 145.5h1M47.5 125.5h1M129 0.5h1M76 139.5h1M65 180.5h1M74.5 106.5h1M188 73.5h1M67 33.5h1M151.5 41.5h1M110 3.5h1M95 108.5h1M59 18.5h1M86 157.5h1M96 98.5h1M19 56.5h1M12 0h1M131 191h1M71 128h1M142.5 46.5h1M76 43.5h1M13 196.5h1M143 198.5h1M183.5 171.5h1M174.5 60.5h1M182 150h1M133 34.5h1M125.5 123.5h1M108 2.5h1M71 72h1M106 100h1M145.5 178.5h1M16 2.5h1M37 14h1M118 163.5h1M180 95h1M74 111.5h1M78.5 73.5h1M55.5 90.5h1M195 87.5h1M109.5 150.5h1M2.5 59.5h1M114 28.5h1M34 107.5h1M47 2.5h1M73 15.5h1M163 127h1M97 88h1M114 103h1M172 79.5h1M29 119h1M9 148.5h1M83.5 71.5h1M98 4.5h1M99 143.5h1M150 40h1M170 60h1M144.5 164.5h1M146 148.5h1M80 132.5h1M138 63h1M180 111.5h1M139 155h1M67 133h1M150 102h1M166 185.5h1M146 86.5h1M149 178h1M84 4.5h1M156 82.5h1M150 186.5h1M135 48.5h1M138.5 191.5h1M43.5 139.5h1M52 136.5h1M37.5 177.5h1M65 174.5h1M44 47.5h1M35 194.5h1M71 82.5h1M126 195.5h1M176.5 15.5h1M40 191.5h1M60 172.5h1M25 99.5h1M95 127h1M108.5 88.5h1M192 85.5h1M144 112h1M134 63h1M117.5 42.5h1M94 169h1M24 106.5h1M4 103.5h1M130 159h1M134.5 70.5h1M68 128h1M0.5 174.5h1M35.5 150.5h1M22.5 100.5h1M9 16.5h1M133 102.5h1M113.5 12.5h1M58.5 141.5h1M134 24.5h1M176 81h1M163.5 111.5h1M127.5 8.5h1M115 68.5h1M45 120.5h1M59 88.5h1M167 110.5h1M58 192.5h1M22 39.5h1M45.5 145.5h1M9.5 130.5h1M2 184.5h1M191 16.5h1M132 107h1M123 71.5h1M180.5 153.5h1M0 87.5h1M76.5 7.5h1M181 194h1M140 171.5h1M181 58h1M110 31.5h1M39 64.5h1M46 56h1M51 150.5h1M150 192.5h1M96 123.5h1M49 101.5h1M104 151h1M151 47.5h1M158 67.5h1M127 23.5h1M174.5 145.5h1M181 194.5h1M153.5 106.5h1M15 38h1M55.5 20.5h1M108 99.5h1M142 32.5h1M18.5 38.5h1M99 195.5h1M158.5 116.5h1M162 10.5h1M190.5 104.5h1M54 79.5h1M120 163h1M25 115.5h1M6.5 73.5h1M18.5 6.5h1M60 111.5h1M10 163.5h1M41 94h1M122.5 135.5h1M161 6.5h1M18.5 95.5h1M116 34.5h1M73 76h1M78 174.5h1M172.5 30.5h1M140 72.5h1M48 97.5h1M96.5 179.5h1M192.5 52.5h1M74 178h1M118 174h1M91 36.5h1M116 173h1M137 195h1M75 37h1M8 44h1M2 45.5h1M9 48h1M106.5 23.5h1M85 196.5h1M167 57h1M104 139h1M49.5 91.5h1M191 13h1M59 88.5h1M132 120.5h1M42.5 41.5h1M124 51.5h1M120.5 74.5h1M120 58h1M125 107.5h1M130 27.5h1M80 110h1M183 134h1M62 54.5h1M175.5 119.5h1M85.5 62.5h1M198 154.5h1M83 68.5h1M71.5 195.5h1M143 85.5h1M49 17.5h1M44.5 78.5h1M174 159.5h1M76 7.5h1M0 118.5h1M131 51h1M101.5 178.5h1M33.5 114.5h1M13 113.5h1M61 39.5h1M121 190h1M184.5 59.5h1M44.5 143.5h1M127 175.5h1M98 33.5h1M104.5 172.5h1M23 134h1M123.5 167.5h1M12.5 71.5h1M143.5 106.5h1M172 142h1M22 147.5h1M69.5 161.5h1M185.5 93.5h1M33.5 3.5h1M191.5 138.5h1M113 187.5h1M37 49.5h1M111 41.5h1M188 51.5h1M193.5 82.5h1M88 177.5h1M54.5 89.5h1M100.5 152.5h1M61 126.5h1M12 15h1M38 80.5h1M122 177.5h1M74 176.5h1M130.5 28.5h1M51 7.5h1M16 119h1M147 119h1M87.5 185.5h1M150 184.5h1M151.5 117.5h1M156 88h1M9 122.5h1M55.5 175.5h1M181 22.5h1M192.5 54.5h1M52 123.5h1M80 187.5h1M39 141h1M87 49.5h1M7 121.5h1M25 113.5h1M159 121.5h1M45.5 62.5h1M12.5 154.5h1M40.5 195.5h1M17 78.5h1M34 187.5h1M137 35.5h1M196 146.5h1M65 177.5h1M191 0.5h1M113 125.5h1M143.5 27.5h1M138 38.5h1M29 8h1M136 25.5h1M27 41h1M80 141.5h1M139.5 36.5h1M19 54h1M188 194.5h1M141 117.5h1M110 46.5h1M131.5 126.5h1M37 186.5h1M96.5 107.5h1M53 134h1M38 198.5h1M144 179.5h1M53.5 22.5h1M77 155h1M17 86.5h1M165 61.5h1M157 55.5h1M8 186.5h1M60.5 151.5h1M196.5 40.5h1M22 24.5h1M61 186h1M197 33.5h1M118 8h1M114.5 112.5h1M171 154h1M75 70.5h1M155 102h1M116.5 129.5h1M86.5 152.5h1M76 72.5h1M87 116.5h1M125.5 118.5h1M130 185h1M174 77.5h1M198 34h1M174 16.5h1M35 146.5h1M91.5 192.5h1M97.5 194.5h1M152 86h1M54 2h1M74 6h1M16 101.5h1M9.5 48.5h1M12 1.5h1M148 156.5h1M2 168h1M192 127.5h1M25 150.5h1M26 116.5h1M174 26.5h1M146.5 184.5h1M130 125.5h1M168 98h1M4.5 132.5h1M134 138.5h1M109 43h1M195 115.5h1M74.5 97.5h1M121 72.5h1M169 17.5h1M128 129h1M34 175.5h1M23.5 128.5h1M70 186.5h1M168 132h1M52.5 17.5h1M109.5 81.5h1M84 188.5h1M74 61h1M126 5h1M4 91.5h1M28.5 100.5h1M45 37.5h1M121 176h1M143 174.5h1M54 196h1M182 133.5h1M51 80.5h1M157.5 58.5h1M93.5 31.5h1M74 94.5h1M30 59.5h1M62.5 9.5h1M128 141.5h1M160 30.5h1M81 59.5h1M113 85.5h1M94 198.5h1M184 119.5h1M14 27h1M171 20.5h1M25 84h1M106 14.5h1M62 168.5h1M121 85.5h1M38 11.5h1M76 134h1M83.5 90.5h1M110 99h1M173 37.5h1M110 26.5h1M65 125h1M47 50.5h1M177 72.5h1M198 64.5h1M86.5 168.5h1M187 181h1M45 134h1M44.5 81.5h1M194 72.5h1M124 172.5h1M25 5h1M193.5 129.5h1M114 25.5h1M30 105.5h1M196.5 198.5h1M31 180h1M182.5 7.5h1M68 90.5h1M1 155.5h1M111.5 168.5h1M176.5 107.5h1M54.5 57.5h1M128.5 183.5h1M99.5 81.5h1M20 53.5h1M14 137h1M56 144h1M153 25h1M177 99.5h1M188 6h1M111 124h1M82 4.5h1M130 64.5h1M93 143h1M59 191h1M37.5 79.5h1M22 162h1M98 22.5h1M15 135.5h1M75.5 178.5h1M67.5 193.5h1M151 57h1M34 37.5h1M118 133.5h1M3 37.5h1M10 143.5h1M77 153.5h1M20 73.5h1M189 108.5h1M90.5 44.5h1M43 162h1M173 196.5h1M150.5 13.5h1M161 166.5h1M92 53.5h1M28 44h1M118 184.5h1M193.5 124.5h1M12 102.5h1M82.5 157.5h1M123 10h1M75 182.5h1M90 15.5h1M14 73.5h1M195.5 9.5h1M72.5 19.5h1M145.5 70.5h1M55.5 192.5h1M153 187.5h1M65 128.5h1M121.5 38.5h1M44 165.5h1M153.5 82.5h1M100.5 138.5h1M52 11.5h1M155.5 35.5h1M157 162h1M55 149.5h1M10 145.5h1M17 10h1M119.5 112.5h1M11 42h1M141.5 179.5h1M163 175.5h1M152 169.5h1M189.5 22.5h1M13 163.5h1M16 184h1M19 104.5h1M187 190.5h1M5.5 51.5h1M5.5 64.5h1M8 55.5h1M23 174h1M155 107.5h1M98.5 41.5h1M58 36h1M164.5 130.5h1M58 22.5h1M9 143h1M63 151.5h1M196.5 183.5h1M37 165h1M63.5 0.5h1M106 99.5h1M14 61.5h1M46 146.5h1M134 54h1M90.5 79.5h1M70.5 42.5h1M18 191h1M75 173.5h1M177.5 158.5h1M12 126.5h1M192 49.5h1M135.5 180.5h1M113 157.5h1M154 56.5h1M1 190.5h1M123 171.5h1M59.5 97.5h1M120.5 27.5h1M162 43.5h1M159 3.5h1M53 166.5h1M38 41h1M109 106h1M158 159.5h1M91 3h1M9 34.5h1M159 56.5h1M30.5 131.5h1M7 5h1M140.5 168.5h1M61 161.5h1M69 172.5h1M5 92.5h1M105.5 130.5h1M174 191.5h1M55 191.5h1M133 3.5h1M139 156.5h1M179.5 35.5h1M122 196.5h1M77 24.5h1M7 115.5h1M191 67.5h1M158 14.5h1M66 185.5h1M107 75.5h1M121.5 142.5h1M16 148h1M143 57.5h1M81.5 47.5h1M134.5 102.5h1M143 194h1M163 129.5h1M190 82h1M64 26.5h1M143 19h1M178.5 189.5h1M87 85.5h1M56 47h1M78.5 100.5h1M33 62.5h1M65 126.5h1M51 71.5h1M126.5 18.5h1M124 30h1M123 57.5h1M30.5 157.5h1M23 120h1M180 64h1" stroke="#fff" stroke-opacity="0.55" stroke-width="1" fill="none"/></pattern><mask id="dm5" maskUnits="userSpaceOnUse" x="0" y="0" width="1767" height="1211"><g fill="#fff" filter="url(#bl)"><polygon points="295,694 364,685 373,815 295,824" /></g></mask></defs><g clip-path="url(#vc)"><path d="M12.6 0.0L0.0 8.0M49.1 0.0L0.0 31.8M85.7 0.0L0.0 56.7M122.2 0.0L0.0 82.8M158.8 0.0L0.0 110.1M195.3 0.0L0.0 138.9M231.9 0.0L0.0 169.1M268.4 0.0L0.0 200.9M305.0 0.0L0.0 234.4M341.5 0.0L0.0 269.7M378.1 0.0L0.0 307.1M414.7 0.0L0.0 346.7M451.2 0.0L0.0 388.7M487.8 0.0L0.0 433.2M524.4 0.0L0.0 480.7M560.9 0.0L0.0 531.3M597.5 0.0L0.0 585.4M634.1 0.0L0.0 643.3M670.6 0.0L0.0 705.5M707.2 0.0L0.0 772.5M743.8 0.0L0.0 844.8M780.4 0.0L0.0 923.2M816.9 0.0L0.0 1008.3M853.5 0.0L0.0 1101.1M890.1 0.0L0.0 1202.8M926.7 -0.0L73.0 1211.0M963.3 -0.0L152.1 1211.0M999.9 0.0L231.2 1211.0M1036.5 0.0L310.2 1211.0M1073.0 0.0L389.3 1211.0M1109.6 0.0L468.4 1211.0M1146.2 0.0L547.5 1211.0M1182.8 0.0L626.6 1211.0M1219.4 0.0L705.7 1211.0M1256.0 0.0L784.8 1211.0M1292.6 0.0L864.0 1211.0M1329.2 0.0L943.1 1211.0M1365.8 0.0L1022.2 1211.0M1402.4 0.0L1101.3 1211.0M1439.0 0.0L1180.4 1211.0M1475.6 0.0L1259.6 1211.0M1512.2 0.0L1338.7 1211.0M1548.9 0.0L1417.8 1211.0M1585.5 0.0L1497.0 1211.0M1622.1 0.0L1576.1 1211.0M1658.7 0.0L1655.3 1211.0M1695.3 0.0L1734.4 1211.0M1731.9 0.0L1767.0 520.2M1691.4 0.0L1767.0 11.2M1587.8 0.0L1767.0 26.9M1484.2 0.0L1767.0 43.2M1380.6 0.0L1767.0 59.9M1277.0 0.0L1767.0 77.1M1173.5 0.0L1767.0 94.9M1070.0 0.0L1767.0 113.2M966.4 0.0L1767.0 132.2M862.9 0.0L1767.0 151.8M759.4 0.0L1767.0 172.1M656.0 0.0L1767.0 193.0M552.5 0.0L1767.0 214.7M449.0 0.0L1767.0 237.2M345.6 0.0L1767.0 260.5M242.2 0.0L1767.0 284.6M138.7 0.0L1767.0 309.7M35.3 0.0L1767.0 335.7M0.0 13.5L1767.0 362.7M0.0 34.6L1767.0 390.9M0.0 56.5L1767.0 420.2M0.0 79.4L1767.0 450.7M0.0 103.3L1767.0 482.5M0.0 128.2L1767.0 515.6M0.0 154.2L1767.0 550.3M0.0 181.4L1767.0 586.5M0.0 209.9L1767.0 624.4M0.0 239.7L1767.0 664.2M-0.0 271.0L1767.0 705.8M0.0 303.9L1767.0 749.6M0.0 338.4L1767.0 795.6M0.0 374.7L1767.0 844.0M0.0 413.1L1767.0 895.1M0.0 453.5L1767.0 949.0M0.0 496.3L1767.0 1005.9M0.0 541.6L1767.0 1066.2M0.0 589.6L1767.0 1130.2M0.0 640.6L1767.0 1198.2M0.0 694.9L1584.1 1211.0M0.0 752.9L1360.7 1211.0M-0.0 814.9L1137.3 1211.0M0.0 881.3L913.9 1211.0M0.0 952.6L690.6 1211.0M0.0 1029.4L467.3 1211.0M0.0 1112.4L244.0 1211.0M0.0 1202.2L20.8 1211.0" stroke="#505050" stroke-width=".8" fill="none" stroke-opacity=".62"/><rect width="1767" height="1211" fill="url(#dp0)" mask="url(#dm0)"/><rect width="1767" height="1211" fill="url(#dp1)" mask="url(#dm1)"/><rect width="1767" height="1211" fill="url(#dp2)" mask="url(#dm2)"/><rect width="1767" height="1211" fill="url(#dp3)" mask="url(#dm3)"/><rect width="1767" height="1211" fill="url(#dp4)" mask="url(#dm4)"/><rect width="1767" height="1211" fill="url(#dp5)" mask="url(#dm5)"/><path d="M646 198.0l141 20.0M693 207.3l52 7.6M796 276.1l41 5.3M1096 333.7l108 16.9M395 15.5l93 9.8M423 91.6l34 4.8M702 225.0l90 14.4M650 103.7l150 28.4M975 247.6l68 8.2M507 34.0l122 16.6M981 140.0l145 25.6M261 80.8l139 19.8M1094 143.6l39 6.1M923 100.9l40 5.3M1080 264.4l44 5.4M347 30.6l126 14.6M736 160.4l53 8.8M372 226.1l44 6.1M442 100.9l147 25.2M440 142.6l133 20.9M442 97.0l123 15.9M513 35.1l41 6.2M468 211.9l75 10.5M1076 172.5l99 17.6M416 62.1l139 24.1M473 74.1l119 21.9M944 252.4l52 -43.5M732 171.8l36 -37.0M342 154.9l61 -64.8M746 168.4l85 -72.9M303 165.5l54 -44.2M421 191.4l62 -52.2M1017 266.3l70 -68.2M395 104.6l26 -28.1M836 278.5l77 -82.3M958 322.0l52 -54.1M930 244.4l66 -60.0M905.5 306v29M963.5 364v65M1053.5 273v58M903.5 281v63M396.5 328v26M924.5 287v35M1023.5 290v53M1249.5 253v26M618.5 317v34M483.5 351v55" fill="none" stroke="#fff" stroke-opacity=".3" stroke-width="1" stroke-dasharray="1 3.3 1 6.1 1 2.2 1 4.7 1 8.4"/><polyline points="182.0,593.1 218.7,592.8 276.5,594.2 333.5,599.7 387.4,606.9 440.5,617.0 491.3,627.8 545.0,640.5 594.5,652.1 650.5,665.8 702.9,678.1 761.5,693.1 815.2,705.8 876.7,721.4 934.3,735.1 995.0,749.2 1057.2,763.5 1120.9,779.9 1183.0,796.3 1248.2,811.6 1316.1,829.1 1380.6,843.2 1443.9,859.1 1520.0,877.9" fill="none" stroke="#e00000" stroke-width="1.7" stroke-linejoin="round"/><polyline points="182.0,593.1 218.7,592.8 276.5,594.2 333.5,599.7 387.4,606.9 440.5,617.0 491.3,627.8 545.0,640.5 594.5,652.1 650.5,665.8 702.9,678.1 761.5,693.1 815.2,705.8 876.7,721.4 934.3,735.1 995.0,749.2 1057.2,763.5 1120.9,779.9 1183.0,796.3 1248.2,811.6 1316.1,829.1 1380.6,843.2 1443.9,859.1 1520.0,877.9" fill="none" stroke="#f00808" stroke-width="3.1" stroke-dasharray="2.2 2.6"/><polyline points="182.0,593.1 218.7,592.8 276.5,594.2 333.5,599.7 387.4,606.9 440.5,617.0 491.3,627.8 545.0,640.5 594.5,652.1 650.5,665.8 702.9,678.1 761.5,693.1 815.2,705.8 876.7,721.4 934.3,735.1 995.0,749.2 1057.2,763.5 1120.9,779.9 1183.0,796.3 1248.2,811.6 1316.1,829.1 1380.6,843.2 1443.9,859.1 1520.0,877.9" fill="none" stroke="#700000" stroke-width="2.6" stroke-dasharray="0.8 4" stroke-dashoffset="-2.4" stroke-opacity=".7"/><rect x="216.1" y="591.5" width="4.2" height="2.6" fill="#12c812" transform="rotate(14 218.7 592.8)"/><rect x="273.9" y="592.9" width="4.2" height="2.6" fill="#12c812" transform="rotate(14 276.5 594.2)"/><rect x="330.9" y="598.4" width="4.2" height="2.6" fill="#12c812" transform="rotate(14 333.5 599.7)"/><rect x="384.8" y="605.6" width="4.2" height="2.6" fill="#12c812" transform="rotate(14 387.4 606.9)"/><rect x="437.9" y="615.7" width="4.2" height="2.6" fill="#12c812" transform="rotate(14 440.5 617.0)"/><rect x="488.7" y="626.5" width="4.2" height="2.6" fill="#12c812" transform="rotate(14 491.3 627.8)"/><rect x="542.4" y="639.2" width="4.2" height="2.6" fill="#12c812" transform="rotate(14 545.0 640.5)"/><rect x="591.9" y="650.8" width="4.2" height="2.6" fill="#12c812" transform="rotate(14 594.5 652.1)"/><rect x="647.9" y="664.5" width="4.2" height="2.6" fill="#12c812" transform="rotate(14 650.5 665.8)"/><rect x="700.3" y="676.8" width="4.2" height="2.6" fill="#12c812" transform="rotate(14 702.9 678.1)"/><rect x="758.9" y="691.8" width="4.2" height="2.6" fill="#12c812" transform="rotate(14 761.5 693.1)"/><rect x="812.6" y="704.5" width="4.2" height="2.6" fill="#12c812" transform="rotate(14 815.2 705.8)"/><rect x="874.1" y="720.1" width="4.2" height="2.6" fill="#12c812" transform="rotate(14 876.7 721.4)"/><rect x="931.7" y="733.8" width="4.2" height="2.6" fill="#12c812" transform="rotate(14 934.3 735.1)"/><rect x="992.4" y="747.9" width="4.2" height="2.6" fill="#12c812" transform="rotate(14 995.0 749.2)"/><rect x="1054.6" y="762.2" width="4.2" height="2.6" fill="#12c812" transform="rotate(14 1057.2 763.5)"/><rect x="1118.3" y="778.6" width="4.2" height="2.6" fill="#12c812" transform="rotate(14 1120.9 779.9)"/><rect x="1180.4" y="795.0" width="4.2" height="2.6" fill="#12c812" transform="rotate(14 1183.0 796.3)"/><rect x="1245.6" y="810.3" width="4.2" height="2.6" fill="#12c812" transform="rotate(14 1248.2 811.6)"/><rect x="1313.5" y="827.8" width="4.2" height="2.6" fill="#12c812" transform="rotate(14 1316.1 829.1)"/><rect x="1378.0" y="841.9" width="4.2" height="2.6" fill="#12c812" transform="rotate(14 1380.6 843.2)"/><rect x="1441.3" y="857.8" width="4.2" height="2.6" fill="#12c812" transform="rotate(14 1443.9 859.1)"/><g font-family="Liberation Sans,Arial,sans-serif" font-size="13.2" fill="#fff" text-anchor="middle"><text x="222.0" y="591.7">23</text><text x="279.0" y="593.7">22</text><text x="336.0" y="598.7">21</text><text x="391.0" y="606.7">20</text><text x="444.0" y="616.2">19</text><text x="496.0" y="628.2">18</text><text x="548.0" y="639.7">17</text><text x="600.0" y="652.7">16</text><text x="654.0" y="664.7">15</text><text x="707.0" y="678.7">14</text><text x="766.0" y="692.7">13</text><text x="821.0" y="706.7">12</text><text x="881.0" y="720.7">11</text><text x="941.0" y="735.7">10</text><text x="1000.5" y="749.2">9</text><text x="1062.0" y="763.7">8</text><text x="1126.0" y="779.7">7</text><text x="1189.0" y="796.7">6</text><text x="1255.0" y="811.7">5</text><text x="1323.0" y="828.7">4</text><text x="1388.8" y="843.7">3</text><text x="1454.4" y="860.0">2</text></g><polygon points="1449.6,862.1 1519.7,881.2 1521.3,874.8 1450.4,858.9" fill="#ee0000"/><defs><linearGradient id="gax" x1="0" y1="0" x2="1" y2="0"><stop offset="0" stop-color="#0c980c"/><stop offset=".55" stop-color="#18c818"/><stop offset="1" stop-color="#0c980c"/></linearGradient></defs><path d="M1522.0 876.5L1542.5 846.0" stroke="#0808c0" stroke-width="6.2" stroke-linecap="round"/><polygon points="1517.3,879.0 1523.9,879.0 1520.6,934.0 1514.4,934.0" fill="url(#gax)"/></g></svg>

</body></html>
